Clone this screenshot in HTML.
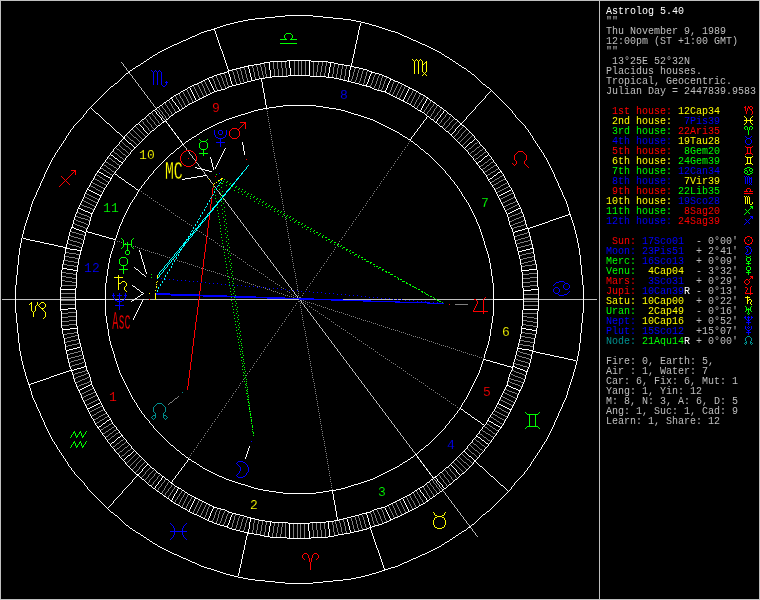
<!DOCTYPE html>
<html><head><meta charset="utf-8"><title>Astrolog 5.40</title>
<style>
html,body{margin:0;padding:0;background:#000;overflow:hidden}
svg{display:block;will-change:transform}
.sb text{font-family:"Liberation Mono",monospace;font-size:10px;white-space:pre}
.hn text{font-family:"Liberation Mono",monospace;font-size:13px;letter-spacing:.2px;text-anchor:middle}
.lb{font-family:"Liberation Mono",monospace}
</style></head><body>
<svg width="760" height="600" viewBox="0 0 760 600">
<rect width="760" height="600" fill="#000"/>
<g shape-rendering="crispEdges">
<path fill="#bfbfbf" d="M0 0h760v1h-760zM2 299h13v1h-13zM16 299h44v1h-44zM61 299h14v1h-14zM106 299h8v1h-8zM115 299h4v1h-4zM120 299h4v1h-4zM125 299h9v1h-9zM135 299h8v1h-8zM144 299h5v1h-5zM150 299h5v1h-5zM156 299h42v1h-42zM199 299h36v1h-36zM236 299h63v1h-63zM343 299h50v1h-50zM394 299h3v1h-3zM398 299h3v1h-3zM402 299h34v1h-34zM437 299h37v1h-37zM476 299h7v1h-7zM484 299h9v1h-9zM524 299h14v1h-14zM539 299h44v1h-44zM584 299h13v1h-13zM0 599h760v1h-760zM0 1h1v598h-1zM121 62h1v1h-1zM122 63h1v1h-1zM123 64h1v2h-1zM124 66h1v1h-1zM125 67h1v1h-1zM126 68h1v2h-1zM127 70h1v1h-1zM128 71h1v1h-1zM129 72h1v2h-1zM130 74h1v1h-1zM131 75h1v1h-1zM132 76h1v2h-1zM133 78h1v1h-1zM134 79h1v1h-1zM135 80h1v2h-1zM136 82h1v1h-1zM137 83h1v1h-1zM138 84h1v2h-1zM139 86h1v1h-1zM140 87h1v1h-1zM141 88h1v2h-1zM142 90h1v1h-1zM143 91h1v1h-1zM144 92h1v2h-1zM145 94h1v1h-1zM146 95h1v1h-1zM147 96h1v2h-1zM148 98h1v1h-1zM149 99h1v1h-1zM150 100h1v2h-1zM151 102h1v1h-1zM152 103h1v1h-1zM153 104h1v2h-1zM154 106h1v1h-1zM155 107h1v1h-1zM156 109h1v1h-1zM157 110h1v1h-1zM158 111h1v1h-1zM159 112h1v2h-1zM160 114h1v1h-1zM161 115h1v1h-1zM162 116h1v2h-1zM163 118h1v1h-1zM164 119h1v1h-1zM165 121h1v1h-1zM168 125h1v1h-1zM171 129h1v1h-1zM174 133h1v1h-1zM177 137h1v1h-1zM180 141h1v1h-1zM183 145h1v1h-1zM184 146h1v1h-1zM185 147h1v1h-1zM186 148h1v2h-1zM188 151h1v1h-1zM189 152h1v2h-1zM190 154h1v1h-1zM191 155h1v1h-1zM192 156h1v2h-1zM193 158h1v1h-1zM194 159h1v1h-1zM195 160h1v1h-1zM196 162h1v1h-1zM197 163h1v1h-1zM198 164h1v2h-1zM199 166h1v1h-1zM200 167h1v1h-1zM201 168h1v1h-1zM202 170h1v1h-1zM203 171h1v1h-1zM204 172h1v2h-1zM205 174h1v1h-1zM207 176h1v2h-1zM208 178h1v1h-1zM210 180h1v2h-1zM211 182h1v1h-1zM212 183h1v1h-1zM214 186h1v1h-1zM215 187h1v1h-1zM217 190h1v1h-1zM218 191h1v1h-1zM219 192h1v2h-1zM220 194h1v1h-1zM221 195h1v1h-1zM223 198h1v1h-1zM224 199h1v1h-1zM225 200h1v2h-1zM226 202h1v1h-1zM227 203h1v1h-1zM228 204h1v2h-1zM229 206h1v1h-1zM230 207h1v1h-1zM231 208h1v2h-1zM232 210h1v1h-1zM233 211h1v1h-1zM234 212h1v2h-1zM235 214h1v1h-1zM236 215h1v1h-1zM237 216h1v2h-1zM238 218h1v1h-1zM239 219h1v1h-1zM240 220h1v2h-1zM241 222h1v1h-1zM242 223h1v1h-1zM243 224h1v2h-1zM244 226h1v1h-1zM245 227h1v1h-1zM246 228h1v2h-1zM247 230h1v1h-1zM248 231h1v1h-1zM249 232h1v2h-1zM250 234h1v1h-1zM251 235h1v1h-1zM252 236h1v2h-1zM253 238h1v1h-1zM254 239h1v1h-1zM255 240h1v2h-1zM256 242h1v1h-1zM257 243h1v1h-1zM258 244h1v2h-1zM259 246h1v1h-1zM260 247h1v1h-1zM261 248h1v2h-1zM262 250h1v1h-1zM263 251h1v1h-1zM264 252h1v2h-1zM265 254h1v1h-1zM266 255h1v1h-1zM267 256h1v2h-1zM268 258h1v1h-1zM269 259h1v1h-1zM270 260h1v2h-1zM271 262h1v1h-1zM272 263h1v1h-1zM273 264h1v2h-1zM274 266h1v1h-1zM275 267h1v1h-1zM276 268h1v2h-1zM277 270h1v1h-1zM278 271h1v1h-1zM279 272h1v2h-1zM280 274h1v1h-1zM281 275h1v1h-1zM282 276h1v2h-1zM283 278h1v1h-1zM284 279h1v1h-1zM285 280h1v2h-1zM286 282h1v1h-1zM287 283h1v1h-1zM288 284h1v2h-1zM289 286h1v1h-1zM290 287h1v1h-1zM291 288h1v2h-1zM292 290h1v1h-1zM293 291h1v1h-1zM294 292h1v2h-1zM295 294h1v1h-1zM296 295h1v1h-1zM297 296h1v2h-1zM300 300h1v1h-1zM301 301h1v2h-1zM302 303h1v1h-1zM303 304h1v1h-1zM304 305h1v2h-1zM305 307h1v1h-1zM306 308h1v1h-1zM307 309h1v2h-1zM308 311h1v1h-1zM309 312h1v1h-1zM310 313h1v2h-1zM311 315h1v1h-1zM312 316h1v1h-1zM313 317h1v2h-1zM314 319h1v1h-1zM315 320h1v1h-1zM316 321h1v2h-1zM317 323h1v1h-1zM318 324h1v1h-1zM319 325h1v2h-1zM320 327h1v1h-1zM321 328h1v1h-1zM322 329h1v2h-1zM323 331h1v1h-1zM324 332h1v1h-1zM325 333h1v2h-1zM326 335h1v1h-1zM327 336h1v1h-1zM328 337h1v2h-1zM329 339h1v1h-1zM330 340h1v1h-1zM331 341h1v2h-1zM332 343h1v1h-1zM333 344h1v1h-1zM334 345h1v2h-1zM335 347h1v1h-1zM336 348h1v1h-1zM337 349h1v2h-1zM338 351h1v1h-1zM339 352h1v1h-1zM340 353h1v2h-1zM341 355h1v1h-1zM342 356h1v1h-1zM343 357h1v2h-1zM344 359h1v1h-1zM345 360h1v1h-1zM346 361h1v2h-1zM347 363h1v1h-1zM348 364h1v1h-1zM349 365h1v2h-1zM350 367h1v1h-1zM351 368h1v1h-1zM352 369h1v2h-1zM353 371h1v1h-1zM354 372h1v1h-1zM355 373h1v2h-1zM356 375h1v1h-1zM357 376h1v1h-1zM358 377h1v2h-1zM359 379h1v1h-1zM360 380h1v1h-1zM361 381h1v2h-1zM362 383h1v1h-1zM363 384h1v1h-1zM364 385h1v2h-1zM365 387h1v1h-1zM366 388h1v1h-1zM367 389h1v2h-1zM368 391h1v1h-1zM369 392h1v1h-1zM370 393h1v2h-1zM371 395h1v1h-1zM372 396h1v1h-1zM373 397h1v2h-1zM374 399h1v1h-1zM375 400h1v1h-1zM376 401h1v2h-1zM377 403h1v1h-1zM378 404h1v1h-1zM379 405h1v2h-1zM380 407h1v1h-1zM381 408h1v1h-1zM382 409h1v2h-1zM383 411h1v1h-1zM384 412h1v1h-1zM385 413h1v2h-1zM386 415h1v1h-1zM387 416h1v1h-1zM388 417h1v2h-1zM389 419h1v1h-1zM390 420h1v1h-1zM391 421h1v2h-1zM392 423h1v1h-1zM393 424h1v1h-1zM394 425h1v2h-1zM395 427h1v1h-1zM396 428h1v1h-1zM397 429h1v2h-1zM398 431h1v1h-1zM399 432h1v1h-1zM400 433h1v2h-1zM401 435h1v1h-1zM402 436h1v1h-1zM403 437h1v2h-1zM404 439h1v1h-1zM405 440h1v1h-1zM406 441h1v2h-1zM407 443h1v1h-1zM408 444h1v1h-1zM409 445h1v2h-1zM410 447h1v1h-1zM411 448h1v1h-1zM412 449h1v2h-1zM413 451h1v1h-1zM414 452h1v1h-1zM415 453h1v1h-1zM418 457h1v1h-1zM421 461h1v1h-1zM424 465h1v1h-1zM427 469h1v1h-1zM430 473h1v1h-1zM433 477h1v1h-1zM434 479h1v1h-1zM435 480h1v1h-1zM436 481h1v2h-1zM437 483h1v1h-1zM438 484h1v1h-1zM439 485h1v2h-1zM440 487h1v1h-1zM441 488h1v1h-1zM442 489h1v1h-1zM443 491h1v1h-1zM444 492h1v1h-1zM445 493h1v2h-1zM446 495h1v1h-1zM447 496h1v1h-1zM448 497h1v2h-1zM449 499h1v1h-1zM450 500h1v1h-1zM451 501h1v2h-1zM452 503h1v1h-1zM453 504h1v1h-1zM454 505h1v2h-1zM455 507h1v1h-1zM456 508h1v1h-1zM457 509h1v2h-1zM458 511h1v1h-1zM459 512h1v1h-1zM460 513h1v2h-1zM461 515h1v1h-1zM462 516h1v1h-1zM463 517h1v2h-1zM464 519h1v1h-1zM465 520h1v1h-1zM466 521h1v2h-1zM467 523h1v1h-1zM468 524h1v1h-1zM469 525h1v2h-1zM470 527h1v1h-1zM471 528h1v1h-1zM472 529h1v2h-1zM473 531h1v1h-1zM474 532h1v1h-1zM475 533h1v2h-1zM476 535h1v1h-1zM477 536h1v1h-1zM599 1h1v598h-1zM759 1h1v598h-1z"/>
<path fill="#ffffff" d="M285 15h28v1h-28zM275 16h10v1h-10zM313 16h10v1h-10zM265 17h10v1h-10zM323 17h10v1h-10zM255 18h10v1h-10zM333 18h10v1h-10zM248 19h7v1h-7zM343 19h8v1h-8zM243 20h5v1h-5zM351 20h5v1h-5zM238 21h5v1h-5zM356 21h5v1h-5zM234 22h4v1h-4zM361 22h4v1h-4zM230 23h4v1h-4zM365 23h4v1h-4zM226 24h4v1h-4zM369 24h3v1h-3zM223 25h3v1h-3zM372 25h4v1h-4zM220 26h3v1h-3zM376 26h3v1h-3zM217 27h3v1h-3zM379 27h3v1h-3zM214 28h3v1h-3zM382 28h3v1h-3zM211 29h4v1h-4zM385 29h3v1h-3zM207 30h4v1h-4zM388 30h3v1h-3zM204 31h3v1h-3zM391 31h4v1h-4zM201 32h3v1h-3zM395 32h3v1h-3zM199 33h2v1h-2zM398 33h2v1h-2zM197 34h2v1h-2zM400 34h2v1h-2zM195 35h2v1h-2zM402 35h2v1h-2zM192 36h3v1h-3zM404 36h3v1h-3zM190 37h2v1h-2zM407 37h2v1h-2zM188 38h2v1h-2zM409 38h2v1h-2zM186 39h2v1h-2zM411 39h2v1h-2zM183 40h3v1h-3zM413 40h3v1h-3zM181 41h2v1h-2zM416 41h2v1h-2zM179 42h2v1h-2zM418 42h2v1h-2zM177 43h2v1h-2zM420 43h2v1h-2zM174 44h3v1h-3zM422 44h3v1h-3zM172 45h2v1h-2zM425 45h2v1h-2zM170 46h2v1h-2zM427 46h2v1h-2zM168 47h2v1h-2zM429 47h2v1h-2zM166 48h2v1h-2zM431 48h2v1h-2zM164 49h2v1h-2zM433 49h2v1h-2zM162 50h2v1h-2zM435 50h2v1h-2zM160 51h2v1h-2zM437 51h2v1h-2zM158 52h2v1h-2zM439 52h2v1h-2zM155 54h2v1h-2zM442 54h2v1h-2zM153 55h2v1h-2zM445 56h2v1h-2zM150 57h2v1h-2zM447 57h2v1h-2zM147 59h2v1h-2zM450 59h2v1h-2zM287 60h24v1h-24zM144 61h2v1h-2zM270 61h17v1h-17zM311 61h17v1h-17zM453 61h2v1h-2zM264 62h6v1h-6zM328 62h6v1h-6zM141 63h2v1h-2zM260 63h4v1h-4zM334 63h4v1h-4zM456 63h2v1h-2zM254 64h6v1h-6zM338 64h6v1h-6zM138 65h2v1h-2zM248 65h6v1h-6zM344 65h6v1h-6zM459 65h2v1h-2zM136 66h2v1h-2zM244 66h5v1h-5zM350 66h4v1h-4zM240 67h4v1h-4zM354 67h5v1h-5zM462 67h2v1h-2zM133 68h2v1h-2zM236 68h4v1h-4zM359 68h4v1h-4zM464 68h2v1h-2zM232 69h4v1h-4zM363 69h4v1h-4zM130 70h2v1h-2zM228 70h4v1h-4zM367 70h2v1h-2zM227 71h2v1h-2zM369 71h3v1h-3zM468 71h2v1h-2zM224 72h3v1h-3zM371 72h4v1h-4zM126 73h2v1h-2zM220 73h4v1h-4zM375 73h4v1h-4zM217 74h3v1h-3zM379 74h3v1h-3zM472 74h2v1h-2zM214 75h3v1h-3zM288 75h22v1h-22zM382 75h2v1h-2zM212 76h2v1h-2zM272 76h16v1h-16zM310 76h16v1h-16zM384 76h3v1h-3zM209 77h3v1h-3zM265 77h7v1h-7zM326 77h8v1h-8zM387 77h2v1h-2zM207 78h2v1h-2zM259 78h6v1h-6zM334 78h5v1h-5zM389 78h2v1h-2zM205 79h2v1h-2zM255 79h4v1h-4zM339 79h4v1h-4zM390 79h3v1h-3zM203 80h2v1h-2zM251 80h4v1h-4zM343 80h4v1h-4zM393 80h2v1h-2zM201 81h2v1h-2zM247 81h4v1h-4zM347 81h4v1h-4zM395 81h3v1h-3zM199 82h2v1h-2zM244 82h3v1h-3zM351 82h4v1h-4zM398 82h2v1h-2zM115 83h2v1h-2zM197 83h2v1h-2zM240 83h4v1h-4zM355 83h4v1h-4zM400 83h2v1h-2zM194 84h3v1h-3zM236 84h4v1h-4zM359 84h3v1h-3zM402 84h2v1h-2zM483 84h2v1h-2zM192 85h2v1h-2zM232 85h4v1h-4zM362 85h5v1h-5zM404 85h2v1h-2zM111 86h2v1h-2zM190 86h2v1h-2zM229 86h3v1h-3zM366 86h4v1h-4zM406 86h2v1h-2zM188 87h2v1h-2zM227 87h2v1h-2zM370 87h2v1h-2zM408 87h2v1h-2zM487 87h2v1h-2zM225 88h2v1h-2zM372 88h2v1h-2zM409 88h3v1h-3zM185 89h2v1h-2zM221 89h4v1h-4zM374 89h3v1h-3zM412 89h2v1h-2zM183 90h2v1h-2zM217 90h4v1h-4zM377 90h4v1h-4zM414 90h2v1h-2zM181 91h2v1h-2zM214 91h3v1h-3zM381 91h5v1h-5zM416 91h2v1h-2zM212 92h2v1h-2zM385 92h2v1h-2zM178 93h2v1h-2zM210 93h2v1h-2zM387 93h2v1h-2zM419 93h2v1h-2zM176 94h2v1h-2zM208 94h2v1h-2zM389 94h2v1h-2zM421 94h2v1h-2zM174 95h2v1h-2zM206 95h2v1h-2zM391 95h2v1h-2zM423 95h2v1h-2zM204 96h2v1h-2zM393 96h2v1h-2zM171 97h2v1h-2zM202 97h2v1h-2zM395 97h2v1h-2zM426 97h2v1h-2zM170 98h2v1h-2zM200 98h2v1h-2zM397 98h2v1h-2zM427 98h2v1h-2zM198 99h2v1h-2zM399 99h2v1h-2zM167 100h2v1h-2zM196 100h2v1h-2zM401 100h3v1h-3zM430 100h2v1h-2zM194 101h2v1h-2zM403 101h2v1h-2zM164 102h2v1h-2zM192 102h2v1h-2zM405 102h2v1h-2zM433 102h2v1h-2zM190 103h2v1h-2zM407 103h2v1h-2zM188 104h2v1h-2zM409 104h2v1h-2zM160 105h2v1h-2zM283 105h33v1h-33zM437 105h2v1h-2zM185 106h2v1h-2zM276 106h7v1h-7zM316 106h7v1h-7zM412 106h2v1h-2zM157 107h2v1h-2zM269 107h7v1h-7zM323 107h6v1h-6zM440 107h2v1h-2zM182 108h2v1h-2zM263 108h6v1h-6zM329 108h7v1h-7zM415 108h2v1h-2zM258 109h5v1h-5zM336 109h5v1h-5zM153 110h2v1h-2zM179 110h2v1h-2zM254 110h4v1h-4zM341 110h4v1h-4zM418 110h3v1h-3zM444 110h2v1h-2zM177 111h2v1h-2zM251 111h3v1h-3zM345 111h3v1h-3zM420 111h2v1h-2zM175 112h2v1h-2zM248 112h3v1h-3zM348 112h3v1h-3zM422 112h2v1h-2zM96 113h2v1h-2zM149 113h2v1h-2zM245 113h3v1h-3zM351 113h3v1h-3zM241 114h4v1h-4zM354 114h4v1h-4zM449 114h2v1h-2zM171 115h2v1h-2zM238 115h3v1h-3zM358 115h3v1h-3zM235 116h3v1h-3zM361 116h3v1h-3zM427 116h2v1h-2zM232 117h3v1h-3zM364 117h3v1h-3zM229 118h3v1h-3zM367 118h3v1h-3zM142 119h2v1h-2zM166 119h2v1h-2zM226 119h3v1h-3zM370 119h3v1h-3zM431 119h2v1h-2zM455 119h2v1h-2zM224 120h2v1h-2zM373 120h2v1h-2zM163 121h2v1h-2zM222 121h2v1h-2zM375 121h2v1h-2zM162 122h2v1h-2zM219 122h3v1h-3zM377 122h2v1h-2zM435 122h2v1h-2zM107 123h2v1h-2zM217 123h2v1h-2zM379 123h2v1h-2zM460 123h2v1h-2zM136 124h2v1h-2zM215 124h2v1h-2zM381 124h2v1h-2zM460 124h2v1h-2zM158 125h2v1h-2zM213 125h2v1h-2zM383 125h2v1h-2zM462 125h2v1h-2zM211 126h2v1h-2zM385 126h2v1h-2zM440 126h2v1h-2zM209 127h2v1h-2zM387 127h2v1h-2zM207 128h2v1h-2zM389 128h2v1h-2zM205 129h2v1h-2zM391 129h2v1h-2zM152 130h2v1h-2zM203 130h2v1h-2zM393 130h2v1h-2zM395 131h2v1h-2zM446 131h2v1h-2zM117 132h2v1h-2zM200 132h2v1h-2zM397 132h2v1h-2zM197 134h2v1h-2zM400 134h2v1h-2zM450 134h2v1h-2zM194 136h2v1h-2zM403 136h2v1h-2zM123 137h2v1h-2zM192 137h2v1h-2zM405 137h2v1h-2zM123 138h2v1h-2zM189 139h2v1h-2zM408 139h3v1h-3zM186 141h2v1h-2zM411 141h2v1h-2zM470 142h2v1h-2zM129 143h2v1h-2zM182 144h2v1h-2zM415 144h2v1h-2zM134 147h2v1h-2zM177 148h2v1h-2zM421 149h2v1h-2zM171 153h2v1h-2zM426 153h2v1h-2zM111 155h2v1h-2zM485 156h2v1h-2zM115 158h2v1h-2zM119 161h2v1h-2zM479 161h2v1h-2zM121 162h2v1h-2zM476 163h2v1h-2zM195 167h2v1h-2zM197 168h4v1h-4zM201 169h4v1h-4zM205 170h4v1h-4zM97 171h2v1h-2zM209 171h3v1h-3zM500 171h2v1h-2zM99 172h2v1h-2zM498 172h2v1h-2zM101 173h2v1h-2zM115 174h2v1h-2zM104 175h2v1h-2zM203 175h4v1h-4zM494 175h2v1h-2zM106 176h2v1h-2zM197 176h6v1h-6zM108 177h2v1h-2zM119 177h2v1h-2zM191 177h6v1h-6zM110 178h2v1h-2zM185 178h6v1h-6zM490 178h2v1h-2zM122 179h2v1h-2zM182 179h3v1h-3zM488 179h2v1h-2zM126 182h2v1h-2zM129 184h2v1h-2zM132 186h2v1h-2zM87 189h2v1h-2zM136 189h2v1h-2zM89 190h2v1h-2zM509 190h2v1h-2zM91 191h2v1h-2zM507 191h2v1h-2zM93 192h2v1h-2zM505 192h2v1h-2zM95 193h2v1h-2zM503 193h2v1h-2zM97 194h2v1h-2zM501 194h2v1h-2zM99 195h3v1h-3zM499 195h2v1h-2zM78 208h3v1h-3zM518 208h3v1h-3zM81 209h2v1h-2zM516 209h2v1h-2zM83 210h2v1h-2zM514 210h2v1h-2zM85 211h3v1h-3zM512 211h2v1h-2zM88 212h2v1h-2zM510 212h2v1h-2zM90 213h3v1h-3zM508 213h2v1h-2zM568 214h3v1h-3zM565 215h3v1h-3zM562 216h3v1h-3zM559 217h3v1h-3zM556 218h3v1h-3zM553 219h3v1h-3zM550 220h3v1h-3zM548 221h2v1h-2zM545 222h3v1h-3zM542 223h3v1h-3zM539 224h3v1h-3zM536 225h3v1h-3zM533 226h3v1h-3zM71 227h3v1h-3zM530 227h3v1h-3zM74 228h2v1h-2zM525 228h5v1h-5zM76 229h3v1h-3zM522 229h3v1h-3zM79 230h3v1h-3zM518 230h4v1h-4zM82 231h2v1h-2zM86 231h2v1h-2zM515 231h3v1h-3zM84 232h2v1h-2zM88 232h4v1h-4zM513 232h2v1h-2zM92 233h3v1h-3zM95 234h4v1h-4zM99 235h3v1h-3zM102 236h4v1h-4zM106 237h3v1h-3zM23 238h3v1h-3zM109 238h4v1h-4zM26 239h4v1h-4zM113 239h3v1h-3zM30 240h5v1h-5zM35 241h5v1h-5zM40 242h4v1h-4zM44 243h5v1h-5zM49 244h5v1h-5zM54 245h4v1h-4zM58 246h5v1h-5zM63 247h4v1h-4zM65 248h5v1h-5zM530 248h4v1h-4zM70 249h7v1h-7zM526 249h4v1h-4zM77 250h5v1h-5zM522 250h4v1h-4zM518 251h4v1h-4zM62 268h5v1h-5zM67 269h6v1h-6zM136 269h2v1h-2zM529 269h8v1h-8zM73 270h5v1h-5zM521 270h8v1h-8zM142 274h2v1h-2zM133 286h2v1h-2zM60 289h16v1h-16zM137 289h2v1h-2zM531 289h8v1h-8zM523 290h8v1h-8zM141 292h2v1h-2zM141 294h2v1h-2zM138 296h2v1h-2zM135 298h2v1h-2zM75 299h31v1h-31zM493 299h31v1h-31zM132 300h2v1h-2zM68 308h8v1h-8zM60 309h8v1h-8zM523 309h16v1h-16zM70 328h8v1h-8zM521 328h5v1h-5zM62 329h8v1h-8zM526 329h6v1h-6zM532 330h5v1h-5zM77 347h3v1h-3zM73 348h4v1h-4zM517 348h5v1h-5zM69 349h4v1h-4zM522 349h7v1h-7zM66 350h3v1h-3zM529 350h4v1h-4zM532 351h4v1h-4zM536 352h4v1h-4zM540 353h5v1h-5zM545 354h5v1h-5zM550 355h4v1h-4zM554 356h5v1h-5zM559 357h5v1h-5zM564 358h4v1h-4zM483 359h3v1h-3zM568 359h5v1h-5zM486 360h4v1h-4zM573 360h3v1h-3zM490 361h3v1h-3zM493 362h4v1h-4zM497 363h3v1h-3zM500 364h4v1h-4zM504 365h3v1h-3zM84 366h3v1h-3zM507 366h4v1h-4zM512 366h3v1h-3zM81 367h3v1h-3zM511 367h2v1h-2zM515 367h2v1h-2zM77 368h4v1h-4zM517 368h3v1h-3zM74 369h3v1h-3zM520 369h3v1h-3zM69 370h5v1h-5zM523 370h2v1h-2zM66 371h3v1h-3zM525 371h3v1h-3zM63 372h3v1h-3zM60 373h3v1h-3zM57 374h3v1h-3zM54 375h3v1h-3zM51 376h3v1h-3zM49 377h2v1h-2zM46 378h3v1h-3zM43 379h3v1h-3zM40 380h3v1h-3zM37 381h3v1h-3zM34 382h3v1h-3zM31 383h3v1h-3zM28 384h3v1h-3zM90 384h2v1h-2zM88 385h2v1h-2zM506 385h3v1h-3zM86 386h2v1h-2zM509 386h2v1h-2zM84 387h2v1h-2zM511 387h2v1h-2zM82 388h2v1h-2zM513 388h3v1h-3zM80 389h2v1h-2zM516 389h2v1h-2zM78 390h2v1h-2zM518 390h3v1h-3zM98 403h2v1h-2zM497 403h2v1h-2zM96 404h2v1h-2zM499 404h2v1h-2zM94 405h2v1h-2zM501 405h2v1h-2zM92 406h2v1h-2zM503 406h2v1h-2zM90 407h2v1h-2zM505 407h2v1h-2zM87 408h3v1h-3zM507 408h2v1h-2zM461 409h2v1h-2zM509 409h3v1h-3zM465 412h2v1h-2zM468 414h2v1h-2zM472 417h2v1h-2zM109 419h2v1h-2zM475 419h2v1h-2zM107 420h2v1h-2zM487 420h2v1h-2zM478 421h2v1h-2zM489 421h2v1h-2zM491 422h2v1h-2zM103 423h2v1h-2zM482 424h2v1h-2zM494 424h2v1h-2zM496 425h2v1h-2zM99 426h2v1h-2zM498 426h2v1h-2zM97 427h2v1h-2zM500 427h2v1h-2zM121 435h2v1h-2zM476 436h2v1h-2zM118 437h2v1h-2zM478 437h2v1h-2zM482 440h2v1h-2zM112 442h2v1h-2zM486 443h2v1h-2zM171 445h2v1h-2zM426 445h2v1h-2zM421 449h2v1h-2zM177 450h2v1h-2zM463 451h2v1h-2zM182 454h2v1h-2zM415 454h2v1h-2zM128 455h2v1h-2zM469 456h2v1h-2zM186 457h2v1h-2zM411 457h2v1h-2zM188 459h3v1h-3zM408 459h2v1h-2zM474 460h2v1h-2zM192 461h2v1h-2zM405 461h2v1h-2zM474 461h2v1h-2zM194 462h2v1h-2zM403 462h2v1h-2zM147 464h2v1h-2zM197 464h2v1h-2zM400 464h2v1h-2zM200 466h2v1h-2zM397 466h2v1h-2zM480 466h2v1h-2zM395 467h2v1h-2zM446 467h2v1h-2zM152 468h2v1h-2zM203 468h2v1h-2zM393 468h2v1h-2zM205 469h2v1h-2zM391 469h2v1h-2zM207 470h2v1h-2zM389 470h2v1h-2zM209 471h2v1h-2zM387 471h2v1h-2zM211 472h2v1h-2zM385 472h2v1h-2zM440 472h2v1h-2zM158 473h2v1h-2zM213 473h2v1h-2zM383 473h2v1h-2zM462 473h2v1h-2zM136 474h3v1h-3zM215 474h2v1h-2zM381 474h2v1h-2zM137 475h2v1h-2zM217 475h2v1h-2zM379 475h2v1h-2zM162 476h2v1h-2zM219 476h3v1h-3zM377 476h2v1h-2zM435 476h2v1h-2zM491 476h2v1h-2zM222 477h2v1h-2zM375 477h2v1h-2zM434 477h2v1h-2zM224 478h2v1h-2zM373 478h2v1h-2zM142 479h2v1h-2zM166 479h2v1h-2zM226 479h3v1h-3zM370 479h3v1h-3zM431 479h2v1h-2zM455 479h2v1h-2zM229 480h3v1h-3zM367 480h3v1h-3zM232 481h3v1h-3zM364 481h3v1h-3zM170 482h2v1h-2zM235 482h3v1h-3zM361 482h3v1h-3zM427 482h2v1h-2zM171 483h2v1h-2zM238 483h3v1h-3zM358 483h3v1h-3zM241 484h4v1h-4zM354 484h4v1h-4zM449 484h2v1h-2zM149 485h2v1h-2zM245 485h3v1h-3zM351 485h3v1h-3zM501 485h2v1h-2zM175 486h2v1h-2zM248 486h3v1h-3zM348 486h3v1h-3zM422 486h2v1h-2zM177 487h2v1h-2zM251 487h3v1h-3zM345 487h3v1h-3zM420 487h2v1h-2zM153 488h2v1h-2zM178 488h3v1h-3zM254 488h4v1h-4zM341 488h4v1h-4zM418 488h2v1h-2zM444 488h2v1h-2zM258 489h5v1h-5zM336 489h5v1h-5zM182 490h2v1h-2zM263 490h6v1h-6zM329 490h7v1h-7zM415 490h2v1h-2zM157 491h2v1h-2zM269 491h7v1h-7zM323 491h6v1h-6zM440 491h2v1h-2zM185 492h2v1h-2zM276 492h7v1h-7zM316 492h7v1h-7zM412 492h2v1h-2zM160 493h2v1h-2zM283 493h33v1h-33zM437 493h2v1h-2zM188 494h2v1h-2zM409 494h2v1h-2zM190 495h2v1h-2zM407 495h2v1h-2zM164 496h2v1h-2zM192 496h2v1h-2zM405 496h2v1h-2zM433 496h2v1h-2zM194 497h2v1h-2zM403 497h2v1h-2zM167 498h2v1h-2zM195 498h3v1h-3zM401 498h2v1h-2zM430 498h2v1h-2zM198 499h2v1h-2zM399 499h2v1h-2zM170 500h2v1h-2zM200 500h2v1h-2zM397 500h2v1h-2zM427 500h2v1h-2zM171 501h2v1h-2zM202 501h2v1h-2zM395 501h2v1h-2zM426 501h2v1h-2zM204 502h2v1h-2zM393 502h2v1h-2zM174 503h2v1h-2zM206 503h2v1h-2zM391 503h2v1h-2zM423 503h2v1h-2zM176 504h2v1h-2zM208 504h2v1h-2zM389 504h2v1h-2zM421 504h2v1h-2zM178 505h2v1h-2zM210 505h2v1h-2zM387 505h2v1h-2zM419 505h2v1h-2zM212 506h2v1h-2zM385 506h2v1h-2zM181 507h2v1h-2zM213 507h4v1h-4zM381 507h4v1h-4zM416 507h2v1h-2zM183 508h2v1h-2zM217 508h4v1h-4zM377 508h4v1h-4zM414 508h2v1h-2zM185 509h2v1h-2zM221 509h4v1h-4zM374 509h3v1h-3zM412 509h2v1h-2zM225 510h2v1h-2zM372 510h2v1h-2zM410 510h2v1h-2zM188 511h2v1h-2zM227 511h2v1h-2zM370 511h2v1h-2zM408 511h2v1h-2zM487 511h2v1h-2zM111 512h2v1h-2zM190 512h2v1h-2zM229 512h3v1h-3zM366 512h4v1h-4zM406 512h2v1h-2zM192 513h2v1h-2zM232 513h4v1h-4zM362 513h5v1h-5zM404 513h2v1h-2zM194 514h3v1h-3zM236 514h4v1h-4zM359 514h3v1h-3zM402 514h2v1h-2zM483 514h2v1h-2zM115 515h2v1h-2zM197 515h2v1h-2zM240 515h4v1h-4zM355 515h4v1h-4zM400 515h2v1h-2zM199 516h2v1h-2zM244 516h3v1h-3zM351 516h4v1h-4zM398 516h2v1h-2zM201 517h2v1h-2zM247 517h4v1h-4zM347 517h4v1h-4zM395 517h3v1h-3zM203 518h2v1h-2zM250 518h5v1h-5zM343 518h4v1h-4zM393 518h2v1h-2zM205 519h2v1h-2zM255 519h4v1h-4zM339 519h4v1h-4zM390 519h3v1h-3zM207 520h2v1h-2zM259 520h6v1h-6zM334 520h5v1h-5zM389 520h2v1h-2zM209 521h3v1h-3zM265 521h7v1h-7zM326 521h8v1h-8zM387 521h2v1h-2zM212 522h2v1h-2zM272 522h16v1h-16zM310 522h16v1h-16zM384 522h3v1h-3zM214 523h3v1h-3zM288 523h22v1h-22zM382 523h2v1h-2zM217 524h3v1h-3zM379 524h3v1h-3zM472 524h2v1h-2zM126 525h2v1h-2zM220 525h4v1h-4zM375 525h4v1h-4zM224 526h4v1h-4zM372 526h3v1h-3zM227 527h2v1h-2zM369 527h3v1h-3zM468 527h2v1h-2zM130 528h2v1h-2zM229 528h3v1h-3zM367 528h2v1h-2zM232 529h4v1h-4zM363 529h4v1h-4zM133 530h2v1h-2zM236 530h4v1h-4zM359 530h4v1h-4zM464 530h2v1h-2zM240 531h4v1h-4zM354 531h5v1h-5zM462 531h2v1h-2zM136 532h2v1h-2zM244 532h5v1h-5zM350 532h4v1h-4zM138 533h2v1h-2zM247 533h7v1h-7zM344 533h6v1h-6zM459 533h2v1h-2zM254 534h6v1h-6zM338 534h6v1h-6zM141 535h2v1h-2zM260 535h4v1h-4zM334 535h4v1h-4zM456 535h2v1h-2zM264 536h6v1h-6zM328 536h6v1h-6zM144 537h2v1h-2zM270 537h17v1h-17zM311 537h17v1h-17zM453 537h2v1h-2zM287 538h24v1h-24zM147 539h2v1h-2zM450 539h2v1h-2zM150 541h2v1h-2zM447 541h2v1h-2zM445 542h2v1h-2zM153 543h2v1h-2zM155 544h2v1h-2zM442 544h2v1h-2zM158 546h2v1h-2zM439 546h2v1h-2zM160 547h2v1h-2zM437 547h2v1h-2zM162 548h2v1h-2zM435 548h2v1h-2zM164 549h2v1h-2zM433 549h2v1h-2zM166 550h2v1h-2zM431 550h2v1h-2zM168 551h2v1h-2zM429 551h2v1h-2zM170 552h2v1h-2zM427 552h2v1h-2zM172 553h2v1h-2zM425 553h2v1h-2zM174 554h3v1h-3zM422 554h3v1h-3zM177 555h2v1h-2zM420 555h2v1h-2zM179 556h2v1h-2zM418 556h2v1h-2zM181 557h2v1h-2zM416 557h2v1h-2zM183 558h3v1h-3zM413 558h3v1h-3zM186 559h2v1h-2zM411 559h2v1h-2zM188 560h2v1h-2zM409 560h2v1h-2zM190 561h2v1h-2zM407 561h2v1h-2zM192 562h3v1h-3zM404 562h3v1h-3zM195 563h2v1h-2zM402 563h2v1h-2zM197 564h2v1h-2zM400 564h2v1h-2zM199 565h2v1h-2zM398 565h2v1h-2zM201 566h3v1h-3zM395 566h3v1h-3zM204 567h3v1h-3zM391 567h4v1h-4zM207 568h4v1h-4zM388 568h3v1h-3zM211 569h3v1h-3zM384 569h4v1h-4zM214 570h3v1h-3zM382 570h3v1h-3zM217 571h3v1h-3zM379 571h3v1h-3zM220 572h3v1h-3zM376 572h3v1h-3zM223 573h3v1h-3zM372 573h4v1h-4zM226 574h4v1h-4zM369 574h3v1h-3zM230 575h4v1h-4zM365 575h4v1h-4zM234 576h4v1h-4zM361 576h4v1h-4zM238 577h5v1h-5zM356 577h5v1h-5zM243 578h5v1h-5zM351 578h5v1h-5zM248 579h7v1h-7zM343 579h8v1h-8zM255 580h10v1h-10zM333 580h10v1h-10zM265 581h10v1h-10zM323 581h10v1h-10zM275 582h10v1h-10zM313 582h10v1h-10zM285 583h28v1h-28zM15 285h1v28h-1zM16 275h1v10h-1zM16 313h1v10h-1zM17 265h1v10h-1zM17 323h1v10h-1zM18 255h1v10h-1zM18 333h1v10h-1zM19 248h1v7h-1zM19 343h1v8h-1zM20 243h1v5h-1zM20 351h1v5h-1zM21 238h1v5h-1zM21 356h1v5h-1zM22 234h1v4h-1zM22 361h1v4h-1zM23 230h1v4h-1zM23 365h1v4h-1zM24 226h1v4h-1zM24 369h1v3h-1zM25 223h1v3h-1zM25 372h1v4h-1zM26 220h1v3h-1zM26 376h1v3h-1zM27 217h1v3h-1zM27 379h1v3h-1zM28 214h1v3h-1zM28 382h1v2h-1zM29 211h1v3h-1zM29 385h1v3h-1zM30 207h1v4h-1zM30 388h1v3h-1zM31 204h1v3h-1zM31 391h1v4h-1zM32 201h1v3h-1zM32 395h1v3h-1zM33 199h1v2h-1zM33 398h1v2h-1zM34 197h1v2h-1zM34 400h1v2h-1zM35 195h1v2h-1zM35 402h1v2h-1zM36 192h1v3h-1zM36 404h1v3h-1zM37 190h1v2h-1zM37 407h1v2h-1zM38 188h1v2h-1zM38 409h1v2h-1zM39 186h1v2h-1zM39 411h1v2h-1zM40 183h1v3h-1zM40 413h1v3h-1zM41 181h1v2h-1zM41 416h1v2h-1zM42 179h1v2h-1zM42 418h1v2h-1zM43 177h1v2h-1zM43 420h1v2h-1zM44 174h1v3h-1zM44 422h1v3h-1zM45 172h1v2h-1zM45 425h1v2h-1zM46 170h1v2h-1zM46 427h1v2h-1zM47 168h1v2h-1zM47 429h1v2h-1zM48 166h1v2h-1zM48 431h1v2h-1zM49 164h1v2h-1zM49 433h1v2h-1zM50 162h1v2h-1zM50 435h1v2h-1zM51 160h1v2h-1zM51 437h1v2h-1zM52 158h1v2h-1zM52 439h1v2h-1zM53 157h1v1h-1zM53 441h1v1h-1zM54 155h1v2h-1zM54 442h1v2h-1zM55 153h1v2h-1zM55 444h1v1h-1zM56 152h1v1h-1zM56 445h1v2h-1zM57 150h1v2h-1zM57 447h1v2h-1zM58 149h1v1h-1zM58 449h1v1h-1zM59 147h1v2h-1zM59 450h1v2h-1zM60 146h1v1h-1zM60 287h1v2h-1zM60 290h1v19h-1zM60 310h1v1h-1zM60 452h1v1h-1zM61 144h1v2h-1zM61 270h1v17h-1zM61 311h1v17h-1zM61 453h1v2h-1zM62 143h1v1h-1zM62 264h1v4h-1zM62 269h1v1h-1zM62 328h1v1h-1zM62 330h1v4h-1zM62 455h1v1h-1zM63 141h1v2h-1zM63 260h1v4h-1zM63 334h1v4h-1zM63 456h1v2h-1zM64 140h1v1h-1zM64 254h1v6h-1zM64 338h1v6h-1zM64 458h1v1h-1zM65 138h1v2h-1zM65 249h1v5h-1zM65 344h1v6h-1zM65 459h1v2h-1zM66 136h1v2h-1zM66 244h1v3h-1zM66 351h1v3h-1zM66 461h1v1h-1zM67 135h1v1h-1zM67 240h1v4h-1zM67 354h1v5h-1zM67 462h1v2h-1zM68 133h1v2h-1zM68 236h1v4h-1zM68 359h1v4h-1zM68 464h1v2h-1zM69 132h1v1h-1zM69 232h1v4h-1zM69 363h1v4h-1zM69 466h1v1h-1zM70 130h1v2h-1zM70 229h1v3h-1zM70 367h1v2h-1zM70 467h1v1h-1zM71 129h1v1h-1zM71 228h1v1h-1zM71 369h1v1h-1zM71 371h1v1h-1zM71 468h1v2h-1zM72 128h1v1h-1zM72 224h1v3h-1zM72 372h1v3h-1zM72 470h1v1h-1zM73 126h1v2h-1zM73 220h1v4h-1zM73 375h1v4h-1zM73 471h1v1h-1zM74 125h1v1h-1zM74 217h1v3h-1zM74 379h1v3h-1zM74 472h1v2h-1zM75 124h1v1h-1zM75 214h1v3h-1zM75 288h1v1h-1zM75 290h1v9h-1zM75 300h1v8h-1zM75 309h1v1h-1zM75 382h1v2h-1zM75 474h1v1h-1zM76 123h1v1h-1zM76 212h1v2h-1zM76 272h1v16h-1zM76 310h1v16h-1zM76 384h1v3h-1zM76 475h1v1h-1zM77 122h1v1h-1zM77 209h1v3h-1zM77 265h1v5h-1zM77 271h1v1h-1zM77 326h1v2h-1zM77 329h1v5h-1zM77 387h1v2h-1zM77 476h1v1h-1zM78 121h1v1h-1zM78 207h1v1h-1zM78 259h1v6h-1zM78 334h1v5h-1zM78 389h1v1h-1zM78 477h1v1h-1zM79 120h1v1h-1zM79 205h1v2h-1zM79 255h1v4h-1zM79 339h1v4h-1zM79 391h1v2h-1zM79 478h1v1h-1zM80 119h1v1h-1zM80 203h1v2h-1zM80 251h1v4h-1zM80 343h1v4h-1zM80 393h1v2h-1zM80 479h1v1h-1zM81 118h1v1h-1zM81 201h1v2h-1zM81 247h1v3h-1zM81 347h1v4h-1zM81 395h1v3h-1zM81 480h1v1h-1zM82 117h1v1h-1zM82 199h1v2h-1zM82 244h1v3h-1zM82 351h1v4h-1zM82 398h1v2h-1zM82 481h1v1h-1zM83 115h1v2h-1zM83 197h1v2h-1zM83 240h1v4h-1zM83 355h1v4h-1zM83 400h1v2h-1zM83 482h1v1h-1zM84 114h1v1h-1zM84 194h1v3h-1zM84 236h1v4h-1zM84 359h1v3h-1zM84 402h1v2h-1zM84 483h1v2h-1zM85 113h1v1h-1zM85 192h1v2h-1zM85 233h1v3h-1zM85 362h1v4h-1zM85 404h1v2h-1zM85 485h1v1h-1zM86 111h1v2h-1zM86 190h1v2h-1zM86 229h1v2h-1zM86 367h1v3h-1zM86 406h1v2h-1zM86 486h1v1h-1zM87 110h1v1h-1zM87 188h1v1h-1zM87 227h1v2h-1zM87 370h1v2h-1zM87 409h1v1h-1zM87 487h1v2h-1zM88 109h1v1h-1zM88 187h1v1h-1zM88 225h1v2h-1zM88 372h1v2h-1zM88 410h1v2h-1zM88 489h1v1h-1zM89 108h1v1h-1zM89 185h1v2h-1zM89 221h1v4h-1zM89 374h1v3h-1zM89 412h1v2h-1zM89 490h1v1h-1zM90 107h1v1h-1zM90 183h1v2h-1zM90 217h1v4h-1zM90 377h1v4h-1zM90 414h1v2h-1zM90 491h1v1h-1zM91 106h1v1h-1zM91 108h1v1h-1zM91 181h1v2h-1zM91 214h1v3h-1zM91 381h1v3h-1zM91 416h1v2h-1zM91 492h1v1h-1zM92 105h1v1h-1zM92 109h1v1h-1zM92 180h1v1h-1zM92 212h1v1h-1zM92 385h1v2h-1zM92 418h1v1h-1zM92 493h1v1h-1zM93 104h1v1h-1zM93 110h1v1h-1zM93 178h1v2h-1zM93 210h1v2h-1zM93 387h1v2h-1zM93 419h1v2h-1zM93 494h1v1h-1zM94 103h1v1h-1zM94 111h1v1h-1zM94 176h1v2h-1zM94 208h1v2h-1zM94 389h1v2h-1zM94 421h1v2h-1zM94 495h1v1h-1zM95 102h1v1h-1zM95 112h1v1h-1zM95 174h1v2h-1zM95 206h1v2h-1zM95 391h1v2h-1zM95 423h1v2h-1zM95 496h1v1h-1zM96 101h1v1h-1zM96 173h1v1h-1zM96 204h1v2h-1zM96 393h1v2h-1zM96 425h1v1h-1zM96 497h1v1h-1zM97 100h1v1h-1zM97 172h1v1h-1zM97 202h1v2h-1zM97 395h1v2h-1zM97 426h1v1h-1zM97 498h1v1h-1zM98 99h1v1h-1zM98 114h1v1h-1zM98 170h1v1h-1zM98 200h1v2h-1zM98 397h1v2h-1zM98 428h1v1h-1zM98 499h1v1h-1zM99 98h1v1h-1zM99 115h1v1h-1zM99 169h1v1h-1zM99 198h1v2h-1zM99 399h1v2h-1zM99 429h1v1h-1zM99 500h1v1h-1zM100 97h1v1h-1zM100 116h1v1h-1zM100 167h1v2h-1zM100 196h1v2h-1zM100 401h1v2h-1zM100 430h1v2h-1zM100 501h1v1h-1zM101 96h1v1h-1zM101 117h1v1h-1zM101 166h1v1h-1zM101 194h1v1h-1zM101 403h1v2h-1zM101 425h1v1h-1zM101 432h1v1h-1zM101 502h1v1h-1zM102 95h1v1h-1zM102 118h1v1h-1zM102 164h1v2h-1zM102 192h1v2h-1zM102 405h1v2h-1zM102 424h1v1h-1zM102 433h1v2h-1zM102 503h1v1h-1zM103 94h1v1h-1zM103 119h1v1h-1zM103 163h1v1h-1zM103 174h1v1h-1zM103 190h1v2h-1zM103 407h1v2h-1zM103 435h1v1h-1zM103 504h1v1h-1zM104 93h1v1h-1zM104 120h1v1h-1zM104 162h1v1h-1zM104 188h1v2h-1zM104 409h1v2h-1zM104 436h1v1h-1zM104 505h1v1h-1zM105 92h1v1h-1zM105 121h1v1h-1zM105 160h1v2h-1zM105 187h1v1h-1zM105 283h1v16h-1zM105 300h1v16h-1zM105 411h1v1h-1zM105 422h1v1h-1zM105 437h1v2h-1zM105 506h1v1h-1zM106 91h1v1h-1zM106 122h1v1h-1zM106 159h1v1h-1zM106 185h1v2h-1zM106 276h1v7h-1zM106 316h1v7h-1zM106 412h1v2h-1zM106 421h1v1h-1zM106 439h1v1h-1zM106 507h1v1h-1zM107 90h1v1h-1zM107 157h1v2h-1zM107 184h1v1h-1zM107 269h1v7h-1zM107 323h1v6h-1zM107 414h1v1h-1zM107 440h1v2h-1zM107 508h1v1h-1zM108 89h1v1h-1zM108 156h1v1h-1zM108 182h1v2h-1zM108 263h1v6h-1zM108 329h1v7h-1zM108 415h1v2h-1zM108 442h1v1h-1zM108 507h1v1h-1zM108 509h1v1h-1zM109 88h1v1h-1zM109 124h1v1h-1zM109 155h1v1h-1zM109 181h1v1h-1zM109 258h1v5h-1zM109 336h1v5h-1zM109 417h1v1h-1zM109 443h1v1h-1zM109 506h1v1h-1zM109 510h1v1h-1zM110 87h1v1h-1zM110 125h1v1h-1zM110 153h1v2h-1zM110 179h1v2h-1zM110 254h1v4h-1zM110 341h1v4h-1zM110 418h1v1h-1zM110 444h1v2h-1zM110 505h1v1h-1zM110 511h1v1h-1zM111 126h1v1h-1zM111 152h1v1h-1zM111 177h1v1h-1zM111 251h1v3h-1zM111 345h1v3h-1zM111 420h1v2h-1zM111 443h1v1h-1zM111 446h1v1h-1zM111 504h1v1h-1zM112 127h1v1h-1zM112 151h1v1h-1zM112 175h1v2h-1zM112 248h1v3h-1zM112 348h1v3h-1zM112 422h1v2h-1zM112 447h1v1h-1zM112 503h1v1h-1zM113 85h1v1h-1zM113 128h1v1h-1zM113 149h1v2h-1zM113 156h1v1h-1zM113 174h1v1h-1zM113 245h1v3h-1zM113 351h1v3h-1zM113 424h1v1h-1zM113 448h1v1h-1zM113 501h1v2h-1zM113 513h1v1h-1zM114 84h1v1h-1zM114 129h1v1h-1zM114 148h1v1h-1zM114 157h1v1h-1zM114 173h1v1h-1zM114 241h1v4h-1zM114 354h1v4h-1zM114 425h1v1h-1zM114 441h1v1h-1zM114 449h1v2h-1zM114 500h1v1h-1zM114 514h1v1h-1zM115 130h1v1h-1zM115 147h1v1h-1zM115 171h1v2h-1zM115 238h1v1h-1zM115 358h1v3h-1zM115 426h1v1h-1zM115 440h1v1h-1zM115 451h1v1h-1zM115 499h1v1h-1zM116 131h1v1h-1zM116 146h1v1h-1zM116 170h1v1h-1zM116 235h1v3h-1zM116 361h1v3h-1zM116 427h1v2h-1zM116 439h1v1h-1zM116 452h1v1h-1zM116 498h1v1h-1zM117 82h1v1h-1zM117 145h1v1h-1zM117 159h1v1h-1zM117 169h1v1h-1zM117 175h1v1h-1zM117 232h1v3h-1zM117 364h1v3h-1zM117 429h1v1h-1zM117 438h1v1h-1zM117 453h1v1h-1zM117 497h1v1h-1zM117 516h1v1h-1zM118 81h1v1h-1zM118 144h1v1h-1zM118 160h1v1h-1zM118 168h1v1h-1zM118 176h1v1h-1zM118 229h1v3h-1zM118 367h1v3h-1zM118 430h1v1h-1zM118 454h1v1h-1zM118 496h1v1h-1zM118 517h1v1h-1zM119 80h1v1h-1zM119 133h1v1h-1zM119 142h1v2h-1zM119 166h1v2h-1zM119 226h1v3h-1zM119 370h1v3h-1zM119 431h1v2h-1zM119 455h1v2h-1zM119 495h1v1h-1zM119 518h1v1h-1zM120 79h1v1h-1zM120 134h1v1h-1zM120 141h1v1h-1zM120 165h1v1h-1zM120 224h1v2h-1zM120 373h1v2h-1zM120 433h1v1h-1zM120 436h1v1h-1zM120 457h1v1h-1zM120 494h1v1h-1zM120 519h1v1h-1zM121 78h1v1h-1zM121 135h1v1h-1zM121 140h1v1h-1zM121 164h1v1h-1zM121 178h1v1h-1zM121 222h1v2h-1zM121 375h1v2h-1zM121 434h1v1h-1zM121 458h1v1h-1zM121 493h1v1h-1zM121 520h1v1h-1zM122 77h1v1h-1zM122 136h1v1h-1zM122 139h1v1h-1zM122 163h1v1h-1zM122 219h1v3h-1zM122 377h1v2h-1zM122 436h1v1h-1zM122 459h1v1h-1zM122 491h1v2h-1zM122 521h1v1h-1zM123 76h1v1h-1zM123 161h1v1h-1zM123 217h1v2h-1zM123 379h1v2h-1zM123 437h1v1h-1zM123 460h1v1h-1zM123 490h1v1h-1zM123 522h1v1h-1zM124 75h1v1h-1zM124 136h1v1h-1zM124 160h1v1h-1zM124 180h1v1h-1zM124 215h1v2h-1zM124 381h1v2h-1zM124 438h1v1h-1zM124 459h1v1h-1zM124 461h1v1h-1zM124 489h1v1h-1zM124 523h1v1h-1zM125 74h1v1h-1zM125 135h1v1h-1zM125 139h1v1h-1zM125 158h1v2h-1zM125 181h1v1h-1zM125 213h1v2h-1zM125 383h1v2h-1zM125 439h1v1h-1zM125 458h1v1h-1zM125 462h1v2h-1zM125 488h1v1h-1zM125 524h1v1h-1zM126 134h1v1h-1zM126 140h1v1h-1zM126 157h1v1h-1zM126 211h1v2h-1zM126 385h1v2h-1zM126 440h1v2h-1zM126 457h1v1h-1zM126 464h1v1h-1zM126 487h1v1h-1zM127 133h1v1h-1zM127 141h1v1h-1zM127 156h1v1h-1zM127 209h1v2h-1zM127 387h1v2h-1zM127 442h1v1h-1zM127 456h1v1h-1zM127 465h1v1h-1zM127 486h1v1h-1zM128 72h1v1h-1zM128 132h1v1h-1zM128 142h1v1h-1zM128 155h1v1h-1zM128 183h1v1h-1zM128 207h1v2h-1zM128 389h1v2h-1zM128 443h1v1h-1zM128 466h1v1h-1zM128 485h1v1h-1zM128 526h1v1h-1zM129 71h1v1h-1zM129 131h1v1h-1zM129 154h1v1h-1zM129 205h1v2h-1zM129 391h1v2h-1zM129 444h1v1h-1zM129 467h1v1h-1zM129 484h1v1h-1zM129 527h1v1h-1zM130 130h1v1h-1zM130 152h1v2h-1zM130 203h1v2h-1zM130 393h1v2h-1zM130 445h1v1h-1zM130 454h1v1h-1zM130 468h1v1h-1zM130 483h1v1h-1zM131 129h1v1h-1zM131 144h1v1h-1zM131 151h1v1h-1zM131 185h1v1h-1zM131 202h1v1h-1zM131 301h1v1h-1zM131 395h1v2h-1zM131 446h1v2h-1zM131 453h1v1h-1zM131 469h1v1h-1zM131 482h1v1h-1zM132 69h1v1h-1zM132 128h1v1h-1zM132 145h1v1h-1zM132 150h1v1h-1zM132 200h1v2h-1zM132 285h1v1h-1zM132 397h1v2h-1zM132 448h1v1h-1zM132 452h1v1h-1zM132 470h1v1h-1zM132 480h1v2h-1zM132 529h1v1h-1zM133 127h1v1h-1zM133 146h1v1h-1zM133 149h1v1h-1zM133 199h1v1h-1zM133 318h1v2h-1zM133 399h1v1h-1zM133 449h1v1h-1zM133 451h1v1h-1zM133 471h1v1h-1zM133 479h1v1h-1zM134 126h1v1h-1zM134 148h1v1h-1zM134 187h1v1h-1zM134 197h1v2h-1zM134 267h1v1h-1zM134 299h1v1h-1zM134 316h1v2h-1zM134 400h1v2h-1zM134 450h1v1h-1zM134 472h1v1h-1zM134 478h1v1h-1zM135 67h1v1h-1zM135 125h1v1h-1zM135 188h1v1h-1zM135 196h1v1h-1zM135 268h1v1h-1zM135 287h1v1h-1zM135 314h1v2h-1zM135 402h1v1h-1zM135 451h1v1h-1zM135 473h1v1h-1zM135 477h1v1h-1zM135 531h1v1h-1zM136 146h1v1h-1zM136 194h1v2h-1zM136 288h1v1h-1zM136 312h1v2h-1zM136 403h1v2h-1zM136 452h1v1h-1zM136 476h1v1h-1zM137 145h1v1h-1zM137 192h1v2h-1zM137 297h1v1h-1zM137 310h1v2h-1zM137 405h1v2h-1zM137 453h1v1h-1zM138 123h1v1h-1zM138 144h1v1h-1zM138 190h1v2h-1zM138 270h1v1h-1zM138 308h1v2h-1zM138 407h1v1h-1zM138 454h1v1h-1zM139 122h1v1h-1zM139 124h1v1h-1zM139 143h1v1h-1zM139 189h1v1h-1zM139 250h1v2h-1zM139 271h1v1h-1zM139 290h1v1h-1zM139 306h1v2h-1zM139 408h1v2h-1zM139 455h1v1h-1zM139 473h1v1h-1zM139 476h1v1h-1zM140 64h1v1h-1zM140 121h1v1h-1zM140 125h1v1h-1zM140 142h1v1h-1zM140 188h1v1h-1zM140 252h1v3h-1zM140 272h1v1h-1zM140 291h1v1h-1zM140 295h1v1h-1zM140 304h1v2h-1zM140 410h1v1h-1zM140 456h1v1h-1zM140 472h1v1h-1zM140 477h1v1h-1zM140 534h1v1h-1zM141 120h1v1h-1zM141 126h1v1h-1zM141 141h1v1h-1zM141 186h1v2h-1zM141 255h1v4h-1zM141 273h1v1h-1zM141 302h1v2h-1zM141 411h1v2h-1zM141 457h1v1h-1zM141 471h1v1h-1zM141 478h1v1h-1zM142 127h1v1h-1zM142 140h1v1h-1zM142 185h1v1h-1zM142 259h1v3h-1zM142 300h1v2h-1zM142 413h1v1h-1zM142 458h1v1h-1zM142 469h1v2h-1zM143 62h1v1h-1zM143 128h1v2h-1zM143 139h1v1h-1zM143 184h1v1h-1zM143 262h1v3h-1zM143 293h1v1h-1zM143 299h1v1h-1zM143 414h1v1h-1zM143 459h1v1h-1zM143 468h1v1h-1zM143 536h1v1h-1zM144 118h1v1h-1zM144 130h1v1h-1zM144 138h1v1h-1zM144 182h1v2h-1zM144 265h1v4h-1zM144 275h1v1h-1zM144 415h1v2h-1zM144 460h1v1h-1zM144 467h1v1h-1zM144 480h1v1h-1zM145 117h1v1h-1zM145 131h1v1h-1zM145 137h1v1h-1zM145 181h1v1h-1zM145 269h1v3h-1zM145 276h1v1h-1zM145 417h1v1h-1zM145 461h1v1h-1zM145 466h1v1h-1zM145 481h1v1h-1zM146 60h1v1h-1zM146 116h1v1h-1zM146 132h1v1h-1zM146 136h1v1h-1zM146 180h1v1h-1zM146 272h1v2h-1zM146 418h1v1h-1zM146 462h1v1h-1zM146 465h1v1h-1zM146 482h1v1h-1zM146 538h1v1h-1zM147 115h1v1h-1zM147 133h1v1h-1zM147 135h1v1h-1zM147 179h1v1h-1zM147 419h1v1h-1zM147 463h1v1h-1zM147 483h1v1h-1zM148 114h1v1h-1zM148 134h1v1h-1zM148 177h1v2h-1zM148 420h1v1h-1zM148 484h1v1h-1zM149 58h1v1h-1zM149 133h1v1h-1zM149 176h1v1h-1zM149 421h1v2h-1zM149 465h1v1h-1zM149 540h1v1h-1zM150 132h1v1h-1zM150 175h1v1h-1zM150 423h1v1h-1zM150 466h1v1h-1zM151 112h1v1h-1zM151 131h1v1h-1zM151 174h1v1h-1zM151 424h1v1h-1zM151 467h1v1h-1zM151 486h1v1h-1zM152 56h1v1h-1zM152 111h1v1h-1zM152 173h1v1h-1zM152 425h1v1h-1zM152 487h1v1h-1zM152 542h1v1h-1zM153 171h1v2h-1zM153 426h1v2h-1zM154 129h1v1h-1zM154 170h1v1h-1zM154 428h1v1h-1zM154 469h1v1h-1zM155 109h1v1h-1zM155 111h1v1h-1zM155 128h1v1h-1zM155 169h1v1h-1zM155 429h1v1h-1zM155 470h1v1h-1zM155 486h1v2h-1zM155 489h1v1h-1zM156 108h1v1h-1zM156 112h1v2h-1zM156 127h1v1h-1zM156 168h1v1h-1zM156 430h1v1h-1zM156 471h1v1h-1zM156 485h1v1h-1zM156 490h1v1h-1zM157 53h1v1h-1zM157 114h1v1h-1zM157 126h1v1h-1zM157 167h1v1h-1zM157 431h1v1h-1zM157 472h1v1h-1zM157 484h1v1h-1zM157 545h1v1h-1zM158 115h1v1h-1zM158 166h1v1h-1zM158 432h1v1h-1zM158 482h1v2h-1zM159 106h1v1h-1zM159 116h1v1h-1zM159 165h1v1h-1zM159 433h1v1h-1zM159 481h1v1h-1zM159 492h1v1h-1zM160 117h1v1h-1zM160 124h1v1h-1zM160 164h1v1h-1zM160 434h1v1h-1zM160 474h1v1h-1zM160 480h1v1h-1zM161 118h1v2h-1zM161 123h1v1h-1zM161 163h1v1h-1zM161 435h1v1h-1zM161 475h1v1h-1zM161 478h1v2h-1zM162 104h1v1h-1zM162 120h1v1h-1zM162 162h1v1h-1zM162 436h1v1h-1zM162 477h1v1h-1zM162 494h1v1h-1zM163 103h1v1h-1zM163 161h1v1h-1zM163 437h1v1h-1zM163 495h1v1h-1zM164 160h1v1h-1zM164 438h1v1h-1zM164 477h1v1h-1zM165 120h1v1h-1zM165 159h1v1h-1zM165 439h1v1h-1zM165 478h1v1h-1zM166 101h1v1h-1zM166 121h1v2h-1zM166 158h1v1h-1zM166 440h1v1h-1zM166 497h1v1h-1zM167 123h1v1h-1zM167 157h1v1h-1zM167 441h1v1h-1zM168 118h1v1h-1zM168 124h1v1h-1zM168 156h1v1h-1zM168 442h1v1h-1zM168 480h1v1h-1zM169 99h1v1h-1zM169 117h1v1h-1zM169 125h1v2h-1zM169 155h1v1h-1zM169 443h1v1h-1zM169 481h1v1h-1zM169 499h1v1h-1zM170 116h1v1h-1zM170 127h1v1h-1zM170 154h1v1h-1zM170 444h1v1h-1zM171 128h1v1h-1zM172 99h1v2h-1zM172 129h1v2h-1zM172 480h1v2h-1zM172 498h1v2h-1zM173 96h1v1h-1zM173 101h1v1h-1zM173 114h1v1h-1zM173 131h1v1h-1zM173 152h1v1h-1zM173 446h1v1h-1zM173 479h1v1h-1zM173 484h1v1h-1zM173 496h1v2h-1zM173 502h1v1h-1zM174 102h1v1h-1zM174 113h1v1h-1zM174 132h1v1h-1zM174 151h1v1h-1zM174 447h1v1h-1zM174 478h1v1h-1zM174 485h1v1h-1zM174 494h1v2h-1zM175 103h1v2h-1zM175 133h1v2h-1zM175 150h1v1h-1zM175 448h1v1h-1zM175 476h1v2h-1zM175 493h1v1h-1zM176 105h1v1h-1zM176 135h1v1h-1zM176 149h1v1h-1zM176 449h1v1h-1zM176 475h1v1h-1zM176 491h1v2h-1zM177 106h1v1h-1zM177 136h1v1h-1zM177 474h1v1h-1zM177 489h1v2h-1zM178 107h1v2h-1zM178 137h1v2h-1zM178 472h1v2h-1zM179 109h1v1h-1zM179 139h1v1h-1zM179 147h1v1h-1zM179 451h1v1h-1zM179 471h1v1h-1zM180 92h1v1h-1zM180 140h1v1h-1zM180 146h1v1h-1zM180 452h1v1h-1zM180 470h1v1h-1zM180 506h1v1h-1zM181 109h1v1h-1zM181 141h1v2h-1zM181 145h1v1h-1zM181 453h1v1h-1zM181 468h1v2h-1zM181 489h1v1h-1zM182 143h1v1h-1zM182 467h1v1h-1zM183 466h1v1h-1zM184 107h1v1h-1zM184 143h1v1h-1zM184 455h1v1h-1zM184 464h1v2h-1zM184 491h1v1h-1zM185 142h1v1h-1zM185 456h1v1h-1zM185 463h1v1h-1zM186 462h1v1h-1zM187 88h1v1h-1zM187 105h1v1h-1zM187 460h1v2h-1zM187 493h1v1h-1zM187 510h1v1h-1zM188 140h1v1h-1zM188 458h1v1h-1zM189 509h1v2h-1zM190 88h1v2h-1zM190 507h1v2h-1zM191 90h1v2h-1zM191 138h1v1h-1zM191 460h1v1h-1zM191 505h1v2h-1zM192 92h1v2h-1zM192 503h1v2h-1zM193 94h1v2h-1zM193 501h1v2h-1zM194 96h1v2h-1zM194 499h1v2h-1zM195 98h1v2h-1zM196 135h1v1h-1zM196 463h1v1h-1zM199 133h1v1h-1zM199 465h1v1h-1zM202 131h1v1h-1zM202 467h1v1h-1zM208 79h1v1h-1zM208 518h1v2h-1zM209 80h1v2h-1zM209 516h1v2h-1zM210 82h1v2h-1zM210 157h1v2h-1zM210 513h1v3h-1zM211 84h1v2h-1zM211 159h1v4h-1zM211 511h1v2h-1zM212 86h1v2h-1zM212 163h1v4h-1zM212 509h1v2h-1zM213 88h1v2h-1zM213 167h1v3h-1zM213 508h1v1h-1zM214 30h1v1h-1zM214 90h1v1h-1zM215 31h1v3h-1zM215 167h1v2h-1zM216 34h1v3h-1zM216 165h1v2h-1zM217 37h1v3h-1zM217 163h1v2h-1zM218 40h1v3h-1zM218 161h1v2h-1zM219 43h1v3h-1zM219 159h1v2h-1zM220 46h1v3h-1zM220 157h1v2h-1zM221 49h1v2h-1zM221 155h1v2h-1zM222 51h1v3h-1zM222 153h1v2h-1zM223 54h1v3h-1zM223 151h1v2h-1zM224 57h1v3h-1zM224 149h1v2h-1zM225 60h1v3h-1zM225 148h1v1h-1zM226 63h1v3h-1zM227 66h1v3h-1zM227 525h1v1h-1zM228 69h1v1h-1zM228 72h1v2h-1zM228 523h1v2h-1zM229 74h1v3h-1zM229 520h1v3h-1zM230 77h1v4h-1zM230 517h1v3h-1zM231 81h1v3h-1zM231 515h1v2h-1zM232 84h1v1h-1zM232 514h1v1h-1zM238 573h1v3h-1zM239 568h1v5h-1zM240 564h1v4h-1zM241 559h1v5h-1zM242 142h1v3h-1zM242 554h1v5h-1zM243 145h1v6h-1zM243 550h1v4h-1zM244 151h1v4h-1zM244 545h1v5h-1zM245 457h1v2h-1zM245 540h1v5h-1zM246 454h1v3h-1zM246 536h1v4h-1zM247 451h1v3h-1zM247 534h1v2h-1zM248 67h1v2h-1zM248 448h1v3h-1zM248 529h1v3h-1zM249 69h1v4h-1zM249 446h1v2h-1zM249 522h1v7h-1zM250 73h1v4h-1zM250 519h1v3h-1zM251 77h1v3h-1zM261 79h1v3h-1zM262 82h1v6h-1zM263 88h1v5h-1zM264 93h1v6h-1zM265 99h1v6h-1zM266 105h1v3h-1zM268 532h1v4h-1zM269 63h1v7h-1zM269 526h1v6h-1zM270 70h1v7h-1zM270 522h1v4h-1zM289 61h1v7h-1zM289 524h1v14h-1zM290 68h1v7h-1zM308 524h1v7h-1zM309 61h1v14h-1zM309 531h1v7h-1zM328 73h1v4h-1zM328 522h1v7h-1zM329 67h1v6h-1zM329 529h1v7h-1zM330 63h1v4h-1zM332 491h1v3h-1zM333 494h1v6h-1zM334 500h1v5h-1zM335 505h1v6h-1zM336 511h1v6h-1zM337 517h1v3h-1zM347 519h1v3h-1zM348 77h1v4h-1zM348 522h1v4h-1zM349 70h1v7h-1zM349 526h1v4h-1zM350 67h1v3h-1zM350 530h1v2h-1zM351 63h1v3h-1zM352 58h1v5h-1zM353 54h1v4h-1zM354 49h1v5h-1zM355 44h1v5h-1zM356 40h1v4h-1zM357 35h1v5h-1zM358 30h1v5h-1zM359 26h1v4h-1zM360 23h1v3h-1zM366 84h1v1h-1zM366 514h1v1h-1zM367 82h1v2h-1zM367 515h1v3h-1zM368 79h1v3h-1zM368 518h1v4h-1zM369 76h1v3h-1zM369 522h1v3h-1zM370 74h1v2h-1zM370 525h1v2h-1zM370 528h1v2h-1zM371 73h1v1h-1zM371 530h1v3h-1zM372 533h1v3h-1zM373 536h1v3h-1zM374 539h1v3h-1zM375 542h1v3h-1zM376 545h1v3h-1zM377 548h1v2h-1zM378 550h1v3h-1zM379 553h1v3h-1zM380 556h1v3h-1zM381 559h1v3h-1zM382 562h1v3h-1zM383 565h1v3h-1zM384 568h1v1h-1zM385 90h1v1h-1zM385 508h1v2h-1zM386 88h1v2h-1zM386 510h1v2h-1zM387 85h1v3h-1zM387 512h1v2h-1zM388 83h1v2h-1zM388 514h1v2h-1zM389 81h1v2h-1zM389 516h1v2h-1zM390 80h1v1h-1zM390 518h1v1h-1zM399 133h1v1h-1zM399 465h1v1h-1zM402 135h1v1h-1zM402 463h1v1h-1zM403 99h1v1h-1zM403 499h1v2h-1zM404 97h1v2h-1zM404 501h1v2h-1zM405 95h1v2h-1zM405 503h1v2h-1zM406 93h1v2h-1zM406 505h1v2h-1zM407 91h1v2h-1zM407 138h1v1h-1zM407 460h1v1h-1zM407 507h1v2h-1zM408 89h1v2h-1zM408 509h1v2h-1zM410 140h1v1h-1zM410 458h1v1h-1zM411 105h1v1h-1zM411 137h1v2h-1zM411 493h1v1h-1zM412 136h1v1h-1zM413 135h1v1h-1zM413 142h1v1h-1zM413 456h1v1h-1zM414 107h1v1h-1zM414 133h1v2h-1zM414 143h1v1h-1zM414 455h1v1h-1zM414 491h1v1h-1zM415 132h1v1h-1zM416 131h1v1h-1zM416 455h1v1h-1zM417 109h1v1h-1zM417 129h1v2h-1zM417 145h1v1h-1zM417 453h1v1h-1zM417 456h1v2h-1zM417 489h1v1h-1zM418 92h1v1h-1zM418 128h1v1h-1zM418 146h1v1h-1zM418 452h1v1h-1zM418 458h1v1h-1zM418 506h1v1h-1zM419 127h1v1h-1zM419 147h1v1h-1zM419 451h1v1h-1zM419 459h1v1h-1zM419 489h1v1h-1zM420 125h1v2h-1zM420 148h1v1h-1zM420 450h1v1h-1zM420 460h1v2h-1zM420 490h1v2h-1zM421 108h1v2h-1zM421 124h1v1h-1zM421 462h1v1h-1zM421 492h1v1h-1zM422 106h1v2h-1zM422 123h1v1h-1zM422 463h1v1h-1zM422 493h1v1h-1zM423 104h1v2h-1zM423 121h1v2h-1zM423 150h1v1h-1zM423 448h1v1h-1zM423 464h1v2h-1zM423 494h1v2h-1zM424 103h1v1h-1zM424 113h1v1h-1zM424 120h1v1h-1zM424 151h1v1h-1zM424 447h1v1h-1zM424 466h1v1h-1zM424 485h1v1h-1zM424 496h1v1h-1zM425 96h1v1h-1zM425 101h1v2h-1zM425 114h1v1h-1zM425 119h1v1h-1zM425 152h1v1h-1zM425 446h1v1h-1zM425 467h1v1h-1zM425 484h1v1h-1zM425 497h1v1h-1zM425 502h1v1h-1zM426 99h1v2h-1zM426 115h1v1h-1zM426 117h1v2h-1zM426 468h1v2h-1zM426 483h1v1h-1zM426 498h1v2h-1zM427 470h1v1h-1zM428 154h1v1h-1zM428 444h1v1h-1zM428 471h1v1h-1zM429 99h1v1h-1zM429 117h1v1h-1zM429 155h1v1h-1zM429 443h1v1h-1zM429 472h1v2h-1zM429 481h1v1h-1zM429 499h1v1h-1zM430 118h1v1h-1zM430 156h1v1h-1zM430 442h1v1h-1zM430 474h1v1h-1zM430 480h1v1h-1zM431 157h1v1h-1zM431 441h1v1h-1zM431 475h1v1h-1zM432 101h1v1h-1zM432 158h1v1h-1zM432 440h1v1h-1zM432 476h1v2h-1zM432 497h1v1h-1zM433 120h1v1h-1zM433 159h1v1h-1zM433 439h1v1h-1zM433 478h1v1h-1zM434 121h1v1h-1zM434 160h1v1h-1zM434 438h1v1h-1zM435 103h1v1h-1zM435 161h1v1h-1zM435 437h1v1h-1zM435 495h1v1h-1zM436 104h1v1h-1zM436 121h1v1h-1zM436 162h1v1h-1zM436 436h1v1h-1zM436 478h1v1h-1zM436 494h1v1h-1zM437 119h1v2h-1zM437 123h1v1h-1zM437 163h1v1h-1zM437 435h1v1h-1zM437 475h1v1h-1zM437 479h1v2h-1zM438 118h1v1h-1zM438 124h1v1h-1zM438 164h1v1h-1zM438 434h1v1h-1zM438 474h1v1h-1zM438 481h1v1h-1zM439 106h1v1h-1zM439 117h1v1h-1zM439 125h1v1h-1zM439 165h1v1h-1zM439 433h1v1h-1zM439 473h1v1h-1zM439 482h1v1h-1zM439 492h1v1h-1zM440 115h1v2h-1zM440 166h1v1h-1zM440 432h1v1h-1zM440 483h1v1h-1zM441 53h1v1h-1zM441 114h1v1h-1zM441 167h1v1h-1zM441 431h1v1h-1zM441 484h1v1h-1zM441 545h1v1h-1zM442 108h1v1h-1zM442 113h1v1h-1zM442 127h1v1h-1zM442 168h1v1h-1zM442 430h1v1h-1zM442 471h1v1h-1zM442 485h1v2h-1zM442 490h1v1h-1zM443 109h1v1h-1zM443 111h1v2h-1zM443 128h1v1h-1zM443 169h1v1h-1zM443 429h1v1h-1zM443 470h1v1h-1zM443 487h1v1h-1zM443 489h1v1h-1zM444 55h1v1h-1zM444 129h1v1h-1zM444 170h1v1h-1zM444 428h1v1h-1zM444 469h1v1h-1zM444 543h1v1h-1zM445 130h1v1h-1zM445 171h1v2h-1zM445 426h1v2h-1zM445 468h1v1h-1zM446 111h1v1h-1zM446 173h1v1h-1zM446 425h1v1h-1zM446 487h1v1h-1zM447 112h1v1h-1zM447 174h1v1h-1zM447 424h1v1h-1zM447 486h1v1h-1zM448 113h1v1h-1zM448 132h1v1h-1zM448 175h1v1h-1zM448 423h1v1h-1zM448 466h1v1h-1zM448 485h1v1h-1zM449 58h1v1h-1zM449 133h1v1h-1zM449 176h1v1h-1zM449 421h1v2h-1zM449 465h1v1h-1zM449 540h1v1h-1zM450 177h1v2h-1zM450 420h1v1h-1zM450 464h1v1h-1zM451 115h1v1h-1zM451 135h1v1h-1zM451 179h1v1h-1zM451 419h1v1h-1zM451 463h1v1h-1zM451 465h1v1h-1zM451 483h1v1h-1zM452 60h1v1h-1zM452 116h1v1h-1zM452 133h1v1h-1zM452 136h1v1h-1zM452 180h1v1h-1zM452 418h1v1h-1zM452 462h1v1h-1zM452 466h1v1h-1zM452 482h1v1h-1zM452 538h1v1h-1zM453 117h1v1h-1zM453 132h1v1h-1zM453 137h1v1h-1zM453 181h1v1h-1zM453 417h1v1h-1zM453 461h1v1h-1zM453 467h1v1h-1zM453 481h1v1h-1zM454 118h1v1h-1zM454 131h1v1h-1zM454 138h1v1h-1zM454 182h1v2h-1zM454 415h1v2h-1zM454 460h1v1h-1zM454 468h1v1h-1zM454 480h1v1h-1zM455 62h1v1h-1zM455 129h1v2h-1zM455 139h1v1h-1zM455 184h1v1h-1zM455 414h1v1h-1zM455 459h1v1h-1zM455 469h1v1h-1zM455 536h1v1h-1zM456 128h1v1h-1zM456 140h1v1h-1zM456 185h1v1h-1zM456 413h1v1h-1zM456 458h1v1h-1zM456 470h1v2h-1zM457 120h1v1h-1zM457 127h1v1h-1zM457 141h1v1h-1zM457 186h1v2h-1zM457 411h1v2h-1zM457 457h1v1h-1zM457 472h1v1h-1zM457 478h1v1h-1zM458 64h1v1h-1zM458 121h1v1h-1zM458 126h1v1h-1zM458 142h1v1h-1zM458 188h1v1h-1zM458 410h1v1h-1zM458 456h1v1h-1zM458 473h1v1h-1zM458 477h1v1h-1zM458 534h1v1h-1zM459 122h1v1h-1zM459 125h1v1h-1zM459 143h1v1h-1zM459 189h1v2h-1zM459 409h1v1h-1zM459 455h1v1h-1zM459 474h1v1h-1zM459 476h1v1h-1zM460 144h1v1h-1zM460 191h1v1h-1zM460 407h1v2h-1zM460 454h1v1h-1zM460 475h1v1h-1zM461 66h1v1h-1zM461 145h1v1h-1zM461 192h1v2h-1zM461 405h1v2h-1zM461 453h1v1h-1zM461 474h1v1h-1zM461 532h1v1h-1zM462 122h1v1h-1zM462 146h1v1h-1zM462 194h1v2h-1zM462 403h1v2h-1zM462 452h1v1h-1zM463 121h1v1h-1zM463 147h1v1h-1zM463 196h1v1h-1zM463 402h1v1h-1zM463 410h1v1h-1zM464 120h1v1h-1zM464 126h1v1h-1zM464 148h1v1h-1zM464 197h1v2h-1zM464 400h1v2h-1zM464 411h1v1h-1zM464 450h1v1h-1zM464 472h1v1h-1zM465 119h1v1h-1zM465 127h1v1h-1zM465 147h1v1h-1zM465 149h1v1h-1zM465 199h1v1h-1zM465 399h1v1h-1zM465 449h1v1h-1zM465 452h1v1h-1zM465 471h1v1h-1zM466 69h1v1h-1zM466 117h1v2h-1zM466 128h1v1h-1zM466 146h1v1h-1zM466 150h1v1h-1zM466 200h1v2h-1zM466 397h1v2h-1zM466 448h1v1h-1zM466 453h1v1h-1zM466 470h1v1h-1zM466 529h1v1h-1zM467 70h1v1h-1zM467 116h1v1h-1zM467 129h1v1h-1zM467 145h1v1h-1zM467 151h1v1h-1zM467 202h1v1h-1zM467 395h1v2h-1zM467 413h1v1h-1zM467 446h1v2h-1zM467 454h1v1h-1zM467 469h1v1h-1zM467 528h1v1h-1zM468 115h1v1h-1zM468 130h1v1h-1zM468 144h1v1h-1zM468 152h1v2h-1zM468 203h1v2h-1zM468 393h1v2h-1zM468 445h1v1h-1zM468 455h1v1h-1zM468 468h1v1h-1zM469 114h1v1h-1zM469 131h1v1h-1zM469 143h1v1h-1zM469 154h1v1h-1zM469 205h1v2h-1zM469 391h1v2h-1zM469 444h1v1h-1zM469 467h1v1h-1zM470 72h1v1h-1zM470 113h1v1h-1zM470 132h1v1h-1zM470 155h1v1h-1zM470 207h1v2h-1zM470 389h1v2h-1zM470 415h1v1h-1zM470 443h1v1h-1zM470 466h1v1h-1zM470 526h1v1h-1zM471 73h1v1h-1zM471 112h1v1h-1zM471 133h1v1h-1zM471 156h1v1h-1zM471 209h1v2h-1zM471 387h1v2h-1zM471 416h1v1h-1zM471 442h1v1h-1zM471 457h1v1h-1zM471 465h1v1h-1zM471 525h1v1h-1zM472 111h1v1h-1zM472 134h1v1h-1zM472 141h1v1h-1zM472 157h1v1h-1zM472 211h1v2h-1zM472 385h1v2h-1zM472 440h1v2h-1zM472 458h1v1h-1zM472 464h1v1h-1zM473 110h1v1h-1zM473 135h1v1h-1zM473 140h1v1h-1zM473 158h1v2h-1zM473 213h1v2h-1zM473 383h1v2h-1zM473 439h1v1h-1zM473 459h1v1h-1zM473 462h1v2h-1zM474 75h1v1h-1zM474 109h1v1h-1zM474 136h1v2h-1zM474 139h1v1h-1zM474 160h1v1h-1zM474 215h1v2h-1zM474 381h1v2h-1zM474 418h1v1h-1zM474 438h1v1h-1zM474 523h1v1h-1zM475 76h1v1h-1zM475 107h1v2h-1zM475 138h1v1h-1zM475 161h1v1h-1zM475 217h1v2h-1zM475 379h1v2h-1zM475 437h1v1h-1zM475 522h1v1h-1zM476 77h1v1h-1zM476 106h1v1h-1zM476 139h1v1h-1zM476 162h1v1h-1zM476 219h1v3h-1zM476 377h1v2h-1zM476 435h1v1h-1zM476 459h1v1h-1zM476 462h1v1h-1zM476 521h1v1h-1zM477 78h1v1h-1zM477 105h1v1h-1zM477 140h1v1h-1zM477 164h1v1h-1zM477 222h1v2h-1zM477 375h1v2h-1zM477 420h1v1h-1zM477 434h1v1h-1zM477 458h1v1h-1zM477 463h1v1h-1zM477 520h1v1h-1zM478 79h1v1h-1zM478 104h1v1h-1zM478 141h1v1h-1zM478 162h1v1h-1zM478 165h1v1h-1zM478 224h1v2h-1zM478 373h1v2h-1zM478 433h1v1h-1zM478 457h1v1h-1zM478 464h1v1h-1zM478 519h1v1h-1zM479 80h1v1h-1zM479 103h1v1h-1zM479 142h1v2h-1zM479 166h1v2h-1zM479 226h1v3h-1zM479 370h1v3h-1zM479 431h1v2h-1zM479 455h1v2h-1zM479 465h1v1h-1zM479 518h1v1h-1zM480 81h1v1h-1zM480 102h1v1h-1zM480 144h1v1h-1zM480 168h1v1h-1zM480 229h1v3h-1zM480 367h1v3h-1zM480 422h1v1h-1zM480 430h1v1h-1zM480 438h1v1h-1zM480 454h1v1h-1zM480 517h1v1h-1zM481 82h1v1h-1zM481 101h1v1h-1zM481 145h1v1h-1zM481 160h1v1h-1zM481 169h1v1h-1zM481 232h1v3h-1zM481 364h1v3h-1zM481 423h1v1h-1zM481 429h1v1h-1zM481 439h1v1h-1zM481 453h1v1h-1zM481 516h1v1h-1zM482 83h1v1h-1zM482 100h1v1h-1zM482 146h1v1h-1zM482 159h1v1h-1zM482 170h1v1h-1zM482 235h1v3h-1zM482 361h1v3h-1zM482 427h1v2h-1zM482 452h1v1h-1zM482 467h1v1h-1zM482 515h1v1h-1zM483 99h1v1h-1zM483 147h1v1h-1zM483 158h1v1h-1zM483 171h1v2h-1zM483 238h1v3h-1zM483 360h1v1h-1zM483 426h1v1h-1zM483 451h1v1h-1zM483 468h1v1h-1zM484 98h1v1h-1zM484 148h1v1h-1zM484 157h1v1h-1zM484 173h1v1h-1zM484 241h1v4h-1zM484 354h1v4h-1zM484 425h1v1h-1zM484 441h1v1h-1zM484 449h1v2h-1zM484 469h1v1h-1zM485 85h1v1h-1zM485 96h1v2h-1zM485 149h1v2h-1zM485 174h1v1h-1zM485 245h1v3h-1zM485 351h1v3h-1zM485 424h1v1h-1zM485 442h1v1h-1zM485 448h1v1h-1zM485 470h1v1h-1zM485 513h1v1h-1zM486 86h1v1h-1zM486 95h1v1h-1zM486 151h1v1h-1zM486 175h1v2h-1zM486 248h1v3h-1zM486 348h1v3h-1zM486 422h1v2h-1zM486 447h1v1h-1zM486 471h1v1h-1zM486 512h1v1h-1zM487 94h1v1h-1zM487 152h1v1h-1zM487 155h1v1h-1zM487 177h1v2h-1zM487 251h1v3h-1zM487 345h1v3h-1zM487 421h1v1h-1zM487 446h1v1h-1zM487 472h1v1h-1zM488 93h1v1h-1zM488 153h1v2h-1zM488 180h1v1h-1zM488 254h1v4h-1zM488 341h1v4h-1zM488 418h1v2h-1zM488 444h1v2h-1zM488 473h1v1h-1zM489 88h1v1h-1zM489 92h1v1h-1zM489 155h1v1h-1zM489 181h1v1h-1zM489 258h1v5h-1zM489 336h1v5h-1zM489 417h1v1h-1zM489 443h1v1h-1zM489 474h1v1h-1zM489 510h1v1h-1zM490 89h1v1h-1zM490 91h1v1h-1zM490 156h1v1h-1zM490 182h1v2h-1zM490 263h1v6h-1zM490 329h1v7h-1zM490 415h1v2h-1zM490 442h1v1h-1zM490 475h1v1h-1zM490 509h1v1h-1zM491 90h1v1h-1zM491 157h1v2h-1zM491 184h1v1h-1zM491 269h1v7h-1zM491 323h1v6h-1zM491 414h1v1h-1zM491 440h1v2h-1zM491 508h1v1h-1zM492 91h1v1h-1zM492 159h1v1h-1zM492 177h1v1h-1zM492 185h1v2h-1zM492 276h1v7h-1zM492 316h1v7h-1zM492 412h1v2h-1zM492 439h1v1h-1zM492 507h1v1h-1zM493 92h1v1h-1zM493 160h1v2h-1zM493 176h1v1h-1zM493 187h1v1h-1zM493 283h1v16h-1zM493 300h1v16h-1zM493 411h1v1h-1zM493 423h1v1h-1zM493 437h1v2h-1zM493 477h1v1h-1zM493 506h1v1h-1zM494 93h1v1h-1zM494 162h1v1h-1zM494 188h1v2h-1zM494 409h1v2h-1zM494 436h1v1h-1zM494 478h1v1h-1zM494 505h1v1h-1zM495 94h1v1h-1zM495 163h1v1h-1zM495 190h1v2h-1zM495 407h1v2h-1zM495 435h1v1h-1zM495 479h1v1h-1zM495 504h1v1h-1zM496 95h1v1h-1zM496 164h1v2h-1zM496 174h1v1h-1zM496 192h1v2h-1zM496 405h1v2h-1zM496 433h1v2h-1zM496 480h1v1h-1zM496 503h1v1h-1zM497 96h1v1h-1zM497 166h1v1h-1zM497 173h1v1h-1zM497 194h1v2h-1zM497 404h1v1h-1zM497 432h1v1h-1zM497 481h1v1h-1zM497 502h1v1h-1zM498 97h1v1h-1zM498 167h1v2h-1zM498 196h1v2h-1zM498 401h1v2h-1zM498 430h1v2h-1zM498 482h1v1h-1zM498 501h1v1h-1zM499 98h1v1h-1zM499 169h1v1h-1zM499 198h1v2h-1zM499 399h1v2h-1zM499 429h1v1h-1zM499 483h1v1h-1zM499 500h1v1h-1zM500 99h1v1h-1zM500 170h1v1h-1zM500 200h1v2h-1zM500 397h1v2h-1zM500 428h1v1h-1zM500 484h1v1h-1zM500 499h1v1h-1zM501 100h1v1h-1zM501 172h1v1h-1zM501 202h1v2h-1zM501 395h1v2h-1zM501 426h1v1h-1zM501 498h1v1h-1zM502 101h1v1h-1zM502 173h1v1h-1zM502 204h1v2h-1zM502 393h1v2h-1zM502 425h1v1h-1zM502 497h1v1h-1zM503 102h1v1h-1zM503 174h1v2h-1zM503 206h1v2h-1zM503 391h1v2h-1zM503 423h1v2h-1zM503 486h1v1h-1zM503 496h1v1h-1zM504 103h1v1h-1zM504 176h1v2h-1zM504 208h1v2h-1zM504 389h1v2h-1zM504 421h1v2h-1zM504 487h1v1h-1zM504 495h1v1h-1zM505 104h1v1h-1zM505 178h1v2h-1zM505 210h1v2h-1zM505 387h1v2h-1zM505 419h1v2h-1zM505 488h1v1h-1zM505 494h1v1h-1zM506 105h1v1h-1zM506 180h1v1h-1zM506 212h1v2h-1zM506 386h1v1h-1zM506 418h1v1h-1zM506 489h1v1h-1zM506 493h1v1h-1zM507 106h1v1h-1zM507 181h1v2h-1zM507 214h1v3h-1zM507 381h1v4h-1zM507 416h1v2h-1zM507 490h1v1h-1zM507 492h1v1h-1zM508 107h1v1h-1zM508 183h1v2h-1zM508 217h1v4h-1zM508 377h1v4h-1zM508 414h1v2h-1zM508 491h1v1h-1zM509 108h1v1h-1zM509 185h1v2h-1zM509 221h1v4h-1zM509 374h1v3h-1zM509 412h1v2h-1zM509 490h1v1h-1zM510 109h1v1h-1zM510 187h1v1h-1zM510 225h1v2h-1zM510 372h1v2h-1zM510 410h1v2h-1zM510 489h1v1h-1zM511 110h1v1h-1zM511 188h1v2h-1zM511 227h1v2h-1zM511 370h1v2h-1zM511 408h1v1h-1zM511 487h1v2h-1zM512 111h1v2h-1zM512 190h1v2h-1zM512 229h1v3h-1zM512 368h1v2h-1zM512 406h1v2h-1zM512 486h1v1h-1zM513 113h1v1h-1zM513 192h1v2h-1zM513 233h1v3h-1zM513 362h1v4h-1zM513 404h1v2h-1zM513 485h1v1h-1zM514 114h1v1h-1zM514 194h1v3h-1zM514 236h1v4h-1zM514 359h1v3h-1zM514 402h1v2h-1zM514 483h1v2h-1zM515 115h1v2h-1zM515 197h1v2h-1zM515 240h1v4h-1zM515 355h1v4h-1zM515 400h1v2h-1zM515 482h1v1h-1zM516 117h1v1h-1zM516 199h1v2h-1zM516 244h1v3h-1zM516 351h1v4h-1zM516 398h1v2h-1zM516 481h1v1h-1zM517 118h1v1h-1zM517 201h1v2h-1zM517 247h1v4h-1zM517 347h1v1h-1zM517 349h1v2h-1zM517 395h1v3h-1zM517 480h1v1h-1zM518 119h1v1h-1zM518 203h1v2h-1zM518 252h1v3h-1zM518 343h1v4h-1zM518 393h1v2h-1zM518 479h1v1h-1zM519 120h1v1h-1zM519 205h1v2h-1zM519 255h1v4h-1zM519 339h1v4h-1zM519 391h1v2h-1zM519 478h1v1h-1zM520 121h1v1h-1zM520 207h1v1h-1zM520 259h1v6h-1zM520 334h1v5h-1zM520 389h1v1h-1zM520 477h1v1h-1zM521 122h1v1h-1zM521 209h1v3h-1zM521 265h1v5h-1zM521 271h1v1h-1zM521 326h1v2h-1zM521 329h1v5h-1zM521 387h1v2h-1zM521 476h1v1h-1zM522 123h1v1h-1zM522 212h1v2h-1zM522 272h1v16h-1zM522 310h1v16h-1zM522 384h1v3h-1zM522 475h1v1h-1zM523 124h1v1h-1zM523 214h1v3h-1zM523 288h1v2h-1zM523 291h1v8h-1zM523 300h1v9h-1zM523 382h1v2h-1zM523 474h1v1h-1zM524 125h1v1h-1zM524 217h1v3h-1zM524 379h1v3h-1zM524 472h1v2h-1zM525 126h1v2h-1zM525 220h1v4h-1zM525 375h1v4h-1zM525 471h1v1h-1zM526 128h1v1h-1zM526 224h1v3h-1zM526 372h1v3h-1zM526 470h1v1h-1zM527 129h1v1h-1zM527 227h1v1h-1zM527 369h1v2h-1zM527 468h1v2h-1zM528 130h1v2h-1zM528 229h1v3h-1zM528 367h1v2h-1zM528 467h1v1h-1zM529 132h1v1h-1zM529 232h1v4h-1zM529 363h1v4h-1zM529 466h1v1h-1zM530 133h1v2h-1zM530 236h1v4h-1zM530 359h1v4h-1zM530 464h1v2h-1zM531 135h1v1h-1zM531 240h1v4h-1zM531 354h1v5h-1zM531 462h1v2h-1zM532 136h1v2h-1zM532 244h1v4h-1zM532 352h1v2h-1zM532 461h1v1h-1zM533 138h1v2h-1zM533 249h1v5h-1zM533 344h1v6h-1zM533 459h1v2h-1zM534 140h1v1h-1zM534 254h1v6h-1zM534 338h1v6h-1zM534 458h1v1h-1zM535 141h1v2h-1zM535 260h1v4h-1zM535 334h1v4h-1zM535 456h1v2h-1zM536 143h1v1h-1zM536 264h1v5h-1zM536 328h1v2h-1zM536 331h1v3h-1zM536 455h1v1h-1zM537 144h1v2h-1zM537 270h1v17h-1zM537 311h1v17h-1zM537 453h1v2h-1zM538 146h1v1h-1zM538 287h1v2h-1zM538 290h1v19h-1zM538 310h1v1h-1zM538 452h1v1h-1zM539 147h1v2h-1zM539 450h1v2h-1zM540 149h1v1h-1zM540 449h1v1h-1zM541 150h1v2h-1zM541 447h1v2h-1zM542 152h1v1h-1zM542 445h1v2h-1zM543 153h1v2h-1zM543 444h1v1h-1zM544 155h1v2h-1zM544 442h1v2h-1zM545 157h1v1h-1zM545 441h1v1h-1zM546 158h1v2h-1zM546 439h1v2h-1zM547 160h1v2h-1zM547 437h1v2h-1zM548 162h1v2h-1zM548 435h1v2h-1zM549 164h1v2h-1zM549 433h1v2h-1zM550 166h1v2h-1zM550 431h1v2h-1zM551 168h1v2h-1zM551 429h1v2h-1zM552 170h1v2h-1zM552 427h1v2h-1zM553 172h1v2h-1zM553 425h1v2h-1zM554 174h1v3h-1zM554 422h1v3h-1zM555 177h1v2h-1zM555 420h1v2h-1zM556 179h1v2h-1zM556 418h1v2h-1zM557 181h1v2h-1zM557 416h1v2h-1zM558 183h1v3h-1zM558 413h1v3h-1zM559 186h1v2h-1zM559 411h1v2h-1zM560 188h1v2h-1zM560 409h1v2h-1zM561 190h1v2h-1zM561 407h1v2h-1zM562 192h1v3h-1zM562 404h1v3h-1zM563 195h1v2h-1zM563 402h1v2h-1zM564 197h1v2h-1zM564 400h1v2h-1zM565 199h1v2h-1zM565 398h1v2h-1zM566 201h1v3h-1zM566 395h1v3h-1zM567 204h1v3h-1zM567 391h1v4h-1zM568 207h1v4h-1zM568 388h1v3h-1zM569 211h1v3h-1zM569 385h1v3h-1zM570 215h1v2h-1zM570 382h1v3h-1zM571 217h1v3h-1zM571 379h1v3h-1zM572 220h1v3h-1zM572 376h1v3h-1zM573 223h1v3h-1zM573 372h1v4h-1zM574 226h1v4h-1zM574 369h1v3h-1zM575 230h1v4h-1zM575 365h1v4h-1zM576 234h1v4h-1zM576 361h1v4h-1zM577 238h1v5h-1zM577 356h1v5h-1zM578 243h1v5h-1zM578 351h1v5h-1zM579 248h1v7h-1zM579 343h1v8h-1zM580 255h1v10h-1zM580 333h1v10h-1zM581 265h1v10h-1zM581 323h1v10h-1zM582 275h1v10h-1zM582 313h1v10h-1zM583 285h1v28h-1z"/>
<path fill="#0000ff" d="M165 82h3v1h-3zM163 86h2v1h-2zM219 130h3v1h-3zM219 134h3v1h-3zM216 137h2v1h-2zM223 137h2v1h-2zM218 138h5v1h-5zM747 138h3v1h-3zM216 142h9v1h-9zM747 144h3v1h-3zM749 178h3v1h-3zM750 216h3v1h-3zM751 217h2v1h-2zM746 246h3v1h-3zM749 247h2v1h-2zM749 253h2v1h-2zM746 254h3v1h-3zM559 281h5v1h-5zM556 282h3v1h-3zM565 283h3v1h-3zM555 287h3v1h-3zM565 289h3v1h-3zM156 293h14v1h-14zM555 293h3v1h-3zM156 294h43v1h-43zM564 294h3v1h-3zM112 295h3v1h-3zM117 295h5v1h-5zM124 295h3v1h-3zM171 295h56v1h-56zM559 295h5v1h-5zM203 296h53v1h-53zM235 297h50v1h-50zM267 298h47v1h-47zM299 299h44v1h-44zM115 300h2v1h-2zM122 300h2v1h-2zM331 300h40v1h-40zM117 301h5v1h-5zM363 301h37v1h-37zM395 302h35v1h-35zM427 303h17v1h-17zM115 305h9v1h-9zM744 317h2v1h-2zM747 317h3v1h-3zM751 317h2v1h-2zM747 320h3v1h-3zM746 322h5v1h-5zM747 330h3v1h-3zM746 332h5v1h-5zM238 461h5v1h-5zM243 462h2v1h-2zM243 476h2v1h-2zM238 477h5v1h-5zM170 531h17v1h-17zM113 293h1v2h-1zM113 296h1v2h-1zM114 298h1v2h-1zM119 293h1v2h-1zM119 296h1v5h-1zM119 302h1v3h-1zM119 306h1v4h-1zM124 298h1v2h-1zM125 293h1v2h-1zM125 296h1v2h-1zM151 70h1v1h-1zM152 71h1v1h-1zM153 72h1v13h-1zM154 71h1v1h-1zM155 70h1v1h-1zM156 71h1v1h-1zM157 72h1v13h-1zM158 71h1v1h-1zM159 70h1v1h-1zM160 71h1v1h-1zM161 72h1v13h-1zM161 278h1v1h-1zM162 85h1v1h-1zM165 85h1v1h-1zM165 279h1v1h-1zM166 81h1v1h-1zM166 83h1v2h-1zM169 279h1v1h-1zM170 523h1v1h-1zM170 539h1v1h-1zM171 524h1v1h-1zM171 538h1v1h-1zM172 525h1v1h-1zM172 537h1v1h-1zM173 279h1v1h-1zM173 526h1v2h-1zM173 535h1v2h-1zM174 528h1v3h-1zM174 532h1v3h-1zM177 280h1v1h-1zM181 280h1v1h-1zM182 528h1v3h-1zM182 532h1v3h-1zM183 526h1v2h-1zM183 535h1v2h-1zM184 525h1v1h-1zM184 537h1v1h-1zM185 280h1v1h-1zM185 524h1v1h-1zM185 538h1v1h-1zM186 523h1v1h-1zM186 539h1v1h-1zM189 281h1v1h-1zM193 281h1v1h-1zM197 281h1v1h-1zM201 282h1v1h-1zM205 282h1v1h-1zM209 283h1v1h-1zM213 283h1v1h-1zM214 130h1v5h-1zM215 135h1v2h-1zM217 283h1v1h-1zM218 131h1v3h-1zM219 173h1v1h-1zM220 139h1v3h-1zM220 143h1v4h-1zM221 284h1v1h-1zM222 131h1v3h-1zM225 135h1v2h-1zM225 284h1v1h-1zM226 130h1v5h-1zM229 284h1v1h-1zM233 285h1v1h-1zM236 463h1v1h-1zM236 475h1v1h-1zM237 285h1v1h-1zM237 462h1v1h-1zM237 464h1v1h-1zM237 474h1v1h-1zM237 476h1v1h-1zM238 465h1v1h-1zM238 473h1v1h-1zM239 466h1v1h-1zM239 471h1v2h-1zM240 467h1v4h-1zM241 285h1v1h-1zM245 286h1v1h-1zM245 463h1v1h-1zM245 475h1v1h-1zM246 464h1v1h-1zM246 473h1v2h-1zM247 465h1v2h-1zM247 472h1v1h-1zM248 467h1v5h-1zM249 286h1v1h-1zM251 441h1v1h-1zM253 286h1v1h-1zM257 287h1v1h-1zM261 287h1v1h-1zM265 287h1v1h-1zM269 288h1v1h-1zM273 288h1v1h-1zM277 288h1v1h-1zM281 289h1v1h-1zM285 289h1v1h-1zM289 290h1v1h-1zM293 290h1v1h-1zM297 290h1v1h-1zM301 291h1v1h-1zM305 291h1v1h-1zM309 291h1v1h-1zM313 292h1v1h-1zM317 292h1v1h-1zM321 292h1v1h-1zM325 293h1v1h-1zM329 293h1v1h-1zM333 293h1v1h-1zM337 294h1v1h-1zM341 294h1v1h-1zM345 294h1v1h-1zM349 295h1v1h-1zM353 295h1v1h-1zM357 295h1v1h-1zM361 296h1v1h-1zM365 296h1v1h-1zM369 297h1v1h-1zM373 297h1v1h-1zM377 297h1v1h-1zM381 298h1v1h-1zM385 298h1v1h-1zM389 298h1v1h-1zM393 299h1v1h-1zM397 299h1v1h-1zM401 299h1v1h-1zM405 300h1v1h-1zM409 300h1v1h-1zM413 300h1v1h-1zM417 301h1v1h-1zM421 301h1v1h-1zM425 301h1v1h-1zM433 302h1v1h-1zM437 302h1v1h-1zM553 285h1v1h-1zM553 289h1v3h-1zM554 284h1v1h-1zM554 288h1v1h-1zM554 292h1v1h-1zM555 283h1v1h-1zM558 288h1v1h-1zM558 292h1v1h-1zM558 294h1v1h-1zM559 289h1v3h-1zM563 285h1v3h-1zM564 282h1v1h-1zM564 284h1v1h-1zM564 288h1v1h-1zM567 293h1v1h-1zM568 284h1v1h-1zM568 288h1v1h-1zM568 292h1v1h-1zM569 285h1v3h-1zM569 291h1v1h-1zM744 176h1v1h-1zM744 224h1v1h-1zM745 136h1v1h-1zM745 140h1v3h-1zM745 177h1v7h-1zM745 219h1v1h-1zM745 223h1v1h-1zM745 247h1v1h-1zM745 253h1v1h-1zM745 316h1v1h-1zM745 318h1v1h-1zM745 326h1v3h-1zM746 137h1v1h-1zM746 139h1v1h-1zM746 143h1v1h-1zM746 176h1v1h-1zM746 220h1v1h-1zM746 222h1v1h-1zM746 248h1v1h-1zM746 252h1v1h-1zM746 319h1v1h-1zM746 329h1v1h-1zM747 177h1v7h-1zM747 221h1v1h-1zM747 249h1v3h-1zM747 327h1v1h-1zM748 176h1v1h-1zM748 220h1v1h-1zM748 222h1v1h-1zM748 316h1v1h-1zM748 318h1v2h-1zM748 321h1v1h-1zM748 323h1v2h-1zM748 326h1v1h-1zM748 328h1v1h-1zM748 331h1v1h-1zM748 333h1v2h-1zM749 177h1v1h-1zM749 179h1v4h-1zM749 184h1v1h-1zM749 219h1v1h-1zM749 223h1v1h-1zM749 327h1v1h-1zM750 137h1v1h-1zM750 139h1v1h-1zM750 143h1v1h-1zM750 183h1v1h-1zM750 218h1v1h-1zM750 248h1v1h-1zM750 252h1v1h-1zM750 319h1v1h-1zM750 329h1v1h-1zM751 136h1v1h-1zM751 140h1v3h-1zM751 177h1v1h-1zM751 179h1v4h-1zM751 184h1v1h-1zM751 249h1v3h-1zM751 316h1v1h-1zM751 318h1v1h-1zM751 326h1v3h-1zM752 218h1v1h-1z"/>
<path fill="#ff0000" d="M750 106h2v1h-2zM744 107h2v1h-2zM748 107h2v1h-2zM750 109h2v1h-2zM240 122h6v1h-6zM244 123h2v1h-2zM232 128h5v1h-5zM237 129h2v1h-2zM232 138h5v1h-5zM746 147h6v1h-6zM186 150h5v1h-5zM184 151h2v1h-2zM191 151h2v1h-2zM518 151h5v1h-5zM746 153h6v1h-6zM184 165h2v1h-2zM191 165h2v1h-2zM186 166h5v1h-5zM71 170h5v1h-5zM74 171h2v1h-2zM747 188h3v1h-3zM744 191h4v1h-4zM749 191h4v1h-4zM744 193h9v1h-9zM747 236h3v1h-3zM745 237h2v1h-2zM750 237h2v1h-2zM745 243h2v1h-2zM750 243h2v1h-2zM747 244h3v1h-3zM750 276h3v1h-3zM751 277h2v1h-2zM746 279h2v1h-2zM746 284h2v1h-2zM745 287h2v1h-2zM745 293h8v1h-8zM474 299h2v1h-2zM473 311h15v1h-15zM304 553h3v1h-3zM314 553h3v1h-3zM59 186h1v1h-1zM60 185h1v1h-1zM61 176h1v1h-1zM61 184h1v1h-1zM62 177h1v1h-1zM62 183h1v1h-1zM63 178h1v1h-1zM63 182h1v1h-1zM64 179h1v1h-1zM64 181h1v1h-1zM65 180h1v1h-1zM66 179h1v1h-1zM66 181h1v1h-1zM67 178h1v1h-1zM67 182h1v1h-1zM68 177h1v1h-1zM68 183h1v1h-1zM69 176h1v1h-1zM69 184h1v1h-1zM70 175h1v1h-1zM71 174h1v1h-1zM72 173h1v1h-1zM73 172h1v1h-1zM75 172h1v3h-1zM149 299h1v1h-1zM180 156h1v5h-1zM181 154h1v2h-1zM181 161h1v2h-1zM182 153h1v1h-1zM182 163h1v1h-1zM183 152h1v1h-1zM183 164h1v1h-1zM187 386h1v4h-1zM188 158h1v1h-1zM188 378h1v8h-1zM189 370h1v8h-1zM190 362h1v8h-1zM191 354h1v8h-1zM192 346h1v8h-1zM193 152h1v1h-1zM193 164h1v1h-1zM193 338h1v8h-1zM194 153h1v1h-1zM194 163h1v1h-1zM194 330h1v8h-1zM195 154h1v2h-1zM195 161h1v2h-1zM195 322h1v8h-1zM196 156h1v5h-1zM196 315h1v7h-1zM197 307h1v8h-1zM198 299h1v8h-1zM199 291h1v4h-1zM199 296h1v3h-1zM200 283h1v8h-1zM201 275h1v7h-1zM202 267h1v8h-1zM203 259h1v8h-1zM204 252h1v7h-1zM205 244h1v8h-1zM206 236h1v8h-1zM207 228h1v8h-1zM208 220h1v8h-1zM209 215h1v5h-1zM210 204h1v7h-1zM211 196h1v1h-1zM211 198h1v6h-1zM212 188h1v7h-1zM213 185h1v1h-1zM213 187h1v1h-1zM215 176h1v1h-1zM229 131h1v5h-1zM230 130h1v1h-1zM230 136h1v1h-1zM231 129h1v1h-1zM231 137h1v1h-1zM237 137h1v1h-1zM238 130h1v1h-1zM238 136h1v1h-1zM239 128h1v1h-1zM239 131h1v5h-1zM240 127h1v1h-1zM241 126h1v1h-1zM242 125h1v1h-1zM243 124h1v1h-1zM245 124h1v5h-1zM246 159h1v1h-1zM302 555h1v3h-1zM303 554h1v1h-1zM303 558h1v1h-1zM304 559h1v1h-1zM307 554h1v1h-1zM308 555h1v3h-1zM309 558h1v4h-1zM310 562h1v8h-1zM311 558h1v4h-1zM312 555h1v3h-1zM313 554h1v1h-1zM316 559h1v1h-1zM317 554h1v1h-1zM317 558h1v1h-1zM318 555h1v3h-1zM449 304h1v1h-1zM473 310h1v1h-1zM474 308h1v2h-1zM475 306h1v2h-1zM476 300h1v1h-1zM476 304h1v2h-1zM477 301h1v3h-1zM483 299h1v12h-1zM483 312h1v2h-1zM484 298h1v1h-1zM485 297h1v1h-1zM512 163h1v1h-1zM513 164h1v1h-1zM514 155h1v5h-1zM514 165h1v1h-1zM515 154h1v1h-1zM515 160h1v1h-1zM515 164h1v1h-1zM516 153h1v1h-1zM516 161h1v3h-1zM517 152h1v1h-1zM523 152h1v1h-1zM524 153h1v1h-1zM524 161h1v3h-1zM525 154h1v1h-1zM525 160h1v1h-1zM525 164h1v1h-1zM526 155h1v5h-1zM526 165h1v1h-1zM527 166h1v1h-1zM528 167h1v1h-1zM744 239h1v3h-1zM744 281h1v2h-1zM745 106h1v1h-1zM745 108h1v3h-1zM745 146h1v1h-1zM745 154h1v1h-1zM745 238h1v1h-1zM745 242h1v1h-1zM745 280h1v1h-1zM745 283h1v1h-1zM745 292h1v1h-1zM746 111h1v3h-1zM746 189h1v2h-1zM746 290h1v2h-1zM747 108h1v3h-1zM747 148h1v5h-1zM747 288h1v2h-1zM748 106h1v1h-1zM748 240h1v1h-1zM748 280h1v1h-1zM748 283h1v1h-1zM749 108h1v1h-1zM749 279h1v1h-1zM749 281h1v2h-1zM750 148h1v5h-1zM750 189h1v2h-1zM750 278h1v1h-1zM750 287h1v6h-1zM750 294h1v1h-1zM751 110h1v1h-1zM751 114h1v1h-1zM751 238h1v1h-1zM751 242h1v1h-1zM751 286h1v1h-1zM752 107h1v2h-1zM752 111h1v3h-1zM752 146h1v1h-1zM752 154h1v1h-1zM752 239h1v3h-1zM752 278h1v1h-1z"/>
<path fill="#ffff00" d="M425 62h2v1h-2zM422 64h2v1h-2zM744 120h9v1h-9zM746 157h6v1h-6zM746 163h6v1h-6zM221 178h2v1h-2zM220 179h2v1h-2zM218 180h2v1h-2zM750 204h2v1h-2zM114 277h9v1h-9zM122 281h3v1h-3zM118 283h3v1h-3zM745 297h5v1h-5zM749 299h2v1h-2zM747 300h2v1h-2zM41 302h3v1h-3zM30 303h2v1h-2zM41 308h3v1h-3zM435 515h2v1h-2zM442 515h2v1h-2zM437 516h5v1h-5zM435 517h2v1h-2zM442 517h2v1h-2zM435 527h2v1h-2zM442 527h2v1h-2zM437 528h5v1h-5zM29 304h1v1h-1zM31 302h1v1h-1zM31 304h1v7h-1zM32 311h1v1h-1zM33 312h1v5h-1zM34 311h1v1h-1zM35 306h1v5h-1zM36 305h1v1h-1zM37 302h1v3h-1zM38 305h1v1h-1zM39 304h1v1h-1zM39 306h1v1h-1zM40 303h1v1h-1zM40 307h1v1h-1zM42 309h1v1h-1zM43 310h1v1h-1zM43 318h1v1h-1zM44 303h1v1h-1zM44 307h1v1h-1zM44 311h1v1h-1zM44 317h1v1h-1zM45 304h1v3h-1zM45 312h1v5h-1zM118 275h1v2h-1zM118 278h1v5h-1zM118 284h1v6h-1zM121 282h1v1h-1zM124 287h1v3h-1zM125 282h1v1h-1zM125 286h1v1h-1zM125 290h1v1h-1zM126 283h1v3h-1zM126 291h1v1h-1zM149 293h1v1h-1zM155 290h1v1h-1zM155 293h1v7h-1zM156 282h1v1h-1zM156 284h1v1h-1zM156 286h1v2h-1zM157 275h1v3h-1zM157 281h1v1h-1zM209 179h1v1h-1zM213 184h1v1h-1zM214 183h1v1h-1zM216 182h1v1h-1zM412 59h1v1h-1zM413 60h1v1h-1zM414 61h1v13h-1zM415 60h1v1h-1zM416 59h1v1h-1zM417 60h1v1h-1zM418 61h1v13h-1zM419 60h1v1h-1zM420 59h1v1h-1zM421 60h1v1h-1zM422 61h1v3h-1zM422 65h1v7h-1zM422 75h1v1h-1zM423 72h1v1h-1zM423 74h1v1h-1zM424 63h1v1h-1zM424 73h1v1h-1zM425 72h1v1h-1zM425 74h1v1h-1zM426 61h1v1h-1zM426 63h1v9h-1zM426 75h1v1h-1zM433 512h1v1h-1zM433 520h1v5h-1zM434 513h1v2h-1zM434 518h1v2h-1zM434 525h1v2h-1zM444 513h1v2h-1zM444 518h1v2h-1zM444 525h1v2h-1zM445 512h1v1h-1zM445 520h1v5h-1zM744 116h1v1h-1zM744 124h1v1h-1zM744 196h1v1h-1zM745 117h1v1h-1zM745 123h1v1h-1zM745 156h1v1h-1zM745 164h1v1h-1zM745 197h1v7h-1zM746 118h1v2h-1zM746 121h1v2h-1zM746 196h1v1h-1zM747 158h1v5h-1zM747 197h1v7h-1zM747 296h1v1h-1zM747 298h1v2h-1zM747 301h1v3h-1zM748 196h1v1h-1zM749 197h1v7h-1zM750 118h1v2h-1zM750 121h1v2h-1zM750 158h1v5h-1zM750 302h1v2h-1zM751 117h1v1h-1zM751 123h1v1h-1zM751 300h1v2h-1zM751 304h1v1h-1zM752 116h1v1h-1zM752 124h1v1h-1zM752 156h1v1h-1zM752 164h1v1h-1zM752 202h1v2h-1z"/>
<path fill="#00ff00" d="M286 33h5v1h-5zM280 39h7v1h-7zM290 39h7v1h-7zM280 43h17v1h-17zM745 126h2v1h-2zM750 126h2v1h-2zM201 141h5v1h-5zM201 149h5v1h-5zM199 153h9v1h-9zM747 167h3v1h-3zM745 168h2v1h-2zM750 168h2v1h-2zM745 170h2v1h-2zM750 171h2v1h-2zM745 173h2v1h-2zM750 173h2v1h-2zM747 174h3v1h-3zM221 183h2v1h-2zM750 206h3v1h-3zM751 207h2v1h-2zM298 222h2v1h-2zM307 227h2v1h-2zM316 232h2v1h-2zM325 237h2v1h-2zM328 239h2v1h-2zM334 242h2v1h-2zM123 244h9v1h-9zM337 244h2v1h-2zM343 247h2v1h-2zM346 249h2v1h-2zM126 250h3v1h-3zM352 252h2v1h-2zM126 254h3v1h-3zM355 254h2v1h-2zM121 257h5v1h-5zM361 257h2v1h-2zM747 257h3v1h-3zM364 259h2v1h-2zM366 261h3v1h-3zM747 261h3v1h-3zM370 262h2v1h-2zM746 263h5v1h-5zM373 264h2v1h-2zM121 265h5v1h-5zM376 266h2v1h-2zM747 266h3v1h-3zM379 267h2v1h-2zM119 269h9v1h-9zM382 269h2v1h-2zM747 270h3v1h-3zM385 271h2v1h-2zM388 272h2v1h-2zM746 272h5v1h-5zM390 274h3v1h-3zM394 276h2v1h-2zM400 279h2v1h-2zM402 281h3v1h-3zM406 283h2v1h-2zM409 284h2v1h-2zM412 286h2v1h-2zM414 287h2v1h-2zM418 289h2v1h-2zM421 291h2v1h-2zM426 294h2v1h-2zM430 296h2v1h-2zM437 300h2v1h-2zM439 301h2v1h-2zM746 309h5v1h-5zM241 357h2v1h-2zM246 393h2v1h-2zM247 399h2v1h-2zM248 405h2v1h-2zM249 411h2v1h-2zM527 414h11v1h-11zM250 417h2v1h-2zM527 426h11v1h-11zM73 432h2v1h-2zM79 432h2v1h-2zM76 436h2v1h-2zM82 436h2v1h-2zM73 442h2v1h-2zM79 442h2v1h-2zM76 446h2v1h-2zM82 446h2v1h-2zM70 437h1v1h-1zM70 447h1v1h-1zM71 435h1v2h-1zM71 445h1v2h-1zM72 434h1v1h-1zM72 444h1v1h-1zM73 433h1v1h-1zM73 443h1v1h-1zM74 431h1v1h-1zM74 441h1v1h-1zM75 433h1v3h-1zM75 443h1v3h-1zM76 437h1v1h-1zM76 447h1v1h-1zM77 435h1v1h-1zM77 445h1v1h-1zM78 434h1v1h-1zM78 444h1v1h-1zM79 433h1v1h-1zM79 443h1v1h-1zM80 431h1v1h-1zM80 441h1v1h-1zM81 433h1v3h-1zM81 443h1v3h-1zM82 437h1v1h-1zM82 447h1v1h-1zM83 435h1v1h-1zM83 445h1v1h-1zM84 434h1v1h-1zM84 444h1v1h-1zM85 432h1v2h-1zM85 442h1v2h-1zM86 431h1v1h-1zM86 441h1v1h-1zM119 259h1v5h-1zM120 258h1v1h-1zM120 264h1v1h-1zM121 238h1v1h-1zM121 248h1v1h-1zM122 239h1v1h-1zM122 247h1v1h-1zM123 240h1v4h-1zM123 245h1v2h-1zM123 266h1v3h-1zM123 270h1v4h-1zM125 251h1v3h-1zM126 258h1v1h-1zM126 264h1v1h-1zM127 242h1v2h-1zM127 245h1v5h-1zM127 259h1v5h-1zM129 251h1v3h-1zM131 240h1v4h-1zM131 245h1v2h-1zM132 239h1v1h-1zM132 247h1v1h-1zM133 238h1v1h-1zM133 248h1v1h-1zM151 274h1v1h-1zM151 277h1v1h-1zM199 139h1v1h-1zM199 143h1v5h-1zM200 140h1v1h-1zM200 142h1v1h-1zM200 148h1v1h-1zM203 150h1v3h-1zM203 154h1v2h-1zM206 140h1v1h-1zM206 142h1v1h-1zM206 148h1v1h-1zM207 139h1v1h-1zM207 143h1v5h-1zM213 186h1v1h-1zM214 189h1v1h-1zM215 195h1v1h-1zM215 198h1v1h-1zM216 174h1v1h-1zM216 201h1v1h-1zM217 207h1v1h-1zM217 210h1v1h-1zM218 181h1v1h-1zM218 213h1v1h-1zM218 216h1v1h-1zM219 185h1v1h-1zM219 189h1v1h-1zM219 219h1v1h-1zM219 222h1v1h-1zM220 193h1v1h-1zM220 197h1v1h-1zM220 225h1v1h-1zM220 228h1v1h-1zM220 231h1v1h-1zM221 187h1v1h-1zM221 201h1v1h-1zM221 205h1v1h-1zM221 234h1v1h-1zM221 237h1v1h-1zM222 191h1v1h-1zM222 195h1v1h-1zM222 209h1v1h-1zM222 213h1v1h-1zM222 240h1v1h-1zM222 243h1v1h-1zM223 181h1v1h-1zM223 199h1v1h-1zM223 203h1v1h-1zM223 217h1v1h-1zM223 246h1v1h-1zM223 249h1v1h-1zM224 179h1v1h-1zM224 207h1v1h-1zM224 211h1v1h-1zM224 221h1v1h-1zM224 225h1v1h-1zM224 252h1v1h-1zM224 255h1v1h-1zM225 215h1v1h-1zM225 219h1v1h-1zM225 229h1v1h-1zM225 233h1v1h-1zM225 258h1v1h-1zM225 261h1v1h-1zM226 182h1v1h-1zM226 185h1v1h-1zM226 223h1v1h-1zM226 227h1v1h-1zM226 237h1v1h-1zM226 241h1v1h-1zM226 264h1v1h-1zM226 267h1v1h-1zM227 181h1v1h-1zM227 231h1v1h-1zM227 235h1v1h-1zM227 245h1v1h-1zM227 249h1v1h-1zM227 270h1v1h-1zM227 273h1v1h-1zM228 239h1v1h-1zM228 243h1v1h-1zM228 253h1v1h-1zM228 257h1v1h-1zM228 276h1v1h-1zM228 279h1v1h-1zM229 184h1v1h-1zM229 247h1v1h-1zM229 251h1v1h-1zM229 261h1v1h-1zM229 282h1v1h-1zM229 285h1v1h-1zM230 183h1v1h-1zM230 188h1v1h-1zM230 255h1v1h-1zM230 259h1v1h-1zM230 265h1v1h-1zM230 269h1v1h-1zM230 288h1v1h-1zM230 291h1v1h-1zM231 263h1v1h-1zM231 267h1v1h-1zM231 273h1v1h-1zM231 277h1v1h-1zM231 294h1v1h-1zM231 297h1v1h-1zM231 300h1v1h-1zM232 186h1v1h-1zM232 271h1v1h-1zM232 275h1v1h-1zM232 281h1v1h-1zM232 285h1v1h-1zM232 303h1v1h-1zM232 306h1v1h-1zM233 279h1v1h-1zM233 283h1v1h-1zM233 289h1v1h-1zM233 293h1v1h-1zM233 309h1v1h-1zM233 312h1v1h-1zM234 190h1v1h-1zM234 287h1v1h-1zM234 291h1v1h-1zM234 297h1v1h-1zM234 315h1v1h-1zM234 318h1v1h-1zM235 187h1v1h-1zM235 295h1v1h-1zM235 299h1v1h-1zM235 301h1v1h-1zM235 305h1v1h-1zM235 321h1v1h-1zM235 324h1v1h-1zM236 186h1v1h-1zM236 303h1v1h-1zM236 309h1v1h-1zM236 313h1v1h-1zM236 327h1v1h-1zM236 330h1v1h-1zM237 307h1v1h-1zM237 311h1v1h-1zM237 317h1v1h-1zM237 321h1v1h-1zM237 333h1v1h-1zM237 336h1v1h-1zM238 189h1v1h-1zM238 192h1v1h-1zM238 315h1v1h-1zM238 319h1v1h-1zM238 325h1v1h-1zM238 329h1v1h-1zM238 339h1v1h-1zM238 342h1v1h-1zM239 188h1v1h-1zM239 323h1v1h-1zM239 327h1v1h-1zM239 333h1v1h-1zM239 337h1v1h-1zM239 345h1v1h-1zM239 348h1v1h-1zM240 331h1v1h-1zM240 335h1v1h-1zM240 341h1v1h-1zM240 351h1v1h-1zM240 354h1v1h-1zM241 191h1v1h-1zM241 339h1v1h-1zM241 343h1v1h-1zM241 345h1v1h-1zM241 349h1v1h-1zM241 360h1v1h-1zM242 189h1v1h-1zM242 194h1v1h-1zM242 347h1v1h-1zM242 351h1v1h-1zM242 353h1v1h-1zM242 363h1v1h-1zM242 366h1v1h-1zM242 369h1v1h-1zM243 355h1v1h-1zM243 359h1v1h-1zM243 361h1v1h-1zM243 365h1v1h-1zM243 372h1v1h-1zM243 375h1v1h-1zM244 192h1v1h-1zM244 363h1v1h-1zM244 367h1v1h-1zM244 369h1v1h-1zM244 373h1v1h-1zM244 378h1v1h-1zM244 381h1v1h-1zM245 191h1v1h-1zM245 371h1v1h-1zM245 375h1v1h-1zM245 377h1v1h-1zM245 384h1v1h-1zM245 387h1v1h-1zM246 196h1v1h-1zM246 379h1v1h-1zM246 381h1v1h-1zM246 383h1v1h-1zM246 385h1v1h-1zM246 390h1v1h-1zM247 194h1v1h-1zM247 387h1v1h-1zM247 389h1v1h-1zM247 391h1v1h-1zM247 396h1v1h-1zM248 193h1v1h-1zM248 395h1v1h-1zM248 397h1v1h-1zM248 401h1v2h-1zM249 403h1v1h-1zM249 407h1v3h-1zM250 196h1v1h-1zM250 198h1v1h-1zM250 413h1v3h-1zM251 194h1v1h-1zM251 419h1v3h-1zM251 423h1v1h-1zM252 425h1v3h-1zM252 429h1v1h-1zM252 431h1v1h-1zM253 197h1v1h-1zM253 432h1v2h-1zM253 435h1v1h-1zM254 196h1v1h-1zM254 201h1v1h-1zM256 199h1v1h-1zM257 198h1v1h-1zM258 203h1v1h-1zM259 201h1v1h-1zM260 199h1v1h-1zM262 202h1v1h-1zM262 205h1v1h-1zM263 201h1v1h-1zM265 204h1v1h-1zM266 203h1v1h-1zM266 207h1v1h-1zM268 206h1v1h-1zM269 205h1v1h-1zM270 209h1v1h-1zM271 207h1v1h-1zM272 206h1v1h-1zM274 209h1v1h-1zM274 211h1v1h-1zM275 208h1v1h-1zM277 211h1v1h-1zM278 210h1v1h-1zM278 214h1v1h-1zM280 212h1v1h-1zM281 211h1v1h-1zM282 216h1v1h-1zM283 214h1v1h-1zM284 35h1v3h-1zM284 213h1v1h-1zM285 34h1v1h-1zM285 38h1v1h-1zM286 216h1v1h-1zM286 218h1v1h-1zM287 215h1v1h-1zM289 217h1v1h-1zM290 216h1v1h-1zM290 220h1v1h-1zM291 34h1v1h-1zM291 38h1v1h-1zM292 35h1v3h-1zM292 219h1v1h-1zM293 218h1v1h-1zM294 222h1v1h-1zM295 221h1v1h-1zM296 220h1v1h-1zM298 224h1v1h-1zM301 224h1v1h-1zM302 223h1v1h-1zM302 227h1v1h-1zM304 226h1v1h-1zM305 225h1v1h-1zM306 229h1v1h-1zM310 229h1v1h-1zM310 231h1v1h-1zM311 228h1v1h-1zM313 231h1v1h-1zM314 230h1v1h-1zM314 233h1v1h-1zM318 235h1v1h-1zM319 234h1v1h-1zM320 233h1v1h-1zM322 236h1v2h-1zM323 235h1v1h-1zM326 240h1v1h-1zM330 242h1v1h-1zM331 241h1v1h-1zM332 240h1v1h-1zM334 244h1v1h-1zM338 246h1v1h-1zM340 246h1v1h-1zM341 245h1v1h-1zM342 248h1v1h-1zM346 250h1v1h-1zM349 251h1v1h-1zM350 250h1v1h-1zM350 253h1v1h-1zM354 255h1v1h-1zM358 256h1v2h-1zM359 255h1v1h-1zM362 259h1v1h-1zM370 263h1v1h-1zM374 266h1v1h-1zM378 268h1v1h-1zM382 270h1v1h-1zM386 272h1v1h-1zM397 277h1v1h-1zM398 278h1v2h-1zM406 282h1v1h-1zM410 285h1v1h-1zM416 288h1v1h-1zM422 292h1v1h-1zM424 292h1v1h-1zM425 293h1v1h-1zM428 295h1v1h-1zM433 297h1v1h-1zM434 298h1v1h-1zM436 299h1v1h-1zM442 302h1v1h-1zM525 412h1v1h-1zM525 428h1v1h-1zM526 413h1v1h-1zM526 427h1v1h-1zM529 415h1v11h-1zM535 415h1v11h-1zM538 413h1v1h-1zM538 427h1v1h-1zM539 412h1v1h-1zM539 428h1v1h-1zM744 127h1v2h-1zM744 169h1v1h-1zM744 171h1v2h-1zM744 214h1v1h-1zM745 129h1v1h-1zM745 209h1v1h-1zM745 213h1v1h-1zM745 306h1v1h-1zM745 311h1v1h-1zM746 210h1v1h-1zM746 212h1v1h-1zM746 256h1v1h-1zM746 258h1v3h-1zM746 267h1v3h-1zM746 307h1v2h-1zM746 310h1v1h-1zM747 127h1v3h-1zM747 171h1v2h-1zM747 211h1v1h-1zM747 313h1v1h-1zM748 130h1v5h-1zM748 210h1v1h-1zM748 212h1v1h-1zM748 262h1v1h-1zM748 264h1v1h-1zM748 271h1v1h-1zM748 273h1v2h-1zM748 308h1v1h-1zM748 310h1v3h-1zM748 314h1v1h-1zM749 127h1v3h-1zM749 169h1v2h-1zM749 209h1v1h-1zM749 213h1v1h-1zM749 313h1v1h-1zM750 208h1v1h-1zM750 256h1v1h-1zM750 258h1v3h-1zM750 267h1v3h-1zM750 307h1v2h-1zM750 310h1v1h-1zM751 129h1v1h-1zM751 306h1v1h-1zM751 311h1v1h-1zM752 127h1v2h-1zM752 169h1v2h-1zM752 172h1v1h-1zM752 208h1v1h-1z"/>
<path fill="#00ffff" d="M241 173h2v1h-2zM237 178h2v1h-2zM236 179h2v1h-2zM233 183h2v1h-2zM232 184h2v1h-2zM231 185h2v1h-2zM228 189h2v1h-2zM227 190h2v1h-2zM226 191h2v1h-2zM224 194h2v1h-2zM223 195h2v1h-2zM222 196h2v1h-2zM220 199h2v1h-2zM219 200h2v1h-2zM218 201h2v1h-2zM217 202h2v1h-2zM216 204h2v1h-2zM215 205h2v1h-2zM214 206h2v1h-2zM213 207h2v1h-2zM212 208h2v1h-2zM212 209h2v1h-2zM211 210h2v1h-2zM210 211h2v1h-2zM209 212h2v1h-2zM208 213h2v1h-2zM207 215h2v1h-2zM206 216h2v1h-2zM205 217h2v1h-2zM204 218h2v1h-2zM202 221h2v1h-2zM201 222h2v1h-2zM200 223h2v1h-2zM199 224h2v1h-2zM198 226h2v1h-2zM197 227h2v1h-2zM196 228h2v1h-2zM195 229h2v1h-2zM193 232h2v1h-2zM192 233h2v1h-2zM190 234h3v1h-3zM188 236h2v1h-2zM188 238h2v1h-2zM186 239h3v1h-3zM184 242h3v1h-3zM183 243h3v1h-3zM183 244h2v1h-2zM182 245h3v1h-3zM179 249h3v1h-3zM178 252h2v1h-2zM157 278h1v1h-1zM157 290h1v2h-1zM158 274h1v1h-1zM158 277h1v1h-1zM158 287h1v2h-1zM159 272h1v2h-1zM159 275h1v2h-1zM160 271h1v1h-1zM160 274h1v1h-1zM160 284h1v2h-1zM161 270h1v1h-1zM161 273h1v1h-1zM162 269h1v1h-1zM162 272h1v1h-1zM162 281h1v2h-1zM163 268h1v1h-1zM163 270h1v2h-1zM164 266h1v2h-1zM164 269h1v1h-1zM164 278h1v2h-1zM165 265h1v1h-1zM165 268h1v1h-1zM165 275h1v2h-1zM166 264h1v1h-1zM166 267h1v1h-1zM167 263h1v1h-1zM167 265h1v2h-1zM167 272h1v2h-1zM168 262h1v1h-1zM168 264h1v1h-1zM169 260h1v2h-1zM169 263h1v1h-1zM169 269h1v2h-1zM170 259h1v1h-1zM170 262h1v1h-1zM171 258h1v1h-1zM171 260h1v2h-1zM171 266h1v2h-1zM172 257h1v1h-1zM172 259h1v1h-1zM172 263h1v2h-1zM173 256h1v1h-1zM173 258h1v1h-1zM174 254h1v2h-1zM174 257h1v1h-1zM174 260h1v2h-1zM175 253h1v1h-1zM175 256h1v1h-1zM176 252h1v1h-1zM176 254h1v2h-1zM176 257h1v2h-1zM177 251h1v1h-1zM177 253h1v1h-1zM178 250h1v1h-1zM178 254h1v2h-1zM179 248h1v1h-1zM179 251h1v1h-1zM180 247h1v1h-1zM180 250h1v1h-1zM181 246h1v1h-1zM181 248h1v1h-1zM182 247h1v1h-1zM183 246h1v1h-1zM185 241h1v1h-1zM186 240h1v1h-1zM187 241h1v1h-1zM188 237h1v1h-1zM188 240h1v1h-1zM190 233h1v1h-1zM190 235h1v1h-1zM190 237h1v1h-1zM191 231h1v1h-1zM191 236h1v1h-1zM192 230h1v1h-1zM192 235h1v1h-1zM193 227h1v2h-1zM193 231h1v1h-1zM194 230h1v1h-1zM195 224h1v2h-1zM195 231h1v1h-1zM196 230h1v1h-1zM197 221h1v2h-1zM198 219h1v1h-1zM198 225h1v1h-1zM199 218h1v1h-1zM200 215h1v2h-1zM200 225h1v1h-1zM202 212h1v2h-1zM202 220h1v1h-1zM203 219h1v1h-1zM204 209h1v2h-1zM204 220h1v1h-1zM205 207h1v1h-1zM205 219h1v1h-1zM206 206h1v1h-1zM207 203h1v2h-1zM207 214h1v1h-1zM209 200h1v2h-1zM209 214h1v1h-1zM210 198h1v1h-1zM211 197h1v1h-1zM212 195h1v1h-1zM213 194h1v1h-1zM214 191h1v2h-1zM216 188h1v2h-1zM217 186h1v1h-1zM217 203h1v1h-1zM218 185h1v1h-1zM219 183h1v1h-1zM220 182h1v1h-1zM221 180h1v1h-1zM221 198h1v1h-1zM222 197h1v1h-1zM225 193h1v1h-1zM226 192h1v1h-1zM229 188h1v1h-1zM230 187h1v1h-1zM231 186h1v1h-1zM234 182h1v1h-1zM235 181h1v1h-1zM236 180h1v1h-1zM238 177h1v1h-1zM239 176h1v1h-1zM240 175h1v1h-1zM241 174h1v1h-1zM242 172h1v1h-1zM243 171h1v1h-1zM244 170h1v1h-1zM245 169h1v1h-1zM246 167h1v2h-1zM247 166h1v1h-1zM248 165h1v1h-1z"/>
<path fill="#7f7f7f" d="M134 137h2v1h-2zM131 140h2v1h-2zM475 143h2v1h-2zM126 146h2v1h-2zM477 147h2v1h-2zM469 148h2v1h-2zM117 149h2v1h-2zM123 149h2v1h-2zM480 150h2v1h-2zM472 151h2v1h-2zM484 152h2v1h-2zM115 153h2v1h-2zM123 154h2v1h-2zM475 154h2v1h-2zM480 155h2v1h-2zM120 157h2v1h-2zM109 158h2v1h-2zM476 158h2v1h-2zM489 159h2v1h-2zM113 161h2v1h-2zM106 162h2v1h-2zM485 162h2v1h-2zM491 162h2v1h-2zM109 164h2v1h-2zM117 164h2v1h-2zM104 165h2v1h-2zM111 165h2v1h-2zM481 165h2v1h-2zM487 165h2v1h-2zM494 165h2v1h-2zM114 167h2v1h-2zM491 167h2v1h-2zM101 168h2v1h-2zM108 168h2v1h-2zM483 168h2v1h-2zM488 169h2v1h-2zM496 169h2v1h-2zM104 170h2v1h-2zM112 171h2v1h-2zM485 171h2v1h-2zM493 171h2v1h-2zM107 172h2v1h-2zM491 172h2v1h-2zM110 174h2v1h-2zM488 174h2v1h-2zM97 175h2v1h-2zM500 176h2v1h-2zM100 177h2v1h-2zM497 178h2v1h-2zM95 179h2v1h-2zM103 179h2v1h-2zM495 179h2v1h-2zM503 179h2v1h-2zM97 180h2v1h-2zM501 180h2v1h-2zM106 181h2v1h-2zM492 181h2v1h-2zM499 181h2v1h-2zM100 182h2v1h-2zM93 183h2v1h-2zM102 183h2v1h-2zM496 183h2v1h-2zM505 183h2v1h-2zM95 184h2v1h-2zM104 184h2v1h-2zM494 184h2v1h-2zM503 184h2v1h-2zM97 185h2v1h-2zM501 185h2v1h-2zM91 186h2v1h-2zM99 186h2v1h-2zM93 187h2v1h-2zM101 187h2v1h-2zM498 187h2v1h-2zM506 187h2v1h-2zM496 188h2v1h-2zM504 188h2v1h-2zM96 189h2v1h-2zM502 189h2v1h-2zM98 190h2v1h-2zM500 190h2v1h-2zM100 191h2v1h-2zM498 191h2v1h-2zM511 193h2v1h-2zM87 194h2v1h-2zM509 194h2v1h-2zM89 195h2v1h-2zM507 195h2v1h-2zM91 196h2v1h-2zM505 196h2v1h-2zM85 197h2v1h-2zM93 197h2v1h-2zM503 197h2v1h-2zM513 197h2v1h-2zM87 198h2v1h-2zM95 198h2v1h-2zM501 198h2v1h-2zM511 198h2v1h-2zM89 199h2v1h-2zM97 199h2v1h-2zM509 199h2v1h-2zM91 200h2v1h-2zM507 200h2v1h-2zM84 201h2v1h-2zM93 201h2v1h-2zM505 201h2v1h-2zM515 201h2v1h-2zM86 202h2v1h-2zM95 202h2v1h-2zM503 202h2v1h-2zM513 202h2v1h-2zM88 203h2v1h-2zM510 203h3v1h-3zM90 204h2v1h-2zM508 204h2v1h-2zM82 205h2v1h-2zM92 205h2v1h-2zM506 205h2v1h-2zM515 205h2v1h-2zM84 206h3v1h-3zM504 206h2v1h-2zM513 206h2v1h-2zM87 207h3v1h-3zM511 207h2v1h-2zM90 208h2v1h-2zM509 208h2v1h-2zM92 209h2v1h-2zM507 209h2v1h-2zM77 212h2v1h-2zM520 212h2v1h-2zM79 213h2v1h-2zM518 213h2v1h-2zM81 214h3v1h-3zM515 214h3v1h-3zM84 215h3v1h-3zM512 215h3v1h-3zM76 216h2v1h-2zM87 216h2v1h-2zM510 216h2v1h-2zM521 216h2v1h-2zM78 217h3v1h-3zM519 217h2v1h-2zM81 218h4v1h-4zM516 218h3v1h-3zM85 219h3v1h-3zM514 219h2v1h-2zM76 220h2v1h-2zM88 220h2v1h-2zM512 220h2v1h-2zM523 220h2v1h-2zM78 221h3v1h-3zM510 221h2v1h-2zM521 221h2v1h-2zM81 222h3v1h-3zM518 222h3v1h-3zM84 223h2v1h-2zM515 223h3v1h-3zM75 224h2v1h-2zM86 224h2v1h-2zM513 224h2v1h-2zM524 224h2v1h-2zM77 225h3v1h-3zM511 225h2v1h-2zM521 225h3v1h-3zM80 226h3v1h-3zM517 226h4v1h-4zM83 227h2v1h-2zM514 227h3v1h-3zM85 228h2v1h-2zM512 228h2v1h-2zM72 232h4v1h-4zM527 232h2v1h-2zM76 233h3v1h-3zM524 233h3v1h-3zM79 234h4v1h-4zM520 234h4v1h-4zM83 235h2v1h-2zM517 235h3v1h-3zM71 236h3v1h-3zM515 236h2v1h-2zM528 236h2v1h-2zM74 237h4v1h-4zM525 237h3v1h-3zM78 238h3v1h-3zM521 238h4v1h-4zM81 239h2v1h-2zM518 239h3v1h-3zM70 240h3v1h-3zM516 240h2v1h-2zM528 240h3v1h-3zM73 241h4v1h-4zM524 241h4v1h-4zM77 242h3v1h-3zM520 242h4v1h-4zM80 243h2v1h-2zM517 243h3v1h-3zM69 244h3v1h-3zM529 244h3v1h-3zM72 245h4v1h-4zM525 245h4v1h-4zM76 246h3v1h-3zM521 246h4v1h-4zM79 247h2v1h-2zM518 247h3v1h-3zM66 252h3v1h-3zM531 252h2v1h-2zM69 253h7v1h-7zM526 253h5v1h-5zM76 254h4v1h-4zM522 254h4v1h-4zM520 255h2v1h-2zM65 256h4v1h-4zM532 256h2v1h-2zM69 257h6v1h-6zM527 257h5v1h-5zM75 258h4v1h-4zM523 258h4v1h-4zM521 259h2v1h-2zM64 260h4v1h-4zM532 260h3v1h-3zM68 261h6v1h-6zM528 261h4v1h-4zM74 262h4v1h-4zM524 262h4v1h-4zM521 263h3v1h-3zM63 264h4v1h-4zM532 264h4v1h-4zM67 265h7v1h-7zM525 265h7v1h-7zM74 266h3v1h-3zM522 266h3v1h-3zM62 272h4v1h-4zM66 273h7v1h-7zM529 273h8v1h-8zM73 274h3v1h-3zM523 274h6v1h-6zM62 276h4v1h-4zM66 277h6v1h-6zM530 277h7v1h-7zM72 278h4v1h-4zM523 278h7v1h-7zM62 280h3v1h-3zM65 281h7v1h-7zM530 281h7v1h-7zM72 282h4v1h-4zM523 282h7v1h-7zM62 285h14v1h-14zM530 285h7v1h-7zM523 286h7v1h-7zM61 293h14v1h-14zM524 294h14v1h-14zM61 297h14v1h-14zM299 297h2v1h-2zM524 298h14v1h-14zM61 300h14v1h-14zM298 301h2v1h-2zM524 301h14v1h-14zM61 304h14v1h-14zM455 304h13v1h-13zM524 305h14v1h-14zM68 312h8v1h-8zM62 313h6v1h-6zM523 313h14v1h-14zM68 316h8v1h-8zM523 316h4v1h-4zM62 317h6v1h-6zM527 317h7v1h-7zM534 318h3v1h-3zM69 320h7v1h-7zM523 320h4v1h-4zM62 321h7v1h-7zM527 321h6v1h-6zM533 322h4v1h-4zM69 324h7v1h-7zM523 324h3v1h-3zM62 325h7v1h-7zM526 325h7v1h-7zM533 326h4v1h-4zM74 332h3v1h-3zM522 332h3v1h-3zM67 333h7v1h-7zM525 333h7v1h-7zM64 334h3v1h-3zM532 334h3v1h-3zM75 335h3v1h-3zM71 336h4v1h-4zM521 336h4v1h-4zM67 337h4v1h-4zM525 337h6v1h-6zM65 338h2v1h-2zM531 338h3v1h-3zM76 339h3v1h-3zM71 340h5v1h-5zM520 340h4v1h-4zM67 341h4v1h-4zM524 341h6v1h-6zM65 342h2v1h-2zM530 342h4v1h-4zM77 343h3v1h-3zM72 344h5v1h-5zM519 344h4v1h-4zM68 345h4v1h-4zM523 345h7v1h-7zM66 346h2v1h-2zM530 346h3v1h-3zM78 351h3v1h-3zM518 351h2v1h-2zM74 352h4v1h-4zM520 352h3v1h-3zM70 353h4v1h-4zM523 353h4v1h-4zM68 354h2v1h-2zM527 354h3v1h-3zM79 355h3v1h-3zM517 355h2v1h-2zM75 356h4v1h-4zM519 356h3v1h-3zM71 357h4v1h-4zM522 357h4v1h-4zM68 358h3v1h-3zM81 358h2v1h-2zM526 358h3v1h-3zM78 359h3v1h-3zM516 359h2v1h-2zM74 360h4v1h-4zM518 360h3v1h-3zM71 361h3v1h-3zM521 361h4v1h-4zM69 362h2v1h-2zM82 362h2v1h-2zM525 362h3v1h-3zM79 363h3v1h-3zM514 363h2v1h-2zM75 364h4v1h-4zM516 364h4v1h-4zM72 365h3v1h-3zM520 365h3v1h-3zM70 366h2v1h-2zM523 366h4v1h-4zM85 370h2v1h-2zM512 370h2v1h-2zM82 371h3v1h-3zM514 371h2v1h-2zM78 372h4v1h-4zM516 372h3v1h-3zM75 373h3v1h-3zM86 373h2v1h-2zM519 373h3v1h-3zM73 374h2v1h-2zM84 374h2v1h-2zM511 374h2v1h-2zM522 374h2v1h-2zM81 375h3v1h-3zM513 375h2v1h-2zM78 376h3v1h-3zM515 376h3v1h-3zM76 377h2v1h-2zM87 377h2v1h-2zM518 377h3v1h-3zM74 378h2v1h-2zM85 378h2v1h-2zM509 378h2v1h-2zM521 378h2v1h-2zM82 379h3v1h-3zM511 379h3v1h-3zM80 380h2v1h-2zM514 380h4v1h-4zM78 381h2v1h-2zM89 381h2v1h-2zM508 381h2v1h-2zM518 381h3v1h-3zM76 382h2v1h-2zM87 382h2v1h-2zM510 382h2v1h-2zM521 382h2v1h-2zM84 383h3v1h-3zM512 383h3v1h-3zM81 384h3v1h-3zM515 384h3v1h-3zM79 385h2v1h-2zM518 385h2v1h-2zM77 386h2v1h-2zM520 386h2v1h-2zM90 389h2v1h-2zM505 389h2v1h-2zM88 390h2v1h-2zM507 390h2v1h-2zM86 391h2v1h-2zM509 391h3v1h-3zM84 392h2v1h-2zM93 392h2v1h-2zM512 392h3v1h-3zM82 393h2v1h-2zM91 393h2v1h-2zM505 393h2v1h-2zM515 393h2v1h-2zM88 394h3v1h-3zM507 394h2v1h-2zM86 395h2v1h-2zM95 395h2v1h-2zM509 395h2v1h-2zM84 396h2v1h-2zM93 396h2v1h-2zM511 396h2v1h-2zM82 397h2v1h-2zM91 397h2v1h-2zM503 397h2v1h-2zM513 397h2v1h-2zM89 398h2v1h-2zM175 398h2v1h-2zM505 398h2v1h-2zM87 399h2v1h-2zM97 399h2v1h-2zM507 399h2v1h-2zM85 400h2v1h-2zM95 400h2v1h-2zM501 400h2v1h-2zM509 400h2v1h-2zM93 401h2v1h-2zM503 401h2v1h-2zM511 401h2v1h-2zM91 402h2v1h-2zM170 402h2v1h-2zM505 402h2v1h-2zM89 403h2v1h-2zM507 403h2v1h-2zM87 404h2v1h-2zM509 404h2v1h-2zM511 405h2v1h-2zM100 406h2v1h-2zM98 407h2v1h-2zM497 407h2v1h-2zM96 408h2v1h-2zM499 408h2v1h-2zM94 409h2v1h-2zM92 410h2v1h-2zM101 410h2v1h-2zM502 410h2v1h-2zM90 411h2v1h-2zM99 411h2v1h-2zM495 411h2v1h-2zM504 411h2v1h-2zM97 412h2v1h-2zM497 412h2v1h-2zM506 412h2v1h-2zM499 413h2v1h-2zM94 414h2v1h-2zM103 414h2v1h-2zM493 414h2v1h-2zM501 414h2v1h-2zM92 415h2v1h-2zM101 415h2v1h-2zM495 415h2v1h-2zM503 415h2v1h-2zM99 416h2v1h-2zM505 416h2v1h-2zM105 417h2v1h-2zM491 417h2v1h-2zM498 417h2v1h-2zM96 418h2v1h-2zM500 418h2v1h-2zM94 419h2v1h-2zM102 419h2v1h-2zM494 419h2v1h-2zM502 419h2v1h-2zM100 420h2v1h-2zM497 421h2v1h-2zM97 422h2v1h-2zM500 423h2v1h-2zM109 424h2v1h-2zM487 424h2v1h-2zM106 426h2v1h-2zM490 426h2v1h-2zM104 427h2v1h-2zM112 427h2v1h-2zM485 427h2v1h-2zM493 428h2v1h-2zM101 429h2v1h-2zM109 429h2v1h-2zM114 430h2v1h-2zM489 430h2v1h-2zM496 430h2v1h-2zM106 431h2v1h-2zM483 431h2v1h-2zM103 433h2v1h-2zM110 433h2v1h-2zM116 433h2v1h-2zM486 433h2v1h-2zM493 433h2v1h-2zM480 434h2v1h-2zM488 434h2v1h-2zM106 436h2v1h-2zM112 436h2v1h-2zM491 436h2v1h-2zM484 437h2v1h-2zM108 439h2v1h-2zM121 440h2v1h-2zM488 440h2v1h-2zM477 441h2v1h-2zM117 443h2v1h-2zM122 444h2v1h-2zM474 444h2v1h-2zM482 445h2v1h-2zM113 446h2v1h-2zM125 447h2v1h-2zM117 448h2v1h-2zM480 449h2v1h-2zM128 450h2v1h-2zM475 450h2v1h-2zM120 451h2v1h-2zM472 453h2v1h-2zM122 455h2v1h-2zM467 459h2v1h-2zM464 462h2v1h-2zM68 243h1v1h-1zM69 239h1v1h-1zM70 235h1v1h-1zM71 231h1v1h-1zM74 223h1v1h-1zM75 219h1v1h-1zM81 204h1v1h-1zM81 394h1v1h-1zM83 200h1v1h-1zM84 401h1v1h-1zM86 193h1v1h-1zM86 405h1v1h-1zM89 217h1v1h-1zM90 185h1v1h-1zM92 182h1v1h-1zM92 388h1v1h-1zM94 178h1v1h-1zM94 206h1v1h-1zM95 188h1v1h-1zM96 174h1v1h-1zM96 413h1v1h-1zM96 423h1v1h-1zM98 417h1v1h-1zM99 176h1v1h-1zM99 181h1v1h-1zM99 421h1v1h-1zM102 178h1v1h-1zM103 164h1v1h-1zM103 169h1v1h-1zM103 188h1v1h-1zM103 409h1v1h-1zM103 428h1v1h-1zM104 418h1v1h-1zM105 180h1v1h-1zM105 413h1v1h-1zM105 432h1v1h-1zM106 166h1v1h-1zM106 171h1v1h-1zM107 167h1v1h-1zM107 416h1v1h-1zM108 157h1v1h-1zM108 163h1v1h-1zM108 425h1v1h-1zM108 430h1v1h-1zM108 435h1v1h-1zM109 173h1v1h-1zM109 434h1v1h-1zM110 169h1v1h-1zM110 438h1v1h-1zM111 159h1v1h-1zM111 170h1v1h-1zM111 423h1v1h-1zM111 428h1v1h-1zM111 437h1v1h-1zM112 160h1v1h-1zM112 432h1v1h-1zM113 151h1v1h-1zM113 166h1v1h-1zM113 431h1v1h-1zM114 152h1v1h-1zM114 172h1v1h-1zM114 426h1v1h-1zM114 435h1v1h-1zM115 162h1v1h-1zM115 240h1v1h-1zM115 434h1v1h-1zM115 445h1v1h-1zM115 450h1v1h-1zM116 148h1v1h-1zM116 163h1v1h-1zM116 168h1v1h-1zM116 429h1v1h-1zM116 444h1v1h-1zM116 449h1v1h-1zM117 154h1v1h-1zM117 241h1v1h-1zM118 155h1v1h-1zM118 432h1v1h-1zM118 453h1v1h-1zM119 145h1v1h-1zM119 150h1v1h-1zM119 156h1v1h-1zM119 165h1v1h-1zM119 241h1v1h-1zM119 442h1v1h-1zM119 447h1v1h-1zM119 452h1v1h-1zM120 146h1v1h-1zM120 151h1v1h-1zM120 441h1v1h-1zM120 446h1v1h-1zM121 141h1v1h-1zM121 147h1v1h-1zM121 152h1v1h-1zM121 242h1v1h-1zM121 445h1v1h-1zM121 456h1v1h-1zM122 142h1v1h-1zM122 148h1v1h-1zM122 153h1v1h-1zM122 158h1v1h-1zM122 450h1v1h-1zM123 143h1v1h-1zM123 159h1v1h-1zM123 439h1v1h-1zM123 449h1v1h-1zM124 144h1v1h-1zM124 443h1v1h-1zM124 448h1v1h-1zM124 454h1v1h-1zM125 145h1v1h-1zM125 150h1v1h-1zM125 155h1v1h-1zM125 243h1v1h-1zM125 442h1v1h-1zM125 453h1v1h-1zM126 135h1v1h-1zM126 151h1v1h-1zM126 156h1v1h-1zM126 452h1v1h-1zM126 463h1v1h-1zM127 136h1v1h-1zM127 152h1v1h-1zM127 446h1v1h-1zM127 451h1v1h-1zM127 462h1v1h-1zM128 137h1v1h-1zM128 147h1v1h-1zM128 153h1v1h-1zM128 445h1v1h-1zM128 461h1v1h-1zM129 132h1v1h-1zM129 138h1v1h-1zM129 148h1v1h-1zM129 460h1v1h-1zM129 466h1v1h-1zM130 133h1v1h-1zM130 139h1v1h-1zM130 149h1v1h-1zM130 449h1v1h-1zM130 459h1v1h-1zM130 465h1v1h-1zM131 134h1v1h-1zM131 150h1v1h-1zM131 448h1v1h-1zM131 458h1v1h-1zM131 464h1v1h-1zM132 129h1v1h-1zM132 135h1v1h-1zM132 457h1v1h-1zM132 463h1v1h-1zM132 469h1v1h-1zM133 130h1v1h-1zM133 136h1v1h-1zM133 141h1v1h-1zM133 246h1v1h-1zM133 456h1v1h-1zM133 462h1v1h-1zM133 468h1v1h-1zM134 131h1v1h-1zM134 142h1v1h-1zM134 455h1v1h-1zM134 461h1v1h-1zM134 467h1v1h-1zM135 126h1v1h-1zM135 132h1v1h-1zM135 143h1v1h-1zM135 246h1v1h-1zM135 454h1v1h-1zM135 460h1v1h-1zM135 466h1v1h-1zM135 472h1v1h-1zM136 127h1v1h-1zM136 133h1v1h-1zM136 138h1v1h-1zM136 144h1v1h-1zM136 453h1v1h-1zM136 459h1v1h-1zM136 464h1v2h-1zM136 471h1v1h-1zM137 128h1v1h-1zM137 134h1v1h-1zM137 139h1v1h-1zM137 247h1v1h-1zM137 458h1v1h-1zM137 463h1v1h-1zM137 470h1v1h-1zM138 129h1v1h-1zM138 135h1v1h-1zM138 140h1v1h-1zM138 457h1v1h-1zM138 462h1v1h-1zM138 469h1v1h-1zM139 130h1v1h-1zM139 136h1v1h-1zM139 141h1v1h-1zM139 190h1v1h-1zM139 248h1v1h-1zM139 456h1v1h-1zM139 461h1v1h-1zM139 467h1v2h-1zM140 131h1v1h-1zM140 137h1v1h-1zM140 460h1v1h-1zM140 466h1v1h-1zM141 132h1v1h-1zM141 138h1v1h-1zM141 191h1v1h-1zM141 248h1v1h-1zM141 459h1v1h-1zM141 465h1v1h-1zM141 477h1v1h-1zM142 121h1v1h-1zM142 133h1v1h-1zM142 139h1v1h-1zM142 464h1v1h-1zM142 476h1v1h-1zM143 122h1v2h-1zM143 134h1v1h-1zM143 193h1v1h-1zM143 249h1v1h-1zM143 463h1v1h-1zM143 475h1v1h-1zM144 124h1v1h-1zM144 135h1v1h-1zM144 462h1v1h-1zM144 474h1v1h-1zM145 118h1v1h-1zM145 125h1v1h-1zM145 136h1v1h-1zM145 194h1v1h-1zM145 250h1v1h-1zM145 472h1v2h-1zM145 479h1v1h-1zM146 119h1v1h-1zM146 126h1v1h-1zM146 471h1v1h-1zM146 478h1v1h-1zM147 120h1v2h-1zM147 127h1v1h-1zM147 195h1v1h-1zM147 250h1v1h-1zM147 470h1v1h-1zM147 477h1v1h-1zM148 115h1v1h-1zM148 122h1v1h-1zM148 128h1v2h-1zM148 469h1v1h-1zM148 475h1v2h-1zM148 482h1v1h-1zM149 116h1v1h-1zM149 123h1v1h-1zM149 130h1v1h-1zM149 197h1v1h-1zM149 251h1v1h-1zM149 468h1v1h-1zM149 474h1v1h-1zM149 480h1v2h-1zM150 117h1v2h-1zM150 124h1v1h-1zM150 131h1v1h-1zM150 467h1v1h-1zM150 473h1v1h-1zM150 479h1v1h-1zM151 119h1v1h-1zM151 125h1v2h-1zM151 198h1v1h-1zM151 252h1v1h-1zM151 472h1v1h-1zM151 478h1v1h-1zM151 485h1v1h-1zM152 113h1v2h-1zM152 120h1v1h-1zM152 127h1v1h-1zM152 471h1v1h-1zM152 477h1v1h-1zM152 484h1v1h-1zM153 115h1v1h-1zM153 121h1v1h-1zM153 128h1v1h-1zM153 200h1v1h-1zM153 252h1v1h-1zM153 470h1v1h-1zM153 476h1v1h-1zM153 482h1v2h-1zM154 116h1v1h-1zM154 122h1v2h-1zM154 474h1v2h-1zM154 481h1v1h-1zM155 117h1v2h-1zM155 124h1v1h-1zM155 201h1v1h-1zM155 253h1v1h-1zM155 473h1v1h-1zM155 480h1v1h-1zM156 119h1v1h-1zM156 125h1v1h-1zM156 472h1v1h-1zM156 479h1v1h-1zM157 120h1v1h-1zM157 202h1v1h-1zM157 253h1v1h-1zM157 477h1v2h-1zM157 490h1v1h-1zM158 121h1v2h-1zM158 476h1v1h-1zM158 488h1v2h-1zM159 108h1v2h-1zM159 123h1v1h-1zM159 204h1v1h-1zM159 254h1v1h-1zM159 475h1v1h-1zM159 487h1v1h-1zM160 110h1v1h-1zM160 486h1v1h-1zM161 111h1v1h-1zM161 205h1v1h-1zM161 255h1v1h-1zM161 484h1v2h-1zM162 106h1v2h-1zM162 112h1v2h-1zM162 483h1v1h-1zM162 491h1v2h-1zM163 108h1v1h-1zM163 114h1v1h-1zM163 206h1v1h-1zM163 255h1v1h-1zM163 482h1v1h-1zM163 490h1v1h-1zM164 109h1v1h-1zM164 115h1v1h-1zM164 480h1v2h-1zM164 488h1v2h-1zM164 495h1v1h-1zM165 103h1v2h-1zM165 110h1v2h-1zM165 116h1v2h-1zM165 208h1v1h-1zM165 256h1v1h-1zM165 479h1v1h-1zM165 486h1v2h-1zM165 493h1v2h-1zM166 105h1v1h-1zM166 112h1v1h-1zM166 118h1v1h-1zM166 485h1v1h-1zM166 492h1v1h-1zM167 106h1v2h-1zM167 113h1v1h-1zM167 209h1v1h-1zM167 257h1v1h-1zM167 483h1v2h-1zM167 491h1v1h-1zM168 108h1v1h-1zM168 114h1v2h-1zM168 404h1v1h-1zM168 482h1v1h-1zM168 489h1v2h-1zM168 496h1v2h-1zM169 101h1v2h-1zM169 109h1v2h-1zM169 116h1v1h-1zM169 210h1v1h-1zM169 257h1v1h-1zM169 403h1v1h-1zM169 488h1v1h-1zM169 495h1v1h-1zM170 103h1v1h-1zM170 111h1v1h-1zM170 487h1v1h-1zM170 493h1v2h-1zM171 104h1v2h-1zM171 112h1v2h-1zM171 212h1v1h-1zM171 485h1v2h-1zM171 492h1v1h-1zM172 106h1v2h-1zM172 114h1v1h-1zM172 401h1v1h-1zM172 484h1v1h-1zM172 490h1v2h-1zM173 108h1v1h-1zM173 213h1v1h-1zM173 259h1v1h-1zM173 400h1v1h-1zM173 489h1v1h-1zM174 109h1v2h-1zM174 399h1v1h-1zM174 487h1v2h-1zM174 502h1v1h-1zM175 96h1v1h-1zM175 111h1v1h-1zM175 215h1v1h-1zM175 259h1v1h-1zM175 500h1v2h-1zM176 97h1v2h-1zM176 499h1v1h-1zM177 99h1v1h-1zM177 216h1v1h-1zM177 260h1v1h-1zM177 397h1v1h-1zM177 497h1v2h-1zM178 100h1v2h-1zM178 396h1v1h-1zM178 496h1v1h-1zM178 504h1v1h-1zM179 94h1v2h-1zM179 102h1v2h-1zM179 217h1v1h-1zM179 261h1v1h-1zM179 494h1v2h-1zM179 502h1v2h-1zM180 96h1v2h-1zM180 104h1v1h-1zM180 493h1v1h-1zM180 500h1v2h-1zM181 98h1v1h-1zM181 105h1v2h-1zM181 219h1v1h-1zM181 261h1v1h-1zM181 491h1v2h-1zM181 498h1v2h-1zM182 99h1v2h-1zM182 107h1v1h-1zM182 497h1v1h-1zM182 505h1v2h-1zM183 92h1v2h-1zM183 101h1v2h-1zM183 220h1v1h-1zM183 262h1v1h-1zM183 495h1v2h-1zM183 503h1v2h-1zM184 94h1v2h-1zM184 103h1v2h-1zM184 493h1v2h-1zM184 501h1v2h-1zM185 96h1v1h-1zM185 105h1v1h-1zM185 221h1v1h-1zM185 262h1v1h-1zM185 499h1v2h-1zM185 508h1v1h-1zM186 97h1v2h-1zM186 497h1v2h-1zM186 506h1v2h-1zM187 90h1v2h-1zM187 99h1v2h-1zM187 223h1v1h-1zM187 263h1v1h-1zM187 495h1v2h-1zM187 504h1v2h-1zM188 92h1v2h-1zM188 101h1v2h-1zM188 502h1v2h-1zM189 94h1v2h-1zM189 103h1v1h-1zM189 224h1v1h-1zM189 264h1v1h-1zM189 457h1v1h-1zM189 501h1v1h-1zM190 96h1v2h-1zM190 455h1v1h-1zM190 499h1v2h-1zM191 98h1v2h-1zM191 225h1v1h-1zM191 264h1v1h-1zM191 453h1v1h-1zM191 497h1v2h-1zM192 100h1v2h-1zM193 86h1v1h-1zM193 265h1v1h-1zM193 451h1v1h-1zM193 511h1v2h-1zM194 87h1v2h-1zM194 449h1v1h-1zM194 509h1v2h-1zM195 89h1v2h-1zM195 228h1v1h-1zM195 266h1v1h-1zM195 507h1v2h-1zM196 91h1v2h-1zM196 447h1v1h-1zM196 505h1v2h-1zM196 513h1v1h-1zM197 84h1v1h-1zM197 93h1v2h-1zM197 230h1v1h-1zM197 266h1v1h-1zM197 445h1v1h-1zM197 503h1v2h-1zM197 511h1v2h-1zM198 85h1v2h-1zM198 95h1v2h-1zM198 443h1v1h-1zM198 501h1v2h-1zM198 509h1v2h-1zM199 87h1v2h-1zM199 97h1v2h-1zM199 231h1v1h-1zM199 267h1v1h-1zM199 500h1v1h-1zM199 507h1v2h-1zM200 89h1v2h-1zM200 441h1v1h-1zM200 505h1v2h-1zM200 515h1v1h-1zM201 82h1v2h-1zM201 91h1v2h-1zM201 232h1v1h-1zM201 268h1v1h-1zM201 439h1v1h-1zM201 503h1v2h-1zM201 513h1v2h-1zM202 84h1v2h-1zM202 93h1v2h-1zM202 502h1v1h-1zM202 511h1v2h-1zM203 86h1v2h-1zM203 95h1v2h-1zM203 234h1v1h-1zM203 268h1v1h-1zM203 437h1v1h-1zM203 509h1v2h-1zM204 81h1v1h-1zM204 88h1v3h-1zM204 435h1v1h-1zM204 507h1v2h-1zM204 517h1v1h-1zM205 82h1v2h-1zM205 91h1v2h-1zM205 235h1v1h-1zM205 269h1v1h-1zM205 433h1v1h-1zM205 505h1v2h-1zM205 515h1v2h-1zM206 84h1v2h-1zM206 93h1v2h-1zM206 504h1v1h-1zM206 512h1v3h-1zM207 86h1v2h-1zM207 236h1v1h-1zM207 270h1v1h-1zM207 431h1v1h-1zM207 509h1v3h-1zM208 88h1v2h-1zM208 429h1v1h-1zM208 507h1v2h-1zM209 90h1v2h-1zM209 238h1v1h-1zM209 270h1v1h-1zM209 505h1v2h-1zM210 92h1v1h-1zM210 427h1v1h-1zM211 239h1v1h-1zM211 271h1v1h-1zM211 425h1v1h-1zM212 77h1v2h-1zM212 423h1v1h-1zM212 520h1v2h-1zM213 79h1v2h-1zM213 240h1v1h-1zM213 271h1v1h-1zM213 518h1v2h-1zM214 81h1v3h-1zM214 421h1v1h-1zM214 515h1v3h-1zM215 84h1v3h-1zM215 242h1v1h-1zM215 272h1v1h-1zM215 419h1v1h-1zM215 512h1v3h-1zM216 76h1v2h-1zM216 87h1v2h-1zM216 510h1v2h-1zM216 521h1v2h-1zM217 78h1v2h-1zM217 89h1v1h-1zM217 243h1v1h-1zM217 273h1v1h-1zM217 417h1v1h-1zM217 509h1v1h-1zM217 518h1v3h-1zM218 80h1v2h-1zM218 415h1v1h-1zM218 514h1v4h-1zM219 82h1v3h-1zM219 245h1v1h-1zM219 273h1v1h-1zM219 413h1v1h-1zM219 511h1v3h-1zM219 523h1v1h-1zM220 74h1v2h-1zM220 85h1v2h-1zM220 509h1v2h-1zM220 521h1v2h-1zM221 76h1v2h-1zM221 87h1v2h-1zM221 246h1v1h-1zM221 274h1v1h-1zM221 411h1v1h-1zM221 518h1v3h-1zM222 78h1v3h-1zM222 409h1v1h-1zM222 515h1v3h-1zM223 81h1v3h-1zM223 247h1v1h-1zM223 275h1v1h-1zM223 513h1v2h-1zM223 524h1v1h-1zM224 73h1v2h-1zM224 84h1v2h-1zM224 407h1v1h-1zM224 511h1v2h-1zM224 522h1v2h-1zM225 75h1v3h-1zM225 86h1v2h-1zM225 249h1v1h-1zM225 275h1v1h-1zM225 405h1v1h-1zM225 519h1v3h-1zM226 78h1v4h-1zM226 403h1v1h-1zM226 516h1v3h-1zM227 82h1v3h-1zM227 250h1v1h-1zM227 276h1v1h-1zM227 514h1v2h-1zM228 85h1v2h-1zM228 401h1v1h-1zM228 512h1v2h-1zM229 277h1v1h-1zM229 399h1v1h-1zM231 253h1v1h-1zM231 397h1v1h-1zM231 527h1v1h-1zM232 70h1v2h-1zM232 395h1v1h-1zM232 523h1v4h-1zM233 72h1v3h-1zM233 254h1v1h-1zM233 278h1v1h-1zM233 393h1v1h-1zM233 520h1v3h-1zM234 75h1v4h-1zM234 516h1v4h-1zM235 79h1v3h-1zM235 255h1v1h-1zM235 278h1v1h-1zM235 391h1v1h-1zM235 514h1v2h-1zM235 528h1v1h-1zM236 69h1v2h-1zM236 82h1v2h-1zM236 389h1v1h-1zM236 525h1v3h-1zM237 71h1v3h-1zM237 257h1v1h-1zM237 279h1v1h-1zM237 521h1v4h-1zM238 74h1v4h-1zM238 387h1v1h-1zM238 518h1v3h-1zM239 78h1v3h-1zM239 258h1v1h-1zM239 280h1v1h-1zM239 385h1v1h-1zM239 516h1v2h-1zM239 529h1v1h-1zM240 68h1v3h-1zM240 81h1v2h-1zM240 383h1v1h-1zM240 526h1v3h-1zM241 71h1v4h-1zM241 259h1v1h-1zM241 280h1v1h-1zM241 522h1v4h-1zM242 75h1v4h-1zM242 381h1v1h-1zM242 519h1v3h-1zM243 79h1v3h-1zM243 261h1v1h-1zM243 281h1v1h-1zM243 379h1v1h-1zM243 517h1v2h-1zM243 530h1v1h-1zM244 67h1v3h-1zM244 527h1v3h-1zM245 70h1v4h-1zM245 262h1v1h-1zM245 282h1v1h-1zM245 523h1v4h-1zM246 74h1v4h-1zM246 375h1v1h-1zM246 520h1v3h-1zM247 78h1v3h-1zM247 264h1v1h-1zM247 282h1v1h-1zM247 373h1v1h-1zM247 518h1v2h-1zM249 265h1v1h-1zM249 283h1v1h-1zM249 371h1v1h-1zM250 369h1v1h-1zM251 266h1v1h-1zM251 284h1v1h-1zM252 66h1v2h-1zM252 367h1v1h-1zM252 530h1v3h-1zM253 68h1v4h-1zM253 268h1v1h-1zM253 284h1v1h-1zM253 365h1v1h-1zM253 523h1v7h-1zM254 72h1v5h-1zM254 363h1v1h-1zM254 519h1v4h-1zM255 77h1v2h-1zM255 269h1v1h-1zM255 285h1v1h-1zM256 65h1v2h-1zM256 361h1v1h-1zM256 530h1v4h-1zM257 67h1v4h-1zM257 270h1v1h-1zM257 286h1v1h-1zM257 359h1v1h-1zM257 524h1v6h-1zM258 71h1v5h-1zM258 520h1v4h-1zM259 76h1v2h-1zM259 272h1v1h-1zM259 286h1v1h-1zM259 357h1v1h-1zM260 64h1v3h-1zM260 355h1v1h-1zM260 531h1v4h-1zM261 67h1v4h-1zM261 273h1v1h-1zM261 353h1v1h-1zM261 525h1v6h-1zM262 71h1v4h-1zM262 521h1v4h-1zM263 75h1v3h-1zM263 274h1v1h-1zM263 287h1v1h-1zM263 351h1v1h-1zM264 63h1v4h-1zM264 349h1v1h-1zM264 532h1v4h-1zM265 67h1v7h-1zM265 276h1v1h-1zM265 288h1v1h-1zM265 347h1v1h-1zM265 525h1v7h-1zM266 74h1v3h-1zM266 109h1v1h-1zM266 522h1v3h-1zM267 111h1v1h-1zM267 113h1v1h-1zM267 115h1v1h-1zM267 277h1v1h-1zM267 289h1v1h-1zM267 345h1v1h-1zM268 117h1v1h-1zM268 119h1v1h-1zM268 121h1v1h-1zM268 343h1v1h-1zM269 123h1v1h-1zM269 125h1v1h-1zM269 127h1v1h-1zM269 279h1v1h-1zM269 289h1v1h-1zM270 129h1v1h-1zM270 131h1v1h-1zM270 133h1v1h-1zM270 341h1v1h-1zM271 135h1v1h-1zM271 137h1v1h-1zM271 139h1v1h-1zM271 280h1v1h-1zM271 290h1v1h-1zM271 339h1v1h-1zM272 141h1v1h-1zM272 143h1v1h-1zM272 145h1v1h-1zM272 337h1v1h-1zM272 533h1v4h-1zM273 62h1v7h-1zM273 147h1v1h-1zM273 149h1v1h-1zM273 151h1v1h-1zM273 281h1v1h-1zM273 291h1v1h-1zM273 526h1v7h-1zM274 69h1v7h-1zM274 153h1v1h-1zM274 155h1v1h-1zM274 157h1v1h-1zM274 335h1v1h-1zM274 523h1v3h-1zM275 159h1v1h-1zM275 161h1v1h-1zM275 283h1v1h-1zM275 291h1v1h-1zM275 333h1v1h-1zM276 163h1v1h-1zM276 165h1v1h-1zM276 167h1v1h-1zM276 533h1v4h-1zM277 62h1v7h-1zM277 169h1v1h-1zM277 171h1v1h-1zM277 173h1v1h-1zM277 284h1v1h-1zM277 292h1v1h-1zM277 331h1v1h-1zM277 527h1v6h-1zM278 69h1v7h-1zM278 175h1v1h-1zM278 177h1v1h-1zM278 179h1v1h-1zM278 329h1v1h-1zM278 523h1v4h-1zM279 181h1v1h-1zM279 183h1v1h-1zM279 185h1v1h-1zM279 285h1v1h-1zM279 293h1v1h-1zM279 327h1v1h-1zM280 187h1v1h-1zM280 189h1v1h-1zM280 191h1v1h-1zM280 534h1v3h-1zM281 62h1v6h-1zM281 193h1v1h-1zM281 195h1v1h-1zM281 197h1v1h-1zM281 287h1v1h-1zM281 293h1v1h-1zM281 325h1v1h-1zM281 527h1v7h-1zM282 68h1v8h-1zM282 199h1v1h-1zM282 201h1v1h-1zM282 203h1v1h-1zM282 323h1v1h-1zM282 523h1v4h-1zM283 205h1v1h-1zM283 207h1v1h-1zM283 209h1v1h-1zM283 288h1v1h-1zM283 294h1v1h-1zM284 211h1v1h-1zM284 215h1v1h-1zM284 321h1v1h-1zM285 62h1v6h-1zM285 217h1v1h-1zM285 219h1v1h-1zM285 295h1v1h-1zM285 319h1v1h-1zM285 523h1v14h-1zM286 68h1v8h-1zM286 221h1v1h-1zM286 223h1v1h-1zM286 225h1v1h-1zM286 317h1v1h-1zM287 227h1v1h-1zM287 229h1v1h-1zM287 231h1v1h-1zM287 291h1v1h-1zM287 295h1v1h-1zM288 233h1v1h-1zM288 235h1v1h-1zM288 237h1v1h-1zM288 315h1v1h-1zM289 239h1v1h-1zM289 241h1v1h-1zM289 243h1v1h-1zM289 292h1v1h-1zM289 296h1v1h-1zM289 313h1v1h-1zM290 245h1v1h-1zM290 247h1v1h-1zM290 249h1v1h-1zM291 251h1v1h-1zM291 253h1v1h-1zM291 255h1v1h-1zM291 294h1v1h-1zM291 296h1v1h-1zM291 311h1v1h-1zM292 257h1v1h-1zM292 259h1v1h-1zM292 261h1v1h-1zM292 309h1v1h-1zM293 263h1v1h-1zM293 265h1v1h-1zM293 267h1v1h-1zM293 295h1v1h-1zM293 297h1v1h-1zM293 307h1v1h-1zM293 524h1v14h-1zM294 61h1v14h-1zM294 269h1v1h-1zM294 271h1v1h-1zM295 273h1v1h-1zM295 275h1v1h-1zM295 277h1v1h-1zM295 296h1v1h-1zM295 305h1v1h-1zM296 279h1v1h-1zM296 281h1v1h-1zM296 283h1v1h-1zM296 303h1v1h-1zM297 285h1v1h-1zM297 287h1v1h-1zM297 289h1v1h-1zM297 524h1v14h-1zM298 61h1v14h-1zM298 291h1v1h-1zM298 293h1v1h-1zM298 295h1v1h-1zM300 303h1v1h-1zM300 305h1v1h-1zM300 307h1v1h-1zM300 524h1v14h-1zM301 61h1v14h-1zM301 300h1v1h-1zM301 309h1v1h-1zM301 311h1v1h-1zM301 313h1v1h-1zM302 295h1v1h-1zM302 315h1v1h-1zM302 317h1v1h-1zM302 319h1v1h-1zM303 293h1v1h-1zM303 300h1v1h-1zM303 302h1v1h-1zM303 321h1v1h-1zM303 323h1v1h-1zM303 325h1v1h-1zM304 327h1v1h-1zM304 329h1v1h-1zM304 524h1v14h-1zM305 61h1v14h-1zM305 301h1v1h-1zM305 303h1v1h-1zM305 331h1v1h-1zM305 333h1v1h-1zM305 335h1v1h-1zM306 289h1v1h-1zM306 337h1v1h-1zM306 339h1v1h-1zM306 341h1v1h-1zM307 287h1v1h-1zM307 302h1v1h-1zM307 304h1v1h-1zM307 343h1v1h-1zM307 345h1v1h-1zM307 347h1v1h-1zM308 349h1v1h-1zM308 351h1v1h-1zM308 353h1v1h-1zM309 285h1v1h-1zM309 302h1v1h-1zM309 306h1v1h-1zM309 355h1v1h-1zM309 357h1v1h-1zM309 359h1v1h-1zM310 283h1v1h-1zM310 361h1v1h-1zM310 363h1v1h-1zM310 365h1v1h-1zM311 303h1v1h-1zM311 307h1v1h-1zM311 367h1v1h-1zM311 369h1v1h-1zM311 371h1v1h-1zM312 281h1v1h-1zM312 373h1v1h-1zM312 375h1v1h-1zM312 377h1v1h-1zM312 523h1v7h-1zM313 62h1v14h-1zM313 279h1v1h-1zM313 303h1v1h-1zM313 309h1v1h-1zM313 379h1v1h-1zM313 381h1v1h-1zM313 530h1v7h-1zM314 277h1v1h-1zM314 383h1v1h-1zM314 385h1v1h-1zM314 387h1v1h-1zM315 304h1v1h-1zM315 310h1v1h-1zM315 389h1v1h-1zM315 391h1v1h-1zM315 393h1v1h-1zM316 72h1v4h-1zM316 275h1v1h-1zM316 395h1v1h-1zM316 397h1v1h-1zM316 399h1v1h-1zM316 523h1v7h-1zM317 65h1v7h-1zM317 273h1v1h-1zM317 305h1v1h-1zM317 311h1v1h-1zM317 401h1v1h-1zM317 403h1v1h-1zM317 405h1v1h-1zM317 530h1v7h-1zM318 62h1v3h-1zM318 407h1v1h-1zM318 409h1v1h-1zM318 411h1v1h-1zM319 271h1v1h-1zM319 305h1v1h-1zM319 313h1v1h-1zM319 413h1v1h-1zM319 415h1v1h-1zM319 417h1v1h-1zM320 72h1v4h-1zM320 269h1v1h-1zM320 419h1v1h-1zM320 421h1v1h-1zM320 423h1v1h-1zM320 523h1v7h-1zM321 66h1v6h-1zM321 267h1v1h-1zM321 306h1v1h-1zM321 314h1v1h-1zM321 425h1v1h-1zM321 427h1v1h-1zM321 429h1v1h-1zM321 530h1v7h-1zM322 62h1v4h-1zM322 431h1v1h-1zM322 433h1v1h-1zM322 435h1v1h-1zM323 265h1v1h-1zM323 307h1v1h-1zM323 315h1v1h-1zM323 437h1v1h-1zM323 439h1v1h-1zM324 73h1v3h-1zM324 263h1v1h-1zM324 441h1v1h-1zM324 443h1v1h-1zM324 445h1v1h-1zM324 523h1v6h-1zM325 66h1v7h-1zM325 307h1v1h-1zM325 317h1v1h-1zM325 447h1v1h-1zM325 449h1v1h-1zM325 451h1v1h-1zM325 529h1v8h-1zM326 62h1v4h-1zM326 261h1v1h-1zM326 453h1v1h-1zM326 455h1v1h-1zM326 457h1v1h-1zM327 259h1v1h-1zM327 308h1v1h-1zM327 318h1v1h-1zM327 459h1v1h-1zM327 461h1v1h-1zM327 463h1v1h-1zM328 257h1v1h-1zM328 465h1v1h-1zM328 467h1v1h-1zM328 469h1v1h-1zM329 309h1v1h-1zM329 319h1v1h-1zM329 471h1v1h-1zM329 473h1v1h-1zM329 475h1v1h-1zM330 255h1v1h-1zM330 477h1v1h-1zM330 479h1v1h-1zM330 481h1v1h-1zM331 253h1v1h-1zM331 309h1v1h-1zM331 321h1v1h-1zM331 483h1v1h-1zM331 485h1v1h-1zM331 487h1v1h-1zM332 74h1v3h-1zM332 489h1v1h-1zM332 522h1v3h-1zM333 67h1v7h-1zM333 251h1v1h-1zM333 310h1v1h-1zM333 322h1v1h-1zM333 525h1v7h-1zM334 64h1v3h-1zM334 249h1v1h-1zM334 532h1v3h-1zM335 247h1v1h-1zM335 311h1v1h-1zM335 324h1v1h-1zM335 521h1v3h-1zM336 74h1v4h-1zM336 524h1v4h-1zM337 68h1v6h-1zM337 245h1v1h-1zM337 311h1v1h-1zM337 325h1v1h-1zM337 528h1v4h-1zM338 65h1v3h-1zM338 243h1v1h-1zM338 532h1v2h-1zM339 241h1v1h-1zM339 312h1v1h-1zM339 326h1v1h-1zM339 520h1v3h-1zM340 75h1v4h-1zM340 523h1v4h-1zM341 69h1v6h-1zM341 239h1v1h-1zM341 312h1v1h-1zM341 328h1v1h-1zM341 527h1v5h-1zM342 65h1v4h-1zM342 237h1v1h-1zM342 532h1v2h-1zM343 313h1v1h-1zM343 329h1v1h-1zM343 519h1v3h-1zM344 76h1v4h-1zM344 235h1v1h-1zM344 522h1v4h-1zM345 69h1v7h-1zM345 233h1v1h-1zM345 314h1v1h-1zM345 330h1v1h-1zM345 526h1v5h-1zM346 66h1v3h-1zM346 231h1v1h-1zM346 531h1v2h-1zM347 314h1v1h-1zM347 332h1v1h-1zM348 229h1v1h-1zM349 227h1v1h-1zM349 315h1v1h-1zM349 333h1v1h-1zM351 79h1v2h-1zM351 225h1v1h-1zM351 316h1v1h-1zM351 334h1v1h-1zM351 518h1v3h-1zM352 76h1v3h-1zM352 223h1v1h-1zM352 521h1v4h-1zM353 72h1v4h-1zM353 221h1v1h-1zM353 316h1v1h-1zM353 336h1v1h-1zM353 525h1v4h-1zM354 69h1v3h-1zM354 529h1v2h-1zM355 68h1v1h-1zM355 80h1v2h-1zM355 219h1v1h-1zM355 317h1v1h-1zM355 337h1v1h-1zM355 517h1v3h-1zM356 77h1v3h-1zM356 217h1v1h-1zM356 520h1v4h-1zM357 73h1v4h-1zM357 318h1v1h-1zM357 339h1v1h-1zM357 524h1v4h-1zM358 70h1v3h-1zM358 215h1v1h-1zM358 516h1v2h-1zM358 528h1v3h-1zM359 69h1v1h-1zM359 81h1v2h-1zM359 213h1v1h-1zM359 318h1v1h-1zM359 340h1v1h-1zM359 518h1v3h-1zM360 78h1v3h-1zM360 211h1v1h-1zM360 521h1v4h-1zM361 74h1v4h-1zM361 319h1v1h-1zM361 341h1v1h-1zM361 525h1v3h-1zM362 71h1v3h-1zM362 209h1v1h-1zM362 515h1v2h-1zM362 528h1v2h-1zM363 70h1v1h-1zM363 83h1v2h-1zM363 207h1v1h-1zM363 320h1v1h-1zM363 343h1v1h-1zM363 517h1v3h-1zM364 79h1v4h-1zM364 520h1v4h-1zM365 76h1v3h-1zM365 205h1v1h-1zM365 320h1v1h-1zM365 344h1v1h-1zM365 524h1v3h-1zM366 72h1v4h-1zM366 203h1v1h-1zM366 527h1v2h-1zM367 71h1v1h-1zM367 201h1v1h-1zM367 321h1v1h-1zM367 345h1v1h-1zM369 199h1v1h-1zM369 321h1v1h-1zM369 347h1v1h-1zM370 85h1v2h-1zM370 197h1v1h-1zM370 512h1v2h-1zM371 83h1v2h-1zM371 322h1v1h-1zM371 348h1v1h-1zM371 514h1v3h-1zM372 80h1v3h-1zM372 195h1v1h-1zM372 517h1v4h-1zM373 77h1v3h-1zM373 193h1v1h-1zM373 323h1v1h-1zM373 349h1v1h-1zM373 511h1v2h-1zM373 521h1v3h-1zM374 75h1v2h-1zM374 86h1v2h-1zM374 191h1v1h-1zM374 513h1v2h-1zM374 524h1v2h-1zM375 74h1v1h-1zM375 84h1v2h-1zM375 323h1v1h-1zM375 351h1v1h-1zM375 515h1v3h-1zM376 81h1v3h-1zM376 189h1v1h-1zM376 518h1v3h-1zM377 78h1v3h-1zM377 187h1v1h-1zM377 324h1v1h-1zM377 352h1v1h-1zM377 510h1v2h-1zM377 521h1v2h-1zM378 76h1v2h-1zM378 88h1v2h-1zM378 512h1v2h-1zM378 523h1v2h-1zM379 75h1v1h-1zM379 85h1v3h-1zM379 185h1v1h-1zM379 325h1v1h-1zM379 354h1v1h-1zM379 514h1v2h-1zM380 81h1v4h-1zM380 183h1v1h-1zM380 516h1v3h-1zM381 78h1v3h-1zM381 89h1v2h-1zM381 181h1v1h-1zM381 325h1v1h-1zM381 355h1v1h-1zM381 508h1v2h-1zM381 519h1v2h-1zM382 76h1v2h-1zM382 87h1v2h-1zM382 510h1v2h-1zM382 521h1v2h-1zM383 84h1v3h-1zM383 179h1v1h-1zM383 326h1v1h-1zM383 356h1v1h-1zM383 512h1v3h-1zM384 81h1v3h-1zM384 177h1v1h-1zM384 515h1v3h-1zM385 79h1v2h-1zM385 327h1v1h-1zM385 358h1v1h-1zM385 518h1v2h-1zM386 77h1v2h-1zM386 175h1v1h-1zM386 520h1v2h-1zM387 173h1v1h-1zM387 327h1v1h-1zM387 359h1v1h-1zM388 171h1v1h-1zM388 506h1v1h-1zM389 92h1v2h-1zM389 328h1v1h-1zM389 360h1v1h-1zM389 507h1v2h-1zM390 90h1v2h-1zM390 169h1v1h-1zM390 509h1v2h-1zM391 87h1v3h-1zM391 167h1v1h-1zM391 329h1v1h-1zM391 362h1v1h-1zM391 511h1v2h-1zM392 84h1v3h-1zM392 94h1v1h-1zM392 504h1v2h-1zM392 513h1v2h-1zM393 82h1v2h-1zM393 92h1v2h-1zM393 165h1v1h-1zM393 329h1v1h-1zM393 363h1v1h-1zM393 506h1v2h-1zM393 515h1v2h-1zM394 81h1v1h-1zM394 90h1v2h-1zM394 163h1v1h-1zM394 508h1v2h-1zM394 517h1v1h-1zM395 88h1v2h-1zM395 161h1v1h-1zM395 330h1v1h-1zM395 364h1v1h-1zM395 502h1v1h-1zM395 510h1v3h-1zM396 86h1v2h-1zM396 95h1v2h-1zM396 503h1v2h-1zM396 513h1v2h-1zM397 84h1v2h-1zM397 93h1v2h-1zM397 159h1v1h-1zM397 330h1v1h-1zM397 366h1v1h-1zM397 505h1v2h-1zM397 515h1v2h-1zM398 83h1v1h-1zM398 91h1v2h-1zM398 157h1v1h-1zM398 507h1v2h-1zM399 89h1v2h-1zM399 97h1v2h-1zM399 331h1v1h-1zM399 367h1v1h-1zM399 500h1v1h-1zM399 509h1v2h-1zM400 87h1v2h-1zM400 95h1v2h-1zM400 155h1v1h-1zM400 501h1v2h-1zM400 511h1v2h-1zM401 85h1v2h-1zM401 93h1v2h-1zM401 153h1v1h-1zM401 332h1v1h-1zM401 368h1v1h-1zM401 503h1v2h-1zM401 513h1v2h-1zM402 91h1v2h-1zM402 151h1v1h-1zM402 505h1v2h-1zM403 89h1v2h-1zM403 332h1v1h-1zM403 370h1v1h-1zM403 507h1v2h-1zM404 87h1v2h-1zM404 149h1v1h-1zM404 509h1v2h-1zM405 86h1v1h-1zM405 147h1v1h-1zM405 333h1v1h-1zM405 371h1v1h-1zM405 511h1v2h-1zM406 497h1v1h-1zM407 100h1v2h-1zM407 145h1v1h-1zM407 334h1v1h-1zM407 373h1v1h-1zM407 498h1v2h-1zM408 98h1v2h-1zM408 143h1v1h-1zM408 500h1v2h-1zM409 96h1v2h-1zM409 141h1v1h-1zM409 334h1v1h-1zM409 374h1v1h-1zM409 495h1v1h-1zM409 502h1v2h-1zM410 95h1v1h-1zM410 103h1v1h-1zM410 496h1v2h-1zM410 504h1v2h-1zM411 93h1v2h-1zM411 101h1v2h-1zM411 335h1v1h-1zM411 375h1v1h-1zM411 498h1v2h-1zM411 506h1v2h-1zM412 91h1v2h-1zM412 99h1v2h-1zM412 500h1v1h-1zM412 508h1v1h-1zM413 90h1v1h-1zM413 97h1v2h-1zM413 336h1v1h-1zM413 377h1v1h-1zM413 493h1v1h-1zM413 501h1v2h-1zM414 95h1v2h-1zM414 104h1v2h-1zM414 494h1v2h-1zM414 503h1v2h-1zM415 93h1v2h-1zM415 102h1v2h-1zM415 336h1v1h-1zM415 378h1v1h-1zM415 496h1v2h-1zM415 505h1v2h-1zM416 92h1v1h-1zM416 100h1v2h-1zM416 491h1v1h-1zM416 498h1v1h-1zM417 99h1v1h-1zM417 106h1v2h-1zM417 337h1v1h-1zM417 379h1v1h-1zM417 492h1v2h-1zM417 499h1v2h-1zM418 97h1v2h-1zM418 105h1v1h-1zM418 494h1v1h-1zM418 501h1v2h-1zM419 95h1v2h-1zM419 103h1v2h-1zM419 337h1v1h-1zM419 381h1v1h-1zM419 495h1v2h-1zM419 503h1v2h-1zM420 94h1v1h-1zM420 102h1v1h-1zM420 497h1v2h-1zM421 100h1v2h-1zM421 338h1v1h-1zM421 382h1v1h-1zM421 499h1v1h-1zM422 99h1v1h-1zM422 500h1v2h-1zM423 97h1v2h-1zM423 339h1v1h-1zM423 383h1v1h-1zM423 487h1v1h-1zM423 502h1v1h-1zM424 96h1v1h-1zM424 110h1v2h-1zM424 488h1v2h-1zM425 109h1v1h-1zM425 339h1v1h-1zM425 385h1v1h-1zM425 490h1v1h-1zM426 107h1v2h-1zM426 114h1v1h-1zM426 484h1v1h-1zM426 491h1v2h-1zM427 106h1v1h-1zM427 112h1v2h-1zM427 340h1v1h-1zM427 386h1v1h-1zM427 485h1v2h-1zM427 493h1v2h-1zM428 104h1v2h-1zM428 111h1v1h-1zM428 487h1v1h-1zM428 495h1v1h-1zM429 103h1v1h-1zM429 110h1v1h-1zM429 341h1v1h-1zM429 388h1v1h-1zM429 482h1v1h-1zM429 488h1v2h-1zM429 496h1v2h-1zM430 101h1v2h-1zM430 108h1v2h-1zM430 116h1v1h-1zM430 483h1v2h-1zM430 490h1v1h-1zM431 107h1v1h-1zM431 114h1v2h-1zM431 341h1v1h-1zM431 389h1v1h-1zM431 485h1v1h-1zM431 491h1v2h-1zM432 106h1v1h-1zM432 113h1v1h-1zM432 480h1v1h-1zM432 486h1v1h-1zM432 493h1v1h-1zM433 104h1v2h-1zM433 111h1v2h-1zM433 119h1v1h-1zM433 342h1v1h-1zM433 390h1v1h-1zM433 481h1v2h-1zM433 487h1v2h-1zM433 494h1v2h-1zM434 103h1v1h-1zM434 109h1v2h-1zM434 117h1v2h-1zM434 483h1v1h-1zM434 489h1v1h-1zM435 108h1v1h-1zM435 116h1v1h-1zM435 343h1v1h-1zM435 392h1v1h-1zM435 484h1v1h-1zM435 490h1v1h-1zM436 106h1v2h-1zM436 115h1v1h-1zM436 485h1v2h-1zM436 491h1v2h-1zM437 113h1v2h-1zM437 343h1v1h-1zM437 393h1v1h-1zM437 487h1v1h-1zM438 112h1v1h-1zM438 488h1v1h-1zM439 111h1v1h-1zM439 123h1v1h-1zM439 344h1v1h-1zM439 394h1v1h-1zM439 475h1v1h-1zM439 489h1v2h-1zM440 109h1v2h-1zM440 122h1v1h-1zM440 476h1v2h-1zM441 108h1v1h-1zM441 120h1v2h-1zM441 345h1v1h-1zM441 396h1v1h-1zM441 478h1v1h-1zM442 119h1v1h-1zM442 126h1v1h-1zM442 473h1v1h-1zM442 479h1v1h-1zM443 118h1v1h-1zM443 125h1v1h-1zM443 345h1v1h-1zM443 397h1v1h-1zM443 474h1v1h-1zM443 480h1v2h-1zM444 117h1v1h-1zM444 123h1v2h-1zM444 475h1v2h-1zM444 482h1v1h-1zM445 115h1v2h-1zM445 122h1v1h-1zM445 128h1v1h-1zM445 346h1v1h-1zM445 398h1v1h-1zM445 470h1v1h-1zM445 477h1v1h-1zM445 483h1v1h-1zM446 114h1v1h-1zM446 121h1v1h-1zM446 127h1v1h-1zM446 471h1v1h-1zM446 478h1v1h-1zM446 484h1v2h-1zM447 113h1v1h-1zM447 120h1v1h-1zM447 126h1v1h-1zM447 346h1v1h-1zM447 400h1v1h-1zM447 472h1v2h-1zM447 479h1v1h-1zM448 119h1v1h-1zM448 125h1v1h-1zM448 131h1v1h-1zM448 467h1v1h-1zM448 474h1v1h-1zM448 480h1v2h-1zM449 117h1v2h-1zM449 123h1v2h-1zM449 130h1v1h-1zM449 347h1v1h-1zM449 401h1v1h-1zM449 468h1v1h-1zM449 475h1v1h-1zM449 482h1v1h-1zM450 116h1v1h-1zM450 122h1v1h-1zM450 129h1v1h-1zM450 469h1v2h-1zM450 476h1v1h-1zM450 483h1v1h-1zM451 121h1v1h-1zM451 128h1v1h-1zM451 348h1v1h-1zM451 403h1v1h-1zM451 471h1v1h-1zM451 477h1v2h-1zM452 120h1v1h-1zM452 126h1v2h-1zM452 472h1v1h-1zM452 479h1v1h-1zM453 119h1v1h-1zM453 125h1v1h-1zM453 348h1v1h-1zM453 404h1v1h-1zM453 462h1v1h-1zM453 473h1v1h-1zM453 480h1v1h-1zM454 124h1v1h-1zM454 136h1v1h-1zM454 463h1v1h-1zM454 474h1v1h-1zM455 123h1v1h-1zM455 135h1v1h-1zM455 349h1v1h-1zM455 405h1v1h-1zM455 464h1v1h-1zM455 475h1v2h-1zM456 122h1v1h-1zM456 134h1v1h-1zM456 459h1v1h-1zM456 465h1v1h-1zM456 477h1v1h-1zM457 121h1v1h-1zM457 133h1v1h-1zM457 139h1v1h-1zM457 350h1v1h-1zM457 407h1v1h-1zM457 460h1v1h-1zM457 466h1v1h-1zM458 131h1v2h-1zM458 138h1v1h-1zM458 461h1v1h-1zM458 467h1v1h-1zM459 130h1v1h-1zM459 137h1v1h-1zM459 142h1v1h-1zM459 350h1v1h-1zM459 408h1v1h-1zM459 457h1v1h-1zM459 462h1v1h-1zM459 468h1v1h-1zM460 129h1v1h-1zM460 136h1v1h-1zM460 141h1v1h-1zM460 458h1v1h-1zM460 463h1v1h-1zM460 469h1v1h-1zM461 128h1v1h-1zM461 134h1v2h-1zM461 140h1v1h-1zM461 351h1v1h-1zM461 459h1v1h-1zM461 464h1v1h-1zM461 470h1v1h-1zM462 127h1v1h-1zM462 133h1v1h-1zM462 139h1v1h-1zM462 145h1v1h-1zM462 454h1v1h-1zM462 460h1v1h-1zM462 465h1v1h-1zM462 471h1v1h-1zM463 126h1v1h-1zM463 132h1v1h-1zM463 138h1v1h-1zM463 144h1v1h-1zM463 352h1v1h-1zM463 455h1v1h-1zM463 461h1v1h-1zM463 466h1v1h-1zM463 472h1v1h-1zM464 131h1v1h-1zM464 137h1v1h-1zM464 143h1v1h-1zM464 456h1v1h-1zM464 467h1v1h-1zM465 130h1v1h-1zM465 136h1v1h-1zM465 142h1v1h-1zM465 352h1v1h-1zM465 457h1v1h-1zM465 468h1v1h-1zM466 129h1v1h-1zM466 135h1v1h-1zM466 141h1v1h-1zM466 458h1v1h-1zM466 463h1v1h-1zM466 469h1v1h-1zM467 134h1v1h-1zM467 140h1v1h-1zM467 150h1v1h-1zM467 353h1v1h-1zM467 448h1v1h-1zM467 464h1v1h-1zM468 133h1v1h-1zM468 139h1v1h-1zM468 149h1v1h-1zM468 449h1v1h-1zM468 465h1v1h-1zM469 132h1v1h-1zM469 138h1v1h-1zM469 354h1v1h-1zM469 450h1v1h-1zM469 460h1v1h-1zM469 466h1v1h-1zM470 137h1v1h-1zM470 153h1v1h-1zM470 445h1v1h-1zM470 451h1v1h-1zM470 461h1v1h-1zM471 136h1v1h-1zM471 147h1v1h-1zM471 152h1v1h-1zM471 354h1v1h-1zM471 446h1v1h-1zM471 452h1v1h-1zM471 462h1v1h-1zM472 135h1v1h-1zM472 146h1v1h-1zM472 442h1v1h-1zM472 447h1v1h-1zM472 463h1v1h-1zM473 145h1v1h-1zM473 156h1v1h-1zM473 355h1v1h-1zM473 443h1v1h-1zM473 448h1v1h-1zM474 144h1v1h-1zM474 150h1v1h-1zM474 155h1v1h-1zM474 449h1v1h-1zM474 454h1v1h-1zM475 149h1v1h-1zM475 159h1v1h-1zM475 355h1v1h-1zM475 439h1v1h-1zM475 455h1v1h-1zM476 148h1v1h-1zM476 440h1v1h-1zM476 445h1v1h-1zM476 456h1v1h-1zM477 142h1v1h-1zM477 153h1v1h-1zM477 356h1v1h-1zM477 446h1v1h-1zM477 451h1v1h-1zM477 457h1v1h-1zM478 152h1v1h-1zM478 157h1v1h-1zM478 447h1v1h-1zM478 452h1v1h-1zM479 146h1v1h-1zM479 151h1v1h-1zM479 156h1v1h-1zM479 357h1v1h-1zM479 433h1v1h-1zM479 442h1v1h-1zM479 448h1v1h-1zM479 453h1v1h-1zM480 145h1v1h-1zM480 166h1v1h-1zM480 443h1v1h-1zM481 357h1v1h-1zM481 444h1v1h-1zM482 149h1v1h-1zM482 154h1v1h-1zM482 169h1v1h-1zM482 430h1v1h-1zM482 435h1v1h-1zM482 450h1v1h-1zM483 148h1v1h-1zM483 153h1v1h-1zM483 164h1v1h-1zM483 358h1v1h-1zM483 436h1v1h-1zM484 163h1v1h-1zM484 172h1v1h-1zM484 426h1v1h-1zM484 446h1v1h-1zM485 167h1v1h-1zM485 432h1v1h-1zM485 447h1v1h-1zM486 166h1v1h-1zM486 438h1v1h-1zM487 161h1v1h-1zM487 170h1v1h-1zM487 175h1v1h-1zM487 428h1v1h-1zM487 439h1v1h-1zM488 160h1v1h-1zM488 429h1v1h-1zM489 164h1v1h-1zM489 425h1v1h-1zM490 163h1v1h-1zM490 168h1v1h-1zM490 173h1v1h-1zM490 435h1v1h-1zM490 441h1v1h-1zM491 182h1v1h-1zM491 431h1v1h-1zM492 427h1v1h-1zM492 432h1v1h-1zM493 166h1v1h-1zM493 185h1v1h-1zM493 418h1v1h-1zM494 180h1v1h-1zM495 170h1v1h-1zM495 189h1v1h-1zM495 429h1v1h-1zM495 434h1v1h-1zM496 420h1v1h-1zM497 192h1v1h-1zM497 416h1v1h-1zM498 182h1v1h-1zM499 177h1v1h-1zM499 422h1v1h-1zM500 186h1v1h-1zM500 199h1v1h-1zM500 399h1v1h-1zM501 409h1v1h-1zM502 175h1v1h-1zM502 203h1v1h-1zM502 396h1v1h-1zM502 424h1v1h-1zM504 392h1v1h-1zM504 420h1v1h-1zM506 210h1v1h-1zM508 186h1v1h-1zM508 413h1v1h-1zM509 217h1v1h-1zM513 402h1v1h-1zM515 398h1v1h-1zM517 204h1v1h-1zM517 394h1v1h-1zM523 379h1v1h-1zM524 375h1v1h-1zM527 367h1v1h-1zM528 363h1v1h-1zM529 359h1v1h-1zM530 355h1v1h-1z"/>
<path fill="#009090" d="M747 336h3v1h-3zM745 342h2v1h-2zM750 342h2v1h-2zM157 403h5v1h-5zM153 415h3v1h-3zM163 415h3v1h-3zM151 417h1v1h-1zM152 416h1v1h-1zM152 418h1v1h-1zM153 407h1v5h-1zM153 419h1v1h-1zM154 406h1v1h-1zM154 412h1v1h-1zM154 418h1v1h-1zM155 405h1v1h-1zM155 413h1v2h-1zM155 416h1v2h-1zM156 404h1v1h-1zM162 404h1v1h-1zM163 405h1v1h-1zM163 413h1v2h-1zM163 416h1v2h-1zM164 406h1v1h-1zM164 412h1v1h-1zM164 418h1v1h-1zM165 407h1v5h-1zM165 419h1v1h-1zM166 416h1v1h-1zM166 418h1v1h-1zM167 417h1v1h-1zM182 392h1v1h-1zM744 343h1v1h-1zM745 338h1v3h-1zM745 344h1v1h-1zM746 337h1v1h-1zM746 341h1v1h-1zM746 343h1v1h-1zM750 337h1v1h-1zM750 341h1v1h-1zM750 343h1v1h-1zM751 338h1v3h-1zM751 344h1v1h-1zM752 343h1v1h-1z"/>
</g>
<g class="hn" stroke="#000" stroke-width=".15" paint-order="fill stroke">
<text x="113.0" y="401.0" fill="#ff0000">1</text>
<text x="254.0" y="509.0" fill="#ffff00">2</text>
<text x="382.0" y="496.0" fill="#00ff00">3</text>
<text x="451.0" y="449.0" fill="#0000ff">4</text>
<text x="487.0" y="396.0" fill="#ff0000">5</text>
<text x="506.0" y="336.0" fill="#ffff00">6</text>
<text x="485.0" y="207.0" fill="#00ff00">7</text>
<text x="344.0" y="99.0" fill="#0000ff">8</text>
<text x="216.0" y="112.0" fill="#ff0000">9</text>
<text x="147.0" y="159.0" fill="#ffff00">10</text>
<text x="111.0" y="212.0" fill="#00ff00">11</text>
<text x="92.0" y="272.0" fill="#0000ff">12</text>
</g>
<g class="lb" stroke="#000" stroke-width=".25" paint-order="fill stroke">
<text transform="translate(112.3,329) scale(0.4,1)" font-size="25.5" fill="#ff0000">Asc</text>
<text transform="translate(165,179) scale(0.58,1)" font-size="25.5" fill="#ffff00">MC</text>
</g>
<g class="sb">
<text x="606" y="14" fill="#ffffff">Astrolog 5.40</text>
<text x="606" y="24" fill="#bfbfbf">""</text>
<text x="606" y="34" fill="#bfbfbf">Thu November 9, 1989</text>
<text x="606" y="44" fill="#bfbfbf">12:00pm (ST +1:00 GMT)</text>
<text x="606" y="54" fill="#bfbfbf">""</text>
<text x="606" y="64" fill="#bfbfbf"> 13°25E 52°32N</text>
<text x="606" y="74" fill="#bfbfbf">Placidus houses.</text>
<text x="606" y="84" fill="#bfbfbf">Tropical, Geocentric.</text>
<text x="606" y="94" fill="#bfbfbf">Julian Day = 2447839.9583</text>
<text y="114"><tspan x="606" fill="#ff0000"> 1st house: </tspan><tspan x="678" fill="#ffff00">12Cap34</tspan></text>
<text y="124"><tspan x="606" fill="#ffff00"> 2nd house: </tspan><tspan x="678" fill="#0000ff"> 7Pis39</tspan></text>
<text y="134"><tspan x="606" fill="#00ff00"> 3rd house: </tspan><tspan x="678" fill="#ff0000">22Ari35</tspan></text>
<text y="144"><tspan x="606" fill="#0000ff"> 4th house: </tspan><tspan x="678" fill="#ffff00">19Tau28</tspan></text>
<text y="154"><tspan x="606" fill="#ff0000"> 5th house: </tspan><tspan x="678" fill="#00ff00"> 8Gem20</tspan></text>
<text y="164"><tspan x="606" fill="#ffff00"> 6th house: </tspan><tspan x="678" fill="#00ff00">24Gem39</tspan></text>
<text y="174"><tspan x="606" fill="#00ff00"> 7th house: </tspan><tspan x="678" fill="#0000ff">12Can34</tspan></text>
<text y="184"><tspan x="606" fill="#0000ff"> 8th house: </tspan><tspan x="678" fill="#ffff00"> 7Vir39</tspan></text>
<text y="194"><tspan x="606" fill="#ff0000"> 9th house: </tspan><tspan x="678" fill="#00ff00">22Lib35</tspan></text>
<text y="204"><tspan x="606" fill="#ffff00">10th house: </tspan><tspan x="678" fill="#0000ff">19Sco28</tspan></text>
<text y="214"><tspan x="606" fill="#00ff00">11th house: </tspan><tspan x="678" fill="#ff0000"> 8Sag20</tspan></text>
<text y="224"><tspan x="606" fill="#0000ff">12th house: </tspan><tspan x="678" fill="#ff0000">24Sag39</tspan></text>
<text y="244"><tspan x="606" fill="#ff0000"> Sun: </tspan><tspan x="642" fill="#0000ff">17Sco01</tspan><tspan x="696" fill="#bfbfbf">- 0°00'</tspan></text>
<text y="254"><tspan x="606" fill="#0000ff">Moon: </tspan><tspan x="642" fill="#0000ff">23Pis51</tspan><tspan x="696" fill="#bfbfbf">+ 2°41'</tspan></text>
<text y="264"><tspan x="606" fill="#00ff00">Merc: </tspan><tspan x="642" fill="#0000ff">16Sco13</tspan><tspan x="696" fill="#bfbfbf">+ 0°09'</tspan></text>
<text y="274"><tspan x="606" fill="#00ff00">Venu: </tspan><tspan x="642" fill="#ffff00"> 4Cap04</tspan><tspan x="696" fill="#bfbfbf">- 3°32'</tspan></text>
<text y="284"><tspan x="606" fill="#ff0000">Mars: </tspan><tspan x="642" fill="#0000ff"> 3Sco31</tspan><tspan x="696" fill="#bfbfbf">+ 0°29'</tspan></text>
<text y="294"><tspan x="606" fill="#ff0000">Jupi: </tspan><tspan x="642" fill="#0000ff">10Can39</tspan><tspan x="684" fill="#ffffff">R</tspan><tspan x="696" fill="#bfbfbf">- 0°13'</tspan></text>
<text y="304"><tspan x="606" fill="#ffff00">Satu: </tspan><tspan x="642" fill="#ffff00">10Cap00</tspan><tspan x="696" fill="#bfbfbf">+ 0°22'</tspan></text>
<text y="314"><tspan x="606" fill="#00ff00">Uran: </tspan><tspan x="642" fill="#ffff00"> 2Cap49</tspan><tspan x="696" fill="#bfbfbf">- 0°16'</tspan></text>
<text y="324"><tspan x="606" fill="#0000ff">Nept: </tspan><tspan x="642" fill="#ffff00">10Cap16</tspan><tspan x="696" fill="#bfbfbf">+ 0°52'</tspan></text>
<text y="334"><tspan x="606" fill="#0000ff">Plut: </tspan><tspan x="642" fill="#0000ff">15Sco12</tspan><tspan x="696" fill="#bfbfbf">+15°07'</tspan></text>
<text y="344"><tspan x="606" fill="#009090">Node: </tspan><tspan x="642" fill="#00ff00">21Aqu14</tspan><tspan x="684" fill="#ffffff">R</tspan><tspan x="696" fill="#bfbfbf">+ 0°00'</tspan></text>
<text x="606" y="364" fill="#bfbfbf">Fire: 0, Earth: 5,</text>
<text x="606" y="374" fill="#bfbfbf">Air : 1, Water: 7</text>
<text x="606" y="384" fill="#bfbfbf">Car: 6, Fix: 6, Mut: 1</text>
<text x="606" y="394" fill="#bfbfbf">Yang: 1, Yin: 12</text>
<text x="606" y="404" fill="#bfbfbf">M: 8, N: 3, A: 6, D: 5</text>
<text x="606" y="414" fill="#bfbfbf">Ang: 1, Suc: 1, Cad: 9</text>
<text x="606" y="424" fill="#bfbfbf">Learn: 1, Share: 12</text>
</g>
</svg>
</body></html>
